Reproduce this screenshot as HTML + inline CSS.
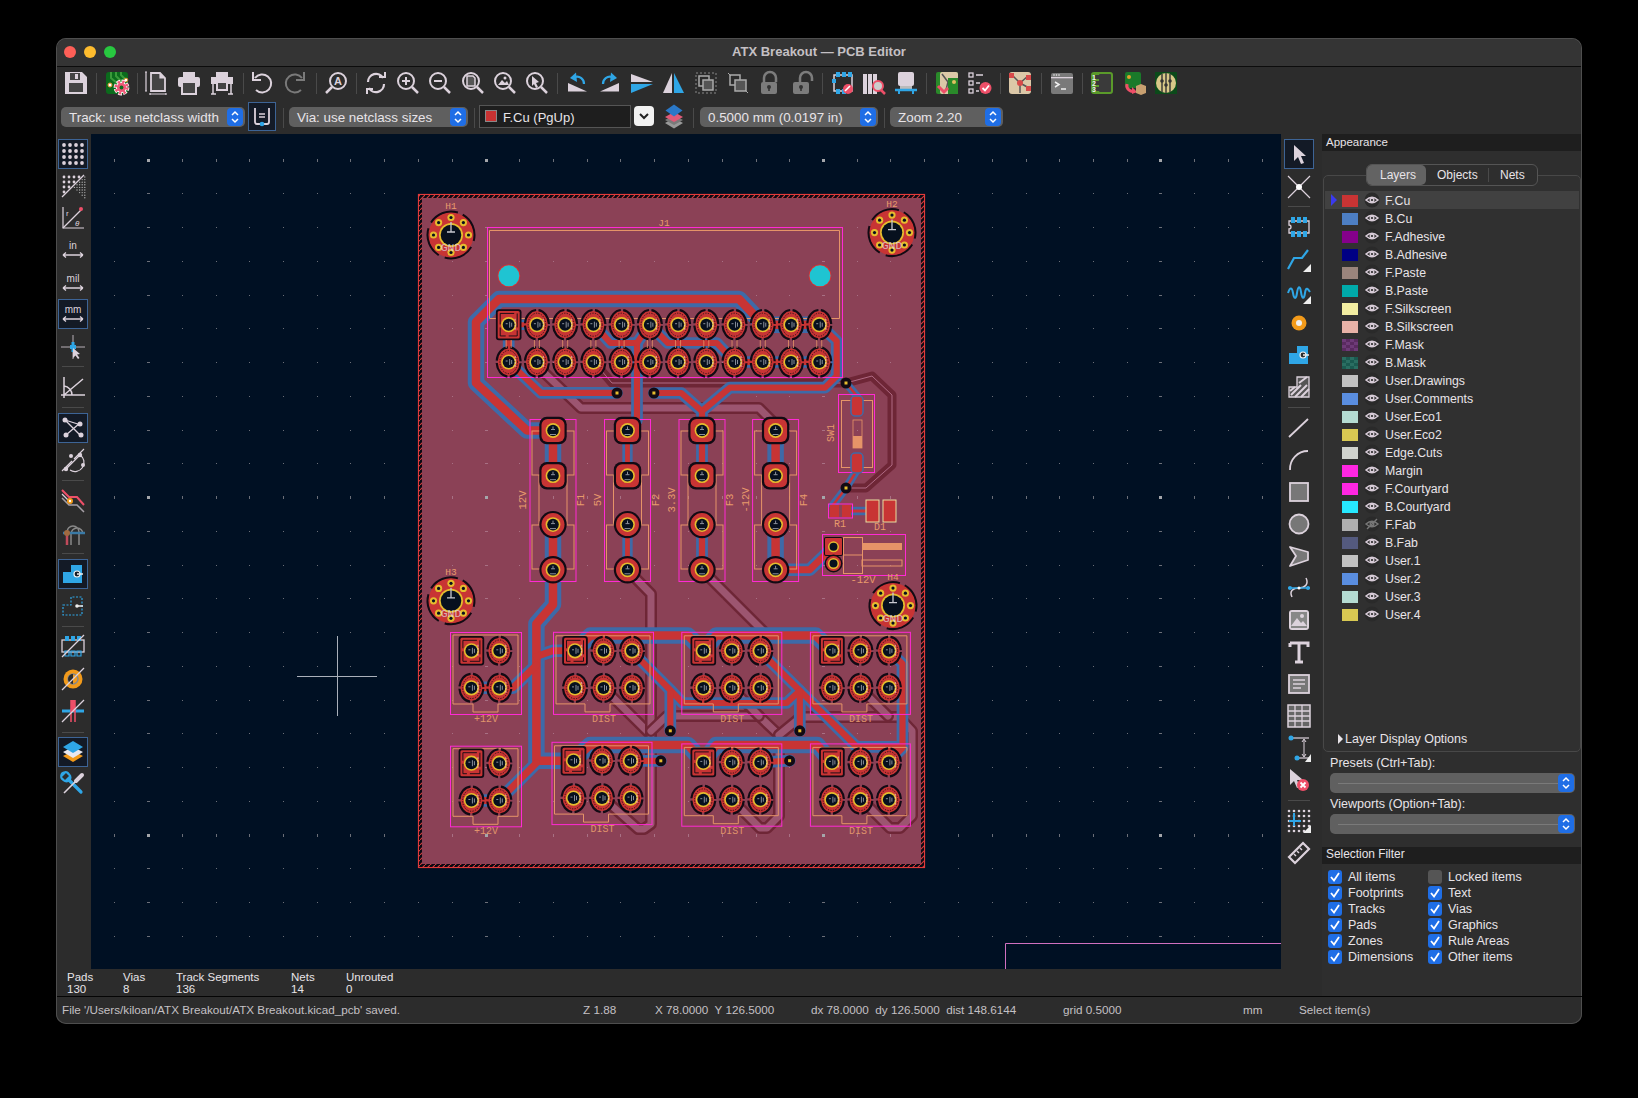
<!DOCTYPE html>
<html><head><meta charset="utf-8"><style>
html,body{margin:0;padding:0;background:#000;width:1638px;height:1098px;overflow:hidden}
body{font-family:"Liberation Sans", sans-serif;position:relative}
#win{position:absolute;left:56px;top:38px;width:1526px;height:986px;border-radius:10px;background:#2c2c2c;overflow:hidden;box-shadow:0 0 0 1px #4e4e4e inset}
</style></head><body>
<div id="win"></div>
<div style="position:absolute;left:57px;top:39px;width:1524px;height:27px;background:#343434;border-radius:9px 9px 0 0"></div>
<div style="position:absolute;left:57px;top:66px;width:1524px;height:1px;background:#0c0c0c"></div>
<div style="position:absolute;left:64px;top:46px;width:12px;height:12px;border-radius:50%;background:#fe5f57"></div>
<div style="position:absolute;left:84px;top:46px;width:12px;height:12px;border-radius:50%;background:#febc2e"></div>
<div style="position:absolute;left:104px;top:46px;width:12px;height:12px;border-radius:50%;background:#28c840"></div>
<div style="position:absolute;left:0;top:44px;width:1638px;text-align:center;font-size:13px;font-weight:bold;color:#c4c0c4;line-height:16px">ATX Breakout — PCB Editor</div>
<svg style="position:absolute;left:65px;top:72px;overflow:visible" width="22" height="22" viewBox="0 0 22 22" ><path d="M0 0H17L22 5V22H0Z" fill="#dcd2dc"/><rect x="5" y="1" width="10" height="7" fill="#444"/><rect x="10" y="2" width="3" height="5" fill="#dcd2dc"/><rect x="4" y="11" width="14" height="9" fill="#444"/></svg><div style="position:absolute;left:96px;top:73px;width:1px;height:21px;background:#4a4a4a"></div><svg style="position:absolute;left:106px;top:72px;overflow:visible" width="22" height="22" viewBox="0 0 22 22" ><rect x="0" y="0" width="22" height="22" rx="3" fill="#0b6b1c"/><path d="M5 0V6L12 12M10 0V4L16 10M15 0V3L20 8" stroke="#3a9a3a" stroke-width="2" fill="none"/><circle cx="4" cy="13" r="2" fill="#fff" stroke="#e0902a"/><circle cx="20" cy="8" r="1.8" fill="#fff" stroke="#e0902a"/><circle cx="15.5" cy="15.5" r="5.6" fill="#fff"/><circle cx="15.5" cy="15.5" r="5.6" fill="none" stroke="#fff" stroke-width="4.6" stroke-dasharray="3.2 1.2" stroke-dashoffset="0.6"/><circle cx="15.5" cy="15.5" r="5.6" fill="none" stroke="#ee5a78" stroke-width="3" stroke-dasharray="2.2 2.2"/><circle cx="15.5" cy="15.5" r="4.6" fill="#ee5a78"/><circle cx="15.5" cy="15.5" r="1.9" fill="#0b6b1c"/></svg><div style="position:absolute;left:137px;top:73px;width:1px;height:21px;background:#4a4a4a"></div><svg style="position:absolute;left:145px;top:72px;overflow:visible" width="22" height="22" viewBox="0 0 22 22" ><path d="M6 1H15L20 6V19H6Z" fill="#444" stroke="#dcd2dc" stroke-width="1.8"/><path d="M15 1V6H20" fill="#dcd2dc" stroke="#dcd2dc" stroke-width="1.2"/><path d="M1 0V19M0 0H2M0 19H2M5 22H21M5 21V23M21 21V23" stroke="#dcd2dc" stroke-width="1.2"/></svg><svg style="position:absolute;left:178px;top:72px;overflow:visible" width="22" height="22" viewBox="0 0 22 22" ><rect x="5" y="0" width="12" height="6" fill="#dcd2dc"/><rect x="0" y="5" width="22" height="10" rx="2" fill="#dcd2dc"/><rect x="4" y="10" width="14" height="12" fill="#444" stroke="#dcd2dc" stroke-width="2"/></svg><svg style="position:absolute;left:211px;top:72px;overflow:visible" width="22" height="22" viewBox="0 0 22 22" ><rect x="5" y="0" width="12" height="6" fill="#dcd2dc"/><rect x="0" y="5" width="22" height="7" fill="#dcd2dc"/><rect x="6" y="10" width="10" height="8" fill="#444" stroke="#dcd2dc" stroke-width="2"/><path d="M2 12V22M20 12V22M0 22H5M17 22H22" stroke="#dcd2dc" stroke-width="1.5"/></svg><div style="position:absolute;left:243px;top:73px;width:1px;height:21px;background:#4a4a4a"></div><svg style="position:absolute;left:251px;top:72px;overflow:visible" width="22" height="22" viewBox="0 0 22 22" ><path d="M4 6A9 9 0 1 1 5 18" stroke="#dcd2dc" stroke-width="2" fill="none"/><path d="M2 0V8H10" stroke="#dcd2dc" stroke-width="2" fill="none"/></svg><svg style="position:absolute;left:284px;top:72px;overflow:visible" width="22" height="22" viewBox="0 0 22 22" ><path d="M18 6A9 9 0 1 0 17 18" stroke="#7a7a7a" stroke-width="2" fill="none"/><path d="M20 0V8H12" stroke="#7a7a7a" stroke-width="2" fill="none"/></svg><div style="position:absolute;left:316px;top:73px;width:1px;height:21px;background:#4a4a4a"></div><svg style="position:absolute;left:325px;top:72px;overflow:visible" width="22" height="22" viewBox="0 0 22 22" ><circle cx="13" cy="9" r="8" stroke="#dcd2dc" stroke-width="2" fill="none"/><path d="M7 15L1 21" stroke="#dcd2dc" stroke-width="2.5"/><text x="13" y="13" font-size="11" font-weight="bold" fill="#dcd2dc" text-anchor="middle" font-family="Liberation Sans">A</text></svg><div style="position:absolute;left:356px;top:73px;width:1px;height:21px;background:#4a4a4a"></div><svg style="position:absolute;left:365px;top:72px;overflow:visible" width="22" height="22" viewBox="0 0 22 22" ><path d="M3 10A8 8 0 0 1 18 6M19 12A8 8 0 0 1 4 16" stroke="#dcd2dc" stroke-width="2.2" fill="none"/><path d="M14 5H20V0M8 17H2V22" stroke="#dcd2dc" stroke-width="2" fill="none"/></svg><svg style="position:absolute;left:397px;top:72px;overflow:visible" width="22" height="22" viewBox="0 0 22 22" ><circle cx="9" cy="9" r="8" stroke="#dcd2dc" stroke-width="2" fill="none"/><path d="M15 15L21 21" stroke="#dcd2dc" stroke-width="2.5"/><path d="M5 9H13M9 5V13" stroke="#dcd2dc" stroke-width="2"/></svg><svg style="position:absolute;left:429px;top:72px;overflow:visible" width="22" height="22" viewBox="0 0 22 22" ><circle cx="9" cy="9" r="8" stroke="#dcd2dc" stroke-width="2" fill="none"/><path d="M15 15L21 21" stroke="#dcd2dc" stroke-width="2.5"/><path d="M5 9H13" stroke="#dcd2dc" stroke-width="2"/></svg><svg style="position:absolute;left:462px;top:72px;overflow:visible" width="22" height="22" viewBox="0 0 22 22" ><circle cx="9" cy="9" r="8" stroke="#dcd2dc" stroke-width="2" fill="none"/><path d="M15 15L21 21" stroke="#dcd2dc" stroke-width="2.5"/><path d="M5 4H11L13 6V14H5Z" fill="#555" stroke="#dcd2dc" stroke-width="1.5"/></svg><svg style="position:absolute;left:494px;top:72px;overflow:visible" width="22" height="22" viewBox="0 0 22 22" ><circle cx="9" cy="9" r="8" stroke="#dcd2dc" stroke-width="2" fill="none"/><path d="M15 15L21 21" stroke="#dcd2dc" stroke-width="2.5"/><path d="M4 13L8 8L11 11L13 9L15 13Z" fill="#dcd2dc"/><circle cx="11" cy="6" r="1.5" fill="#dcd2dc"/></svg><svg style="position:absolute;left:526px;top:72px;overflow:visible" width="22" height="22" viewBox="0 0 22 22" ><circle cx="9" cy="9" r="8" stroke="#dcd2dc" stroke-width="2" fill="none"/><path d="M15 15L21 21" stroke="#dcd2dc" stroke-width="2.5"/><path d="M6 4L13 10L10 11L12 15L10 16L8 12L6 14Z" fill="#dcd2dc"/></svg><div style="position:absolute;left:557px;top:73px;width:1px;height:21px;background:#4a4a4a"></div><svg style="position:absolute;left:566px;top:72px;overflow:visible" width="22" height="22" viewBox="0 0 22 22" ><path d="M2 11L2 19.5L21 19.5Z" fill="#dcd2dc"/><path d="M18 12A7 7 0 0 0 9 5" stroke="#2fa6e6" stroke-width="2.2" fill="none"/><path d="M4 6L10 0.5L11 10Z" fill="#2fa6e6"/></svg><svg style="position:absolute;left:599px;top:72px;overflow:visible" width="22" height="22" viewBox="0 0 22 22" ><g transform="translate(22,0) scale(-1,1)"><path d="M2 11L2 19.5L21 19.5Z" fill="#dcd2dc"/><path d="M18 12A7 7 0 0 0 9 5" stroke="#2fa6e6" stroke-width="2.2" fill="none"/><path d="M4 6L10 0.5L11 10Z" fill="#2fa6e6"/></g></svg><svg style="position:absolute;left:631px;top:72px;overflow:visible" width="22" height="22" viewBox="0 0 22 22" ><path d="M0 2L22 10H0Z" fill="#dcd2dc"/><path d="M0 12H22L0 21Z" fill="#2fa6e6"/></svg><svg style="position:absolute;left:662px;top:72px;overflow:visible" width="22" height="22" viewBox="0 0 22 22" ><path d="M10 1L10 21H1Z" fill="#dcd2dc"/><path d="M12 1L22 21H12Z" fill="#2fa6e6"/></svg><svg style="position:absolute;left:695px;top:72px;overflow:visible" width="22" height="22" viewBox="0 0 22 22" ><rect x="1" y="1" width="20" height="20" fill="none" stroke="#888" stroke-width="1" stroke-dasharray="2 2"/><rect x="4" y="4" width="10" height="10" fill="none" stroke="#aaa" stroke-width="1.5"/><rect x="8" y="8" width="10" height="10" fill="#555" stroke="#aaa" stroke-width="1.5"/></svg><svg style="position:absolute;left:727px;top:72px;overflow:visible" width="22" height="22" viewBox="0 0 22 22" ><rect x="3" y="3" width="10" height="10" fill="none" stroke="#aaa" stroke-width="1.5"/><rect x="8" y="8" width="11" height="11" fill="#555" stroke="#aaa" stroke-width="1.5"/><path d="M1 1L4 4M21 21L18 18" stroke="#aaa"/></svg><svg style="position:absolute;left:759px;top:72px;overflow:visible" width="22" height="22" viewBox="0 0 22 22" ><path d="M5 10V6A6 6 0 0 1 17 6V10" stroke="#7c7c7c" stroke-width="2.5" fill="none"/><rect x="2" y="10" width="16" height="12" rx="2" fill="#7c7c7c"/><circle cx="10" cy="15" r="2" fill="#333"/><rect x="9.2" y="15" width="1.6" height="4" fill="#333"/></svg><svg style="position:absolute;left:791px;top:72px;overflow:visible" width="22" height="22" viewBox="0 0 22 22" ><path d="M9 10V6A6 6 0 0 1 21 6V9" stroke="#7c7c7c" stroke-width="2.5" fill="none"/><rect x="2" y="10" width="16" height="12" rx="2" fill="#7c7c7c"/><circle cx="10" cy="15" r="2" fill="#333"/><rect x="9.2" y="15" width="1.6" height="4" fill="#333"/></svg><div style="position:absolute;left:822px;top:73px;width:1px;height:21px;background:#4a4a4a"></div><svg style="position:absolute;left:831px;top:72px;overflow:visible" width="22" height="22" viewBox="0 0 22 22" ><rect x="3" y="3" width="18" height="16" fill="none" stroke="#dcd2dc" stroke-width="1.5"/><path d="M5 0h4v5h-4zM11 0h4v5h-4zM17 0h4v5h-4zM5 17h4v5h-4zM11 17h4v5h-4zM1 7h4v4h-4z" fill="#2fa6e6"/><circle cx="17" cy="17" r="5" fill="#ee4f68"/><path d="M14 19L19 14" stroke="#fff" stroke-width="1.6"/></svg><svg style="position:absolute;left:863px;top:72px;overflow:visible" width="22" height="22" viewBox="0 0 22 22" ><rect x="0" y="2" width="4" height="20" fill="#dcd2dc"/><rect x="5" y="2" width="4" height="20" fill="#dcd2dc"/><rect x="10" y="2" width="4" height="20" fill="#dcd2dc"/><circle cx="15" cy="14" r="5" fill="#ccc" stroke="#ee4f68" stroke-width="2"/><path d="M18 18L22 22" stroke="#ee4f68" stroke-width="2.5"/></svg><svg style="position:absolute;left:895px;top:72px;overflow:visible" width="22" height="22" viewBox="0 0 22 22" ><rect x="3" y="0" width="16" height="14" rx="2" fill="#dcd2dc"/><rect x="5" y="14" width="12" height="3" fill="#bbb"/><path d="M0 18H22" stroke="#2fa6e6" stroke-width="2.5"/><path d="M4 18V22M18 18V22" stroke="#2fa6e6" stroke-width="2"/></svg><div style="position:absolute;left:926px;top:73px;width:1px;height:21px;background:#4a4a4a"></div><svg style="position:absolute;left:936px;top:72px;overflow:visible" width="22" height="22" viewBox="0 0 22 22" ><rect x="0" y="0" width="22" height="22" rx="2" fill="#2a8a2a"/><rect x="4" y="0" width="18" height="22" rx="2" fill="#dcc8a8"/><path d="M6 2L12 10L10 18" stroke="#555" stroke-width="1.5" fill="none"/><rect x="12" y="6" width="10" height="16" fill="#2a8a2a"/><circle cx="18" cy="10" r="2" fill="#e0c060"/><path d="M2 14L8 20L12 16" stroke="#ee4f68" stroke-width="3" fill="none"/></svg><svg style="position:absolute;left:969px;top:72px;overflow:visible" width="22" height="22" viewBox="0 0 22 22" ><rect x="0" y="1" width="4" height="4" fill="none" stroke="#dcd2dc" stroke-width="1.3"/><rect x="0" y="9" width="4" height="4" fill="none" stroke="#dcd2dc" stroke-width="1.3"/><rect x="0" y="17" width="4" height="4" fill="none" stroke="#dcd2dc" stroke-width="1.3"/><path d="M7 3H14M7 11H11M7 19H10" stroke="#dcd2dc" stroke-width="1.3"/><circle cx="16.5" cy="16" r="6" fill="#ee4f68"/><path d="M13.5 16L16 18.5L20 13.5" stroke="#fff" stroke-width="1.8" fill="none"/></svg><div style="position:absolute;left:1000px;top:73px;width:1px;height:21px;background:#4a4a4a"></div><svg style="position:absolute;left:1009px;top:72px;overflow:visible" width="22" height="22" viewBox="0 0 22 22" ><rect x="0" y="0" width="22" height="22" rx="3" fill="#dcc8a8"/><path d="M11 11L3 3M11 11L19 4M11 11L11 21M11 11L20 16" stroke="#555" stroke-width="1.5"/><rect x="0" y="1" width="5" height="5" fill="#d84a4a"/><rect x="17" y="3" width="5" height="5" fill="#d84a4a"/><rect x="17" y="14" width="5" height="5" fill="#d84a4a"/><circle cx="11" cy="11" r="3" fill="#d84a4a"/></svg><div style="position:absolute;left:1041px;top:73px;width:1px;height:21px;background:#4a4a4a"></div><svg style="position:absolute;left:1051px;top:72px;overflow:visible" width="22" height="22" viewBox="0 0 22 22" ><rect x="0" y="1" width="22" height="21" rx="2" fill="#7a7a7a"/><rect x="0" y="5" width="22" height="1.3" fill="#dcd2dc"/><circle cx="3" cy="3" r="0.8" fill="#eee"/><circle cx="5.5" cy="3" r="0.8" fill="#eee"/><circle cx="8" cy="3" r="0.8" fill="#eee"/><path d="M4 10L8 12.5L4 15M10 17H15" stroke="#f0f0f0" stroke-width="1.5" fill="none"/></svg><div style="position:absolute;left:1082px;top:73px;width:1px;height:21px;background:#4a4a4a"></div><svg style="position:absolute;left:1091px;top:72px;overflow:visible" width="22" height="22" viewBox="0 0 22 22" ><rect x="0" y="0" width="22" height="22" rx="3" fill="#5a9a2a"/><rect x="8" y="2" width="12" height="18" rx="1" fill="#3a3a3a"/><rect x="4" y="3" width="4" height="4" fill="#3a3a3a"/><rect x="4" y="9" width="4" height="4" fill="#3a3a3a"/><rect x="4" y="15" width="4" height="4" fill="#3a3a3a"/><text x="3" y="8" font-size="7" font-weight="bold" fill="#f0f0f0" font-family="Liberation Sans" text-anchor="middle">1</text><text x="3" y="14" font-size="7" font-weight="bold" fill="#f0f0f0" font-family="Liberation Sans" text-anchor="middle">2</text><text x="3" y="20" font-size="7" font-weight="bold" fill="#f0f0f0" font-family="Liberation Sans" text-anchor="middle">3</text></svg><svg style="position:absolute;left:1123px;top:72px;overflow:visible" width="22" height="22" viewBox="0 0 22 22" ><rect x="2" y="0" width="16" height="16" rx="2" fill="#1a7a2a"/><circle cx="6" cy="5" r="2" fill="#e0a030"/><path d="M4 12A6 6 0 0 0 12 19" stroke="#ee4f68" stroke-width="3" fill="none"/><path d="M9 15L14 20L9 22Z" fill="#ee4f68"/><path d="M13 14L18 12L23 14V21L18 23L13 21Z" fill="#c8a070"/></svg><svg style="position:absolute;left:1155px;top:72px;overflow:visible" width="22" height="22" viewBox="0 0 22 22" ><rect x="0" y="0" width="22" height="22" fill="#0b4a1a"/><circle cx="11" cy="11" r="10" fill="#d8c888"/><path d="M7 2V20M11 1V21M15 2V20" stroke="#333" stroke-width="1.4"/><circle cx="7" cy="9" r="1.8" fill="#333"/><circle cx="15" cy="9" r="1.8" fill="#333"/><circle cx="11" cy="13" r="1.8" fill="#333"/></svg>
<div style="position:absolute;left:61px;top:107px;width:184px;height:20px;border-radius:5px;background:#5f5f5f"></div><div style="position:absolute;left:69px;top:110.8px;font-size:13.4px;line-height:13.4px;color:#e8e4e8;font-weight:normal;white-space:nowrap;">Track: use netclass width</div><div style="position:absolute;left:227px;top:108px;width:16px;height:18px;border-radius:4px;background:#1f6ee6"></div><svg style="position:absolute;left:227px;top:108px;overflow:visible" width="16" height="18" viewBox="0 0 16 18" ><path d="M5 7.0L8 4.0L11 7.0M5 11.0L8 14.0L11 11.0" stroke="#fff" stroke-width="1.5" fill="none"/></svg><div style="position:absolute;left:248px;top:102px;width:28px;height:29px;border:1px solid #3d6496;background:#141b27;box-sizing:border-box"></div><svg style="position:absolute;left:253px;top:107px;overflow:visible" width="18" height="20" viewBox="0 0 18 20" ><path d="M2 1V15A2 2 0 0 0 4 17H14A2 2 0 0 0 16 15V1" stroke="#dcd2dc" stroke-width="1.8" fill="none"/><path d="M6 7H12M6 10H12" stroke="#dcd2dc" stroke-width="1.3"/><circle cx="9" cy="17" r="2.3" fill="#2fa6e6"/></svg><div style="position:absolute;left:283px;top:108px;width:1px;height:20px;background:#4a4a4a"></div><div style="position:absolute;left:289px;top:107px;width:179px;height:20px;border-radius:5px;background:#5f5f5f"></div><div style="position:absolute;left:297px;top:110.8px;font-size:13.4px;line-height:13.4px;color:#e8e4e8;font-weight:normal;white-space:nowrap;">Via: use netclass sizes</div><div style="position:absolute;left:450px;top:108px;width:16px;height:18px;border-radius:4px;background:#1f6ee6"></div><svg style="position:absolute;left:450px;top:108px;overflow:visible" width="16" height="18" viewBox="0 0 16 18" ><path d="M5 7.0L8 4.0L11 7.0M5 11.0L8 14.0L11 11.0" stroke="#fff" stroke-width="1.5" fill="none"/></svg><div style="position:absolute;left:474px;top:108px;width:1px;height:20px;background:#4a4a4a"></div><div style="position:absolute;left:479px;top:105px;width:152px;height:23px;border:1px solid #555;background:#1e1e1e;box-sizing:border-box"></div><div style="position:absolute;left:485px;top:110px;width:12px;height:12px;background:#c83232;border:0.5px solid #888;box-sizing:border-box"></div><div style="position:absolute;left:503px;top:111.4px;font-size:13px;line-height:13px;color:#e8e4e8;font-weight:normal;white-space:nowrap;">F.Cu (PgUp)</div><div style="position:absolute;left:634px;top:106px;width:20px;height:20px;border-radius:4px;background:#f2f2f2"></div><svg style="position:absolute;left:634px;top:106px;overflow:visible" width="20" height="20" viewBox="0 0 20 20" ><path d="M6 8L10 12L14 8" stroke="#222" stroke-width="2" fill="none"/></svg><svg style="position:absolute;left:664px;top:104px;overflow:visible" width="20" height="26" viewBox="0 0 20 26" ><path d="M10 14L19 19L10 24.5L1 19Z" fill="#9a9a9a"/><path d="M10 11L19 16L10 21L1 16Z" fill="#7a7a7a"/><path d="M10 8L19 13L10 18L1 13Z" fill="#e05a78"/><path d="M10 0.5L18.5 6.5L10 12.5L1.5 6.5Z" fill="#2a78c8"/></svg><div style="position:absolute;left:693px;top:108px;width:1px;height:20px;background:#4a4a4a"></div><div style="position:absolute;left:700px;top:107px;width:178px;height:20px;border-radius:5px;background:#5f5f5f"></div><div style="position:absolute;left:708px;top:110.8px;font-size:13.4px;line-height:13.4px;color:#e8e4e8;font-weight:normal;white-space:nowrap;">0.5000 mm (0.0197 in)</div><div style="position:absolute;left:860px;top:108px;width:16px;height:18px;border-radius:4px;background:#1f6ee6"></div><svg style="position:absolute;left:860px;top:108px;overflow:visible" width="16" height="18" viewBox="0 0 16 18" ><path d="M5 7.0L8 4.0L11 7.0M5 11.0L8 14.0L11 11.0" stroke="#fff" stroke-width="1.5" fill="none"/></svg><div style="position:absolute;left:884px;top:108px;width:1px;height:20px;background:#4a4a4a"></div><div style="position:absolute;left:890px;top:107px;width:113px;height:20px;border-radius:5px;background:#5f5f5f"></div><div style="position:absolute;left:898px;top:110.8px;font-size:13.4px;line-height:13.4px;color:#e8e4e8;font-weight:normal;white-space:nowrap;">Zoom 2.20</div><div style="position:absolute;left:985px;top:108px;width:16px;height:18px;border-radius:4px;background:#1f6ee6"></div><svg style="position:absolute;left:985px;top:108px;overflow:visible" width="16" height="18" viewBox="0 0 16 18" ><path d="M5 7.0L8 4.0L11 7.0M5 11.0L8 14.0L11 11.0" stroke="#fff" stroke-width="1.5" fill="none"/></svg>
<div style="position:absolute;left:91px;top:134px;width:1190px;height:835px;background:#001023;overflow:hidden"><svg width="1190" height="835" viewBox="91 134 1190 835" style="position:absolute;left:0;top:0"><defs><pattern id="hatch" width="5" height="5" patternUnits="userSpaceOnUse"><rect width="5" height="5" fill="#0a0a14"/><path d="M0 5L5 0" stroke="#d83a3a" stroke-width="1.1"/></pattern></defs><rect x="418" y="194" width="507" height="674" fill="#8b4156"/><rect x="114" y="159" width="1" height="3" fill="#6b6f78"/><rect x="114" y="193" width="1" height="1" fill="#6b6f78"/><rect x="114" y="227" width="1" height="1" fill="#6b6f78"/><rect x="114" y="261" width="1" height="1" fill="#6b6f78"/><rect x="114" y="295" width="1" height="1" fill="#6b6f78"/><rect x="114" y="328" width="1" height="1" fill="#6b6f78"/><rect x="114" y="362" width="1" height="1" fill="#6b6f78"/><rect x="114" y="396" width="1" height="1" fill="#6b6f78"/><rect x="114" y="430" width="1" height="1" fill="#6b6f78"/><rect x="114" y="463" width="1" height="1" fill="#6b6f78"/><rect x="114" y="496" width="1" height="3" fill="#6b6f78"/><rect x="114" y="531" width="1" height="1" fill="#6b6f78"/><rect x="114" y="565" width="1" height="1" fill="#6b6f78"/><rect x="114" y="598" width="1" height="1" fill="#6b6f78"/><rect x="114" y="632" width="1" height="1" fill="#6b6f78"/><rect x="114" y="666" width="1" height="1" fill="#6b6f78"/><rect x="114" y="700" width="1" height="1" fill="#6b6f78"/><rect x="114" y="733" width="1" height="1" fill="#6b6f78"/><rect x="114" y="767" width="1" height="1" fill="#6b6f78"/><rect x="114" y="801" width="1" height="1" fill="#6b6f78"/><rect x="114" y="834" width="1" height="3" fill="#6b6f78"/><rect x="114" y="868" width="1" height="1" fill="#6b6f78"/><rect x="114" y="902" width="1" height="1" fill="#6b6f78"/><rect x="114" y="936" width="1" height="1" fill="#6b6f78"/><rect x="147" y="159" width="3" height="3" fill="#a4a6aa"/><rect x="147" y="193" width="3" height="1" fill="#6b6f78"/><rect x="147" y="227" width="3" height="1" fill="#6b6f78"/><rect x="147" y="261" width="3" height="1" fill="#6b6f78"/><rect x="147" y="295" width="3" height="1" fill="#6b6f78"/><rect x="147" y="328" width="3" height="1" fill="#6b6f78"/><rect x="147" y="362" width="3" height="1" fill="#6b6f78"/><rect x="147" y="396" width="3" height="1" fill="#6b6f78"/><rect x="147" y="430" width="3" height="1" fill="#6b6f78"/><rect x="147" y="463" width="3" height="1" fill="#6b6f78"/><rect x="147" y="496" width="3" height="3" fill="#a4a6aa"/><rect x="147" y="531" width="3" height="1" fill="#6b6f78"/><rect x="147" y="565" width="3" height="1" fill="#6b6f78"/><rect x="147" y="598" width="3" height="1" fill="#6b6f78"/><rect x="147" y="632" width="3" height="1" fill="#6b6f78"/><rect x="147" y="666" width="3" height="1" fill="#6b6f78"/><rect x="147" y="700" width="3" height="1" fill="#6b6f78"/><rect x="147" y="733" width="3" height="1" fill="#6b6f78"/><rect x="147" y="767" width="3" height="1" fill="#6b6f78"/><rect x="147" y="801" width="3" height="1" fill="#6b6f78"/><rect x="147" y="834" width="3" height="3" fill="#a4a6aa"/><rect x="147" y="868" width="3" height="1" fill="#6b6f78"/><rect x="147" y="902" width="3" height="1" fill="#6b6f78"/><rect x="147" y="936" width="3" height="1" fill="#6b6f78"/><rect x="182" y="159" width="1" height="3" fill="#6b6f78"/><rect x="182" y="193" width="1" height="1" fill="#6b6f78"/><rect x="182" y="227" width="1" height="1" fill="#6b6f78"/><rect x="182" y="261" width="1" height="1" fill="#6b6f78"/><rect x="182" y="295" width="1" height="1" fill="#6b6f78"/><rect x="182" y="328" width="1" height="1" fill="#6b6f78"/><rect x="182" y="362" width="1" height="1" fill="#6b6f78"/><rect x="182" y="396" width="1" height="1" fill="#6b6f78"/><rect x="182" y="430" width="1" height="1" fill="#6b6f78"/><rect x="182" y="463" width="1" height="1" fill="#6b6f78"/><rect x="182" y="496" width="1" height="3" fill="#6b6f78"/><rect x="182" y="531" width="1" height="1" fill="#6b6f78"/><rect x="182" y="565" width="1" height="1" fill="#6b6f78"/><rect x="182" y="598" width="1" height="1" fill="#6b6f78"/><rect x="182" y="632" width="1" height="1" fill="#6b6f78"/><rect x="182" y="666" width="1" height="1" fill="#6b6f78"/><rect x="182" y="700" width="1" height="1" fill="#6b6f78"/><rect x="182" y="733" width="1" height="1" fill="#6b6f78"/><rect x="182" y="767" width="1" height="1" fill="#6b6f78"/><rect x="182" y="801" width="1" height="1" fill="#6b6f78"/><rect x="182" y="834" width="1" height="3" fill="#6b6f78"/><rect x="182" y="868" width="1" height="1" fill="#6b6f78"/><rect x="182" y="902" width="1" height="1" fill="#6b6f78"/><rect x="182" y="936" width="1" height="1" fill="#6b6f78"/><rect x="216" y="159" width="1" height="3" fill="#6b6f78"/><rect x="216" y="193" width="1" height="1" fill="#6b6f78"/><rect x="216" y="227" width="1" height="1" fill="#6b6f78"/><rect x="216" y="261" width="1" height="1" fill="#6b6f78"/><rect x="216" y="295" width="1" height="1" fill="#6b6f78"/><rect x="216" y="328" width="1" height="1" fill="#6b6f78"/><rect x="216" y="362" width="1" height="1" fill="#6b6f78"/><rect x="216" y="396" width="1" height="1" fill="#6b6f78"/><rect x="216" y="430" width="1" height="1" fill="#6b6f78"/><rect x="216" y="463" width="1" height="1" fill="#6b6f78"/><rect x="216" y="496" width="1" height="3" fill="#6b6f78"/><rect x="216" y="531" width="1" height="1" fill="#6b6f78"/><rect x="216" y="565" width="1" height="1" fill="#6b6f78"/><rect x="216" y="598" width="1" height="1" fill="#6b6f78"/><rect x="216" y="632" width="1" height="1" fill="#6b6f78"/><rect x="216" y="666" width="1" height="1" fill="#6b6f78"/><rect x="216" y="700" width="1" height="1" fill="#6b6f78"/><rect x="216" y="733" width="1" height="1" fill="#6b6f78"/><rect x="216" y="767" width="1" height="1" fill="#6b6f78"/><rect x="216" y="801" width="1" height="1" fill="#6b6f78"/><rect x="216" y="834" width="1" height="3" fill="#6b6f78"/><rect x="216" y="868" width="1" height="1" fill="#6b6f78"/><rect x="216" y="902" width="1" height="1" fill="#6b6f78"/><rect x="216" y="936" width="1" height="1" fill="#6b6f78"/><rect x="249" y="159" width="1" height="3" fill="#6b6f78"/><rect x="249" y="193" width="1" height="1" fill="#6b6f78"/><rect x="249" y="227" width="1" height="1" fill="#6b6f78"/><rect x="249" y="261" width="1" height="1" fill="#6b6f78"/><rect x="249" y="295" width="1" height="1" fill="#6b6f78"/><rect x="249" y="328" width="1" height="1" fill="#6b6f78"/><rect x="249" y="362" width="1" height="1" fill="#6b6f78"/><rect x="249" y="396" width="1" height="1" fill="#6b6f78"/><rect x="249" y="430" width="1" height="1" fill="#6b6f78"/><rect x="249" y="463" width="1" height="1" fill="#6b6f78"/><rect x="249" y="496" width="1" height="3" fill="#6b6f78"/><rect x="249" y="531" width="1" height="1" fill="#6b6f78"/><rect x="249" y="565" width="1" height="1" fill="#6b6f78"/><rect x="249" y="598" width="1" height="1" fill="#6b6f78"/><rect x="249" y="632" width="1" height="1" fill="#6b6f78"/><rect x="249" y="666" width="1" height="1" fill="#6b6f78"/><rect x="249" y="700" width="1" height="1" fill="#6b6f78"/><rect x="249" y="733" width="1" height="1" fill="#6b6f78"/><rect x="249" y="767" width="1" height="1" fill="#6b6f78"/><rect x="249" y="801" width="1" height="1" fill="#6b6f78"/><rect x="249" y="834" width="1" height="3" fill="#6b6f78"/><rect x="249" y="868" width="1" height="1" fill="#6b6f78"/><rect x="249" y="902" width="1" height="1" fill="#6b6f78"/><rect x="249" y="936" width="1" height="1" fill="#6b6f78"/><rect x="283" y="159" width="1" height="3" fill="#6b6f78"/><rect x="283" y="193" width="1" height="1" fill="#6b6f78"/><rect x="283" y="227" width="1" height="1" fill="#6b6f78"/><rect x="283" y="261" width="1" height="1" fill="#6b6f78"/><rect x="283" y="295" width="1" height="1" fill="#6b6f78"/><rect x="283" y="328" width="1" height="1" fill="#6b6f78"/><rect x="283" y="362" width="1" height="1" fill="#6b6f78"/><rect x="283" y="396" width="1" height="1" fill="#6b6f78"/><rect x="283" y="430" width="1" height="1" fill="#6b6f78"/><rect x="283" y="463" width="1" height="1" fill="#6b6f78"/><rect x="283" y="496" width="1" height="3" fill="#6b6f78"/><rect x="283" y="531" width="1" height="1" fill="#6b6f78"/><rect x="283" y="565" width="1" height="1" fill="#6b6f78"/><rect x="283" y="598" width="1" height="1" fill="#6b6f78"/><rect x="283" y="632" width="1" height="1" fill="#6b6f78"/><rect x="283" y="666" width="1" height="1" fill="#6b6f78"/><rect x="283" y="700" width="1" height="1" fill="#6b6f78"/><rect x="283" y="733" width="1" height="1" fill="#6b6f78"/><rect x="283" y="767" width="1" height="1" fill="#6b6f78"/><rect x="283" y="801" width="1" height="1" fill="#6b6f78"/><rect x="283" y="834" width="1" height="3" fill="#6b6f78"/><rect x="283" y="868" width="1" height="1" fill="#6b6f78"/><rect x="283" y="902" width="1" height="1" fill="#6b6f78"/><rect x="283" y="936" width="1" height="1" fill="#6b6f78"/><rect x="317" y="159" width="1" height="3" fill="#6b6f78"/><rect x="317" y="193" width="1" height="1" fill="#6b6f78"/><rect x="317" y="227" width="1" height="1" fill="#6b6f78"/><rect x="317" y="261" width="1" height="1" fill="#6b6f78"/><rect x="317" y="295" width="1" height="1" fill="#6b6f78"/><rect x="317" y="328" width="1" height="1" fill="#6b6f78"/><rect x="317" y="362" width="1" height="1" fill="#6b6f78"/><rect x="317" y="396" width="1" height="1" fill="#6b6f78"/><rect x="317" y="430" width="1" height="1" fill="#6b6f78"/><rect x="317" y="463" width="1" height="1" fill="#6b6f78"/><rect x="317" y="496" width="1" height="3" fill="#6b6f78"/><rect x="317" y="531" width="1" height="1" fill="#6b6f78"/><rect x="317" y="565" width="1" height="1" fill="#6b6f78"/><rect x="317" y="598" width="1" height="1" fill="#6b6f78"/><rect x="317" y="632" width="1" height="1" fill="#6b6f78"/><rect x="317" y="666" width="1" height="1" fill="#6b6f78"/><rect x="317" y="700" width="1" height="1" fill="#6b6f78"/><rect x="317" y="733" width="1" height="1" fill="#6b6f78"/><rect x="317" y="767" width="1" height="1" fill="#6b6f78"/><rect x="317" y="801" width="1" height="1" fill="#6b6f78"/><rect x="317" y="834" width="1" height="3" fill="#6b6f78"/><rect x="317" y="868" width="1" height="1" fill="#6b6f78"/><rect x="317" y="902" width="1" height="1" fill="#6b6f78"/><rect x="317" y="936" width="1" height="1" fill="#6b6f78"/><rect x="350" y="159" width="1" height="3" fill="#6b6f78"/><rect x="350" y="193" width="1" height="1" fill="#6b6f78"/><rect x="350" y="227" width="1" height="1" fill="#6b6f78"/><rect x="350" y="261" width="1" height="1" fill="#6b6f78"/><rect x="350" y="295" width="1" height="1" fill="#6b6f78"/><rect x="350" y="328" width="1" height="1" fill="#6b6f78"/><rect x="350" y="362" width="1" height="1" fill="#6b6f78"/><rect x="350" y="396" width="1" height="1" fill="#6b6f78"/><rect x="350" y="430" width="1" height="1" fill="#6b6f78"/><rect x="350" y="463" width="1" height="1" fill="#6b6f78"/><rect x="350" y="496" width="1" height="3" fill="#6b6f78"/><rect x="350" y="531" width="1" height="1" fill="#6b6f78"/><rect x="350" y="565" width="1" height="1" fill="#6b6f78"/><rect x="350" y="598" width="1" height="1" fill="#6b6f78"/><rect x="350" y="632" width="1" height="1" fill="#6b6f78"/><rect x="350" y="666" width="1" height="1" fill="#6b6f78"/><rect x="350" y="700" width="1" height="1" fill="#6b6f78"/><rect x="350" y="733" width="1" height="1" fill="#6b6f78"/><rect x="350" y="767" width="1" height="1" fill="#6b6f78"/><rect x="350" y="801" width="1" height="1" fill="#6b6f78"/><rect x="350" y="834" width="1" height="3" fill="#6b6f78"/><rect x="350" y="868" width="1" height="1" fill="#6b6f78"/><rect x="350" y="902" width="1" height="1" fill="#6b6f78"/><rect x="350" y="936" width="1" height="1" fill="#6b6f78"/><rect x="384" y="159" width="1" height="3" fill="#6b6f78"/><rect x="384" y="193" width="1" height="1" fill="#6b6f78"/><rect x="384" y="227" width="1" height="1" fill="#6b6f78"/><rect x="384" y="261" width="1" height="1" fill="#6b6f78"/><rect x="384" y="295" width="1" height="1" fill="#6b6f78"/><rect x="384" y="328" width="1" height="1" fill="#6b6f78"/><rect x="384" y="362" width="1" height="1" fill="#6b6f78"/><rect x="384" y="396" width="1" height="1" fill="#6b6f78"/><rect x="384" y="430" width="1" height="1" fill="#6b6f78"/><rect x="384" y="463" width="1" height="1" fill="#6b6f78"/><rect x="384" y="496" width="1" height="3" fill="#6b6f78"/><rect x="384" y="531" width="1" height="1" fill="#6b6f78"/><rect x="384" y="565" width="1" height="1" fill="#6b6f78"/><rect x="384" y="598" width="1" height="1" fill="#6b6f78"/><rect x="384" y="632" width="1" height="1" fill="#6b6f78"/><rect x="384" y="666" width="1" height="1" fill="#6b6f78"/><rect x="384" y="700" width="1" height="1" fill="#6b6f78"/><rect x="384" y="733" width="1" height="1" fill="#6b6f78"/><rect x="384" y="767" width="1" height="1" fill="#6b6f78"/><rect x="384" y="801" width="1" height="1" fill="#6b6f78"/><rect x="384" y="834" width="1" height="3" fill="#6b6f78"/><rect x="384" y="868" width="1" height="1" fill="#6b6f78"/><rect x="384" y="902" width="1" height="1" fill="#6b6f78"/><rect x="384" y="936" width="1" height="1" fill="#6b6f78"/><rect x="418" y="159" width="1" height="3" fill="#6b6f78"/><rect x="418" y="902" width="1" height="1" fill="#6b6f78"/><rect x="418" y="936" width="1" height="1" fill="#6b6f78"/><rect x="452" y="159" width="1" height="3" fill="#6b6f78"/><rect x="452" y="227" width="1" height="1" fill="#a87084"/><rect x="452" y="261" width="1" height="1" fill="#a87084"/><rect x="452" y="295" width="1" height="1" fill="#a87084"/><rect x="452" y="328" width="1" height="1" fill="#a87084"/><rect x="452" y="362" width="1" height="1" fill="#a87084"/><rect x="452" y="396" width="1" height="1" fill="#a87084"/><rect x="452" y="430" width="1" height="1" fill="#a87084"/><rect x="452" y="463" width="1" height="1" fill="#a87084"/><rect x="452" y="496" width="1" height="3" fill="#a87084"/><rect x="452" y="531" width="1" height="1" fill="#a87084"/><rect x="452" y="565" width="1" height="1" fill="#a87084"/><rect x="452" y="598" width="1" height="1" fill="#a87084"/><rect x="452" y="632" width="1" height="1" fill="#a87084"/><rect x="452" y="666" width="1" height="1" fill="#a87084"/><rect x="452" y="700" width="1" height="1" fill="#a87084"/><rect x="452" y="733" width="1" height="1" fill="#a87084"/><rect x="452" y="767" width="1" height="1" fill="#a87084"/><rect x="452" y="801" width="1" height="1" fill="#a87084"/><rect x="452" y="834" width="1" height="3" fill="#a87084"/><rect x="452" y="902" width="1" height="1" fill="#6b6f78"/><rect x="452" y="936" width="1" height="1" fill="#6b6f78"/><rect x="485" y="159" width="3" height="3" fill="#a4a6aa"/><rect x="485" y="227" width="3" height="1" fill="#a87084"/><rect x="485" y="261" width="3" height="1" fill="#a87084"/><rect x="485" y="295" width="3" height="1" fill="#a87084"/><rect x="485" y="328" width="3" height="1" fill="#a87084"/><rect x="485" y="362" width="3" height="1" fill="#a87084"/><rect x="485" y="396" width="3" height="1" fill="#a87084"/><rect x="485" y="430" width="3" height="1" fill="#a87084"/><rect x="485" y="463" width="3" height="1" fill="#a87084"/><rect x="485" y="496" width="3" height="3" fill="#a4a6aa"/><rect x="485" y="531" width="3" height="1" fill="#a87084"/><rect x="485" y="565" width="3" height="1" fill="#a87084"/><rect x="485" y="598" width="3" height="1" fill="#a87084"/><rect x="485" y="632" width="3" height="1" fill="#a87084"/><rect x="485" y="666" width="3" height="1" fill="#a87084"/><rect x="485" y="700" width="3" height="1" fill="#a87084"/><rect x="485" y="733" width="3" height="1" fill="#a87084"/><rect x="485" y="767" width="3" height="1" fill="#a87084"/><rect x="485" y="801" width="3" height="1" fill="#a87084"/><rect x="485" y="834" width="3" height="3" fill="#a4a6aa"/><rect x="485" y="902" width="3" height="1" fill="#6b6f78"/><rect x="485" y="936" width="3" height="1" fill="#6b6f78"/><rect x="519" y="159" width="1" height="3" fill="#6b6f78"/><rect x="519" y="227" width="1" height="1" fill="#a87084"/><rect x="519" y="261" width="1" height="1" fill="#a87084"/><rect x="519" y="295" width="1" height="1" fill="#a87084"/><rect x="519" y="328" width="1" height="1" fill="#a87084"/><rect x="519" y="362" width="1" height="1" fill="#a87084"/><rect x="519" y="396" width="1" height="1" fill="#a87084"/><rect x="519" y="430" width="1" height="1" fill="#a87084"/><rect x="519" y="463" width="1" height="1" fill="#a87084"/><rect x="519" y="496" width="1" height="3" fill="#a87084"/><rect x="519" y="531" width="1" height="1" fill="#a87084"/><rect x="519" y="565" width="1" height="1" fill="#a87084"/><rect x="519" y="598" width="1" height="1" fill="#a87084"/><rect x="519" y="632" width="1" height="1" fill="#a87084"/><rect x="519" y="666" width="1" height="1" fill="#a87084"/><rect x="519" y="700" width="1" height="1" fill="#a87084"/><rect x="519" y="733" width="1" height="1" fill="#a87084"/><rect x="519" y="767" width="1" height="1" fill="#a87084"/><rect x="519" y="801" width="1" height="1" fill="#a87084"/><rect x="519" y="834" width="1" height="3" fill="#a87084"/><rect x="519" y="902" width="1" height="1" fill="#6b6f78"/><rect x="519" y="936" width="1" height="1" fill="#6b6f78"/><rect x="553" y="159" width="1" height="3" fill="#6b6f78"/><rect x="553" y="227" width="1" height="1" fill="#a87084"/><rect x="553" y="261" width="1" height="1" fill="#a87084"/><rect x="553" y="295" width="1" height="1" fill="#a87084"/><rect x="553" y="328" width="1" height="1" fill="#a87084"/><rect x="553" y="362" width="1" height="1" fill="#a87084"/><rect x="553" y="396" width="1" height="1" fill="#a87084"/><rect x="553" y="430" width="1" height="1" fill="#a87084"/><rect x="553" y="463" width="1" height="1" fill="#a87084"/><rect x="553" y="496" width="1" height="3" fill="#a87084"/><rect x="553" y="531" width="1" height="1" fill="#a87084"/><rect x="553" y="565" width="1" height="1" fill="#a87084"/><rect x="553" y="598" width="1" height="1" fill="#a87084"/><rect x="553" y="632" width="1" height="1" fill="#a87084"/><rect x="553" y="666" width="1" height="1" fill="#a87084"/><rect x="553" y="700" width="1" height="1" fill="#a87084"/><rect x="553" y="733" width="1" height="1" fill="#a87084"/><rect x="553" y="767" width="1" height="1" fill="#a87084"/><rect x="553" y="801" width="1" height="1" fill="#a87084"/><rect x="553" y="834" width="1" height="3" fill="#a87084"/><rect x="553" y="902" width="1" height="1" fill="#6b6f78"/><rect x="553" y="936" width="1" height="1" fill="#6b6f78"/><rect x="587" y="159" width="1" height="3" fill="#6b6f78"/><rect x="587" y="227" width="1" height="1" fill="#a87084"/><rect x="587" y="261" width="1" height="1" fill="#a87084"/><rect x="587" y="295" width="1" height="1" fill="#a87084"/><rect x="587" y="328" width="1" height="1" fill="#a87084"/><rect x="587" y="362" width="1" height="1" fill="#a87084"/><rect x="587" y="396" width="1" height="1" fill="#a87084"/><rect x="587" y="430" width="1" height="1" fill="#a87084"/><rect x="587" y="463" width="1" height="1" fill="#a87084"/><rect x="587" y="496" width="1" height="3" fill="#a87084"/><rect x="587" y="531" width="1" height="1" fill="#a87084"/><rect x="587" y="565" width="1" height="1" fill="#a87084"/><rect x="587" y="598" width="1" height="1" fill="#a87084"/><rect x="587" y="632" width="1" height="1" fill="#a87084"/><rect x="587" y="666" width="1" height="1" fill="#a87084"/><rect x="587" y="700" width="1" height="1" fill="#a87084"/><rect x="587" y="733" width="1" height="1" fill="#a87084"/><rect x="587" y="767" width="1" height="1" fill="#a87084"/><rect x="587" y="801" width="1" height="1" fill="#a87084"/><rect x="587" y="834" width="1" height="3" fill="#a87084"/><rect x="587" y="902" width="1" height="1" fill="#6b6f78"/><rect x="587" y="936" width="1" height="1" fill="#6b6f78"/><rect x="620" y="159" width="1" height="3" fill="#6b6f78"/><rect x="620" y="227" width="1" height="1" fill="#a87084"/><rect x="620" y="261" width="1" height="1" fill="#a87084"/><rect x="620" y="295" width="1" height="1" fill="#a87084"/><rect x="620" y="328" width="1" height="1" fill="#a87084"/><rect x="620" y="362" width="1" height="1" fill="#a87084"/><rect x="620" y="396" width="1" height="1" fill="#a87084"/><rect x="620" y="430" width="1" height="1" fill="#a87084"/><rect x="620" y="463" width="1" height="1" fill="#a87084"/><rect x="620" y="496" width="1" height="3" fill="#a87084"/><rect x="620" y="531" width="1" height="1" fill="#a87084"/><rect x="620" y="565" width="1" height="1" fill="#a87084"/><rect x="620" y="598" width="1" height="1" fill="#a87084"/><rect x="620" y="632" width="1" height="1" fill="#a87084"/><rect x="620" y="666" width="1" height="1" fill="#a87084"/><rect x="620" y="700" width="1" height="1" fill="#a87084"/><rect x="620" y="733" width="1" height="1" fill="#a87084"/><rect x="620" y="767" width="1" height="1" fill="#a87084"/><rect x="620" y="801" width="1" height="1" fill="#a87084"/><rect x="620" y="834" width="1" height="3" fill="#a87084"/><rect x="620" y="902" width="1" height="1" fill="#6b6f78"/><rect x="620" y="936" width="1" height="1" fill="#6b6f78"/><rect x="654" y="159" width="1" height="3" fill="#6b6f78"/><rect x="654" y="227" width="1" height="1" fill="#a87084"/><rect x="654" y="261" width="1" height="1" fill="#a87084"/><rect x="654" y="295" width="1" height="1" fill="#a87084"/><rect x="654" y="328" width="1" height="1" fill="#a87084"/><rect x="654" y="362" width="1" height="1" fill="#a87084"/><rect x="654" y="396" width="1" height="1" fill="#a87084"/><rect x="654" y="430" width="1" height="1" fill="#a87084"/><rect x="654" y="463" width="1" height="1" fill="#a87084"/><rect x="654" y="496" width="1" height="3" fill="#a87084"/><rect x="654" y="531" width="1" height="1" fill="#a87084"/><rect x="654" y="565" width="1" height="1" fill="#a87084"/><rect x="654" y="598" width="1" height="1" fill="#a87084"/><rect x="654" y="632" width="1" height="1" fill="#a87084"/><rect x="654" y="666" width="1" height="1" fill="#a87084"/><rect x="654" y="700" width="1" height="1" fill="#a87084"/><rect x="654" y="733" width="1" height="1" fill="#a87084"/><rect x="654" y="767" width="1" height="1" fill="#a87084"/><rect x="654" y="801" width="1" height="1" fill="#a87084"/><rect x="654" y="834" width="1" height="3" fill="#a87084"/><rect x="654" y="902" width="1" height="1" fill="#6b6f78"/><rect x="654" y="936" width="1" height="1" fill="#6b6f78"/><rect x="688" y="159" width="1" height="3" fill="#6b6f78"/><rect x="688" y="227" width="1" height="1" fill="#a87084"/><rect x="688" y="261" width="1" height="1" fill="#a87084"/><rect x="688" y="295" width="1" height="1" fill="#a87084"/><rect x="688" y="328" width="1" height="1" fill="#a87084"/><rect x="688" y="362" width="1" height="1" fill="#a87084"/><rect x="688" y="396" width="1" height="1" fill="#a87084"/><rect x="688" y="430" width="1" height="1" fill="#a87084"/><rect x="688" y="463" width="1" height="1" fill="#a87084"/><rect x="688" y="496" width="1" height="3" fill="#a87084"/><rect x="688" y="531" width="1" height="1" fill="#a87084"/><rect x="688" y="565" width="1" height="1" fill="#a87084"/><rect x="688" y="598" width="1" height="1" fill="#a87084"/><rect x="688" y="632" width="1" height="1" fill="#a87084"/><rect x="688" y="666" width="1" height="1" fill="#a87084"/><rect x="688" y="700" width="1" height="1" fill="#a87084"/><rect x="688" y="733" width="1" height="1" fill="#a87084"/><rect x="688" y="767" width="1" height="1" fill="#a87084"/><rect x="688" y="801" width="1" height="1" fill="#a87084"/><rect x="688" y="834" width="1" height="3" fill="#a87084"/><rect x="688" y="902" width="1" height="1" fill="#6b6f78"/><rect x="688" y="936" width="1" height="1" fill="#6b6f78"/><rect x="722" y="159" width="1" height="3" fill="#6b6f78"/><rect x="722" y="227" width="1" height="1" fill="#a87084"/><rect x="722" y="261" width="1" height="1" fill="#a87084"/><rect x="722" y="295" width="1" height="1" fill="#a87084"/><rect x="722" y="328" width="1" height="1" fill="#a87084"/><rect x="722" y="362" width="1" height="1" fill="#a87084"/><rect x="722" y="396" width="1" height="1" fill="#a87084"/><rect x="722" y="430" width="1" height="1" fill="#a87084"/><rect x="722" y="463" width="1" height="1" fill="#a87084"/><rect x="722" y="496" width="1" height="3" fill="#a87084"/><rect x="722" y="531" width="1" height="1" fill="#a87084"/><rect x="722" y="565" width="1" height="1" fill="#a87084"/><rect x="722" y="598" width="1" height="1" fill="#a87084"/><rect x="722" y="632" width="1" height="1" fill="#a87084"/><rect x="722" y="666" width="1" height="1" fill="#a87084"/><rect x="722" y="700" width="1" height="1" fill="#a87084"/><rect x="722" y="733" width="1" height="1" fill="#a87084"/><rect x="722" y="767" width="1" height="1" fill="#a87084"/><rect x="722" y="801" width="1" height="1" fill="#a87084"/><rect x="722" y="834" width="1" height="3" fill="#a87084"/><rect x="722" y="902" width="1" height="1" fill="#6b6f78"/><rect x="722" y="936" width="1" height="1" fill="#6b6f78"/><rect x="756" y="159" width="1" height="3" fill="#6b6f78"/><rect x="756" y="227" width="1" height="1" fill="#a87084"/><rect x="756" y="261" width="1" height="1" fill="#a87084"/><rect x="756" y="295" width="1" height="1" fill="#a87084"/><rect x="756" y="328" width="1" height="1" fill="#a87084"/><rect x="756" y="362" width="1" height="1" fill="#a87084"/><rect x="756" y="396" width="1" height="1" fill="#a87084"/><rect x="756" y="430" width="1" height="1" fill="#a87084"/><rect x="756" y="463" width="1" height="1" fill="#a87084"/><rect x="756" y="496" width="1" height="3" fill="#a87084"/><rect x="756" y="531" width="1" height="1" fill="#a87084"/><rect x="756" y="565" width="1" height="1" fill="#a87084"/><rect x="756" y="598" width="1" height="1" fill="#a87084"/><rect x="756" y="632" width="1" height="1" fill="#a87084"/><rect x="756" y="666" width="1" height="1" fill="#a87084"/><rect x="756" y="700" width="1" height="1" fill="#a87084"/><rect x="756" y="733" width="1" height="1" fill="#a87084"/><rect x="756" y="767" width="1" height="1" fill="#a87084"/><rect x="756" y="801" width="1" height="1" fill="#a87084"/><rect x="756" y="834" width="1" height="3" fill="#a87084"/><rect x="756" y="902" width="1" height="1" fill="#6b6f78"/><rect x="756" y="936" width="1" height="1" fill="#6b6f78"/><rect x="789" y="159" width="1" height="3" fill="#6b6f78"/><rect x="789" y="227" width="1" height="1" fill="#a87084"/><rect x="789" y="261" width="1" height="1" fill="#a87084"/><rect x="789" y="295" width="1" height="1" fill="#a87084"/><rect x="789" y="328" width="1" height="1" fill="#a87084"/><rect x="789" y="362" width="1" height="1" fill="#a87084"/><rect x="789" y="396" width="1" height="1" fill="#a87084"/><rect x="789" y="430" width="1" height="1" fill="#a87084"/><rect x="789" y="463" width="1" height="1" fill="#a87084"/><rect x="789" y="496" width="1" height="3" fill="#a87084"/><rect x="789" y="531" width="1" height="1" fill="#a87084"/><rect x="789" y="565" width="1" height="1" fill="#a87084"/><rect x="789" y="598" width="1" height="1" fill="#a87084"/><rect x="789" y="632" width="1" height="1" fill="#a87084"/><rect x="789" y="666" width="1" height="1" fill="#a87084"/><rect x="789" y="700" width="1" height="1" fill="#a87084"/><rect x="789" y="733" width="1" height="1" fill="#a87084"/><rect x="789" y="767" width="1" height="1" fill="#a87084"/><rect x="789" y="801" width="1" height="1" fill="#a87084"/><rect x="789" y="834" width="1" height="3" fill="#a87084"/><rect x="789" y="902" width="1" height="1" fill="#6b6f78"/><rect x="789" y="936" width="1" height="1" fill="#6b6f78"/><rect x="822" y="159" width="3" height="3" fill="#a4a6aa"/><rect x="822" y="227" width="3" height="1" fill="#a87084"/><rect x="822" y="261" width="3" height="1" fill="#a87084"/><rect x="822" y="295" width="3" height="1" fill="#a87084"/><rect x="822" y="328" width="3" height="1" fill="#a87084"/><rect x="822" y="362" width="3" height="1" fill="#a87084"/><rect x="822" y="396" width="3" height="1" fill="#a87084"/><rect x="822" y="430" width="3" height="1" fill="#a87084"/><rect x="822" y="463" width="3" height="1" fill="#a87084"/><rect x="822" y="496" width="3" height="3" fill="#a4a6aa"/><rect x="822" y="531" width="3" height="1" fill="#a87084"/><rect x="822" y="565" width="3" height="1" fill="#a87084"/><rect x="822" y="598" width="3" height="1" fill="#a87084"/><rect x="822" y="632" width="3" height="1" fill="#a87084"/><rect x="822" y="666" width="3" height="1" fill="#a87084"/><rect x="822" y="700" width="3" height="1" fill="#a87084"/><rect x="822" y="733" width="3" height="1" fill="#a87084"/><rect x="822" y="767" width="3" height="1" fill="#a87084"/><rect x="822" y="801" width="3" height="1" fill="#a87084"/><rect x="822" y="834" width="3" height="3" fill="#a4a6aa"/><rect x="822" y="902" width="3" height="1" fill="#6b6f78"/><rect x="822" y="936" width="3" height="1" fill="#6b6f78"/><rect x="857" y="159" width="1" height="3" fill="#6b6f78"/><rect x="857" y="227" width="1" height="1" fill="#a87084"/><rect x="857" y="261" width="1" height="1" fill="#a87084"/><rect x="857" y="295" width="1" height="1" fill="#a87084"/><rect x="857" y="328" width="1" height="1" fill="#a87084"/><rect x="857" y="362" width="1" height="1" fill="#a87084"/><rect x="857" y="396" width="1" height="1" fill="#a87084"/><rect x="857" y="430" width="1" height="1" fill="#a87084"/><rect x="857" y="463" width="1" height="1" fill="#a87084"/><rect x="857" y="496" width="1" height="3" fill="#a87084"/><rect x="857" y="531" width="1" height="1" fill="#a87084"/><rect x="857" y="565" width="1" height="1" fill="#a87084"/><rect x="857" y="598" width="1" height="1" fill="#a87084"/><rect x="857" y="632" width="1" height="1" fill="#a87084"/><rect x="857" y="666" width="1" height="1" fill="#a87084"/><rect x="857" y="700" width="1" height="1" fill="#a87084"/><rect x="857" y="733" width="1" height="1" fill="#a87084"/><rect x="857" y="767" width="1" height="1" fill="#a87084"/><rect x="857" y="801" width="1" height="1" fill="#a87084"/><rect x="857" y="834" width="1" height="3" fill="#a87084"/><rect x="857" y="902" width="1" height="1" fill="#6b6f78"/><rect x="857" y="936" width="1" height="1" fill="#6b6f78"/><rect x="890" y="159" width="1" height="3" fill="#6b6f78"/><rect x="890" y="227" width="1" height="1" fill="#a87084"/><rect x="890" y="261" width="1" height="1" fill="#a87084"/><rect x="890" y="295" width="1" height="1" fill="#a87084"/><rect x="890" y="328" width="1" height="1" fill="#a87084"/><rect x="890" y="362" width="1" height="1" fill="#a87084"/><rect x="890" y="396" width="1" height="1" fill="#a87084"/><rect x="890" y="430" width="1" height="1" fill="#a87084"/><rect x="890" y="463" width="1" height="1" fill="#a87084"/><rect x="890" y="496" width="1" height="3" fill="#a87084"/><rect x="890" y="531" width="1" height="1" fill="#a87084"/><rect x="890" y="565" width="1" height="1" fill="#a87084"/><rect x="890" y="598" width="1" height="1" fill="#a87084"/><rect x="890" y="632" width="1" height="1" fill="#a87084"/><rect x="890" y="666" width="1" height="1" fill="#a87084"/><rect x="890" y="700" width="1" height="1" fill="#a87084"/><rect x="890" y="733" width="1" height="1" fill="#a87084"/><rect x="890" y="767" width="1" height="1" fill="#a87084"/><rect x="890" y="801" width="1" height="1" fill="#a87084"/><rect x="890" y="834" width="1" height="3" fill="#a87084"/><rect x="890" y="902" width="1" height="1" fill="#6b6f78"/><rect x="890" y="936" width="1" height="1" fill="#6b6f78"/><rect x="924" y="159" width="1" height="3" fill="#6b6f78"/><rect x="924" y="902" width="1" height="1" fill="#6b6f78"/><rect x="924" y="936" width="1" height="1" fill="#6b6f78"/><rect x="958" y="159" width="1" height="3" fill="#6b6f78"/><rect x="958" y="193" width="1" height="1" fill="#6b6f78"/><rect x="958" y="227" width="1" height="1" fill="#6b6f78"/><rect x="958" y="261" width="1" height="1" fill="#6b6f78"/><rect x="958" y="295" width="1" height="1" fill="#6b6f78"/><rect x="958" y="328" width="1" height="1" fill="#6b6f78"/><rect x="958" y="362" width="1" height="1" fill="#6b6f78"/><rect x="958" y="396" width="1" height="1" fill="#6b6f78"/><rect x="958" y="430" width="1" height="1" fill="#6b6f78"/><rect x="958" y="463" width="1" height="1" fill="#6b6f78"/><rect x="958" y="496" width="1" height="3" fill="#6b6f78"/><rect x="958" y="531" width="1" height="1" fill="#6b6f78"/><rect x="958" y="565" width="1" height="1" fill="#6b6f78"/><rect x="958" y="598" width="1" height="1" fill="#6b6f78"/><rect x="958" y="632" width="1" height="1" fill="#6b6f78"/><rect x="958" y="666" width="1" height="1" fill="#6b6f78"/><rect x="958" y="700" width="1" height="1" fill="#6b6f78"/><rect x="958" y="733" width="1" height="1" fill="#6b6f78"/><rect x="958" y="767" width="1" height="1" fill="#6b6f78"/><rect x="958" y="801" width="1" height="1" fill="#6b6f78"/><rect x="958" y="834" width="1" height="3" fill="#6b6f78"/><rect x="958" y="868" width="1" height="1" fill="#6b6f78"/><rect x="958" y="902" width="1" height="1" fill="#6b6f78"/><rect x="958" y="936" width="1" height="1" fill="#6b6f78"/><rect x="992" y="159" width="1" height="3" fill="#6b6f78"/><rect x="992" y="193" width="1" height="1" fill="#6b6f78"/><rect x="992" y="227" width="1" height="1" fill="#6b6f78"/><rect x="992" y="261" width="1" height="1" fill="#6b6f78"/><rect x="992" y="295" width="1" height="1" fill="#6b6f78"/><rect x="992" y="328" width="1" height="1" fill="#6b6f78"/><rect x="992" y="362" width="1" height="1" fill="#6b6f78"/><rect x="992" y="396" width="1" height="1" fill="#6b6f78"/><rect x="992" y="430" width="1" height="1" fill="#6b6f78"/><rect x="992" y="463" width="1" height="1" fill="#6b6f78"/><rect x="992" y="496" width="1" height="3" fill="#6b6f78"/><rect x="992" y="531" width="1" height="1" fill="#6b6f78"/><rect x="992" y="565" width="1" height="1" fill="#6b6f78"/><rect x="992" y="598" width="1" height="1" fill="#6b6f78"/><rect x="992" y="632" width="1" height="1" fill="#6b6f78"/><rect x="992" y="666" width="1" height="1" fill="#6b6f78"/><rect x="992" y="700" width="1" height="1" fill="#6b6f78"/><rect x="992" y="733" width="1" height="1" fill="#6b6f78"/><rect x="992" y="767" width="1" height="1" fill="#6b6f78"/><rect x="992" y="801" width="1" height="1" fill="#6b6f78"/><rect x="992" y="834" width="1" height="3" fill="#6b6f78"/><rect x="992" y="868" width="1" height="1" fill="#6b6f78"/><rect x="992" y="902" width="1" height="1" fill="#6b6f78"/><rect x="992" y="936" width="1" height="1" fill="#6b6f78"/><rect x="1026" y="159" width="1" height="3" fill="#6b6f78"/><rect x="1026" y="193" width="1" height="1" fill="#6b6f78"/><rect x="1026" y="227" width="1" height="1" fill="#6b6f78"/><rect x="1026" y="261" width="1" height="1" fill="#6b6f78"/><rect x="1026" y="295" width="1" height="1" fill="#6b6f78"/><rect x="1026" y="328" width="1" height="1" fill="#6b6f78"/><rect x="1026" y="362" width="1" height="1" fill="#6b6f78"/><rect x="1026" y="396" width="1" height="1" fill="#6b6f78"/><rect x="1026" y="430" width="1" height="1" fill="#6b6f78"/><rect x="1026" y="463" width="1" height="1" fill="#6b6f78"/><rect x="1026" y="496" width="1" height="3" fill="#6b6f78"/><rect x="1026" y="531" width="1" height="1" fill="#6b6f78"/><rect x="1026" y="565" width="1" height="1" fill="#6b6f78"/><rect x="1026" y="598" width="1" height="1" fill="#6b6f78"/><rect x="1026" y="632" width="1" height="1" fill="#6b6f78"/><rect x="1026" y="666" width="1" height="1" fill="#6b6f78"/><rect x="1026" y="700" width="1" height="1" fill="#6b6f78"/><rect x="1026" y="733" width="1" height="1" fill="#6b6f78"/><rect x="1026" y="767" width="1" height="1" fill="#6b6f78"/><rect x="1026" y="801" width="1" height="1" fill="#6b6f78"/><rect x="1026" y="834" width="1" height="3" fill="#6b6f78"/><rect x="1026" y="868" width="1" height="1" fill="#6b6f78"/><rect x="1026" y="902" width="1" height="1" fill="#6b6f78"/><rect x="1026" y="936" width="1" height="1" fill="#6b6f78"/><rect x="1059" y="159" width="1" height="3" fill="#6b6f78"/><rect x="1059" y="193" width="1" height="1" fill="#6b6f78"/><rect x="1059" y="227" width="1" height="1" fill="#6b6f78"/><rect x="1059" y="261" width="1" height="1" fill="#6b6f78"/><rect x="1059" y="295" width="1" height="1" fill="#6b6f78"/><rect x="1059" y="328" width="1" height="1" fill="#6b6f78"/><rect x="1059" y="362" width="1" height="1" fill="#6b6f78"/><rect x="1059" y="396" width="1" height="1" fill="#6b6f78"/><rect x="1059" y="430" width="1" height="1" fill="#6b6f78"/><rect x="1059" y="463" width="1" height="1" fill="#6b6f78"/><rect x="1059" y="496" width="1" height="3" fill="#6b6f78"/><rect x="1059" y="531" width="1" height="1" fill="#6b6f78"/><rect x="1059" y="565" width="1" height="1" fill="#6b6f78"/><rect x="1059" y="598" width="1" height="1" fill="#6b6f78"/><rect x="1059" y="632" width="1" height="1" fill="#6b6f78"/><rect x="1059" y="666" width="1" height="1" fill="#6b6f78"/><rect x="1059" y="700" width="1" height="1" fill="#6b6f78"/><rect x="1059" y="733" width="1" height="1" fill="#6b6f78"/><rect x="1059" y="767" width="1" height="1" fill="#6b6f78"/><rect x="1059" y="801" width="1" height="1" fill="#6b6f78"/><rect x="1059" y="834" width="1" height="3" fill="#6b6f78"/><rect x="1059" y="868" width="1" height="1" fill="#6b6f78"/><rect x="1059" y="902" width="1" height="1" fill="#6b6f78"/><rect x="1059" y="936" width="1" height="1" fill="#6b6f78"/><rect x="1093" y="159" width="1" height="3" fill="#6b6f78"/><rect x="1093" y="193" width="1" height="1" fill="#6b6f78"/><rect x="1093" y="227" width="1" height="1" fill="#6b6f78"/><rect x="1093" y="261" width="1" height="1" fill="#6b6f78"/><rect x="1093" y="295" width="1" height="1" fill="#6b6f78"/><rect x="1093" y="328" width="1" height="1" fill="#6b6f78"/><rect x="1093" y="362" width="1" height="1" fill="#6b6f78"/><rect x="1093" y="396" width="1" height="1" fill="#6b6f78"/><rect x="1093" y="430" width="1" height="1" fill="#6b6f78"/><rect x="1093" y="463" width="1" height="1" fill="#6b6f78"/><rect x="1093" y="496" width="1" height="3" fill="#6b6f78"/><rect x="1093" y="531" width="1" height="1" fill="#6b6f78"/><rect x="1093" y="565" width="1" height="1" fill="#6b6f78"/><rect x="1093" y="598" width="1" height="1" fill="#6b6f78"/><rect x="1093" y="632" width="1" height="1" fill="#6b6f78"/><rect x="1093" y="666" width="1" height="1" fill="#6b6f78"/><rect x="1093" y="700" width="1" height="1" fill="#6b6f78"/><rect x="1093" y="733" width="1" height="1" fill="#6b6f78"/><rect x="1093" y="767" width="1" height="1" fill="#6b6f78"/><rect x="1093" y="801" width="1" height="1" fill="#6b6f78"/><rect x="1093" y="834" width="1" height="3" fill="#6b6f78"/><rect x="1093" y="868" width="1" height="1" fill="#6b6f78"/><rect x="1093" y="902" width="1" height="1" fill="#6b6f78"/><rect x="1093" y="936" width="1" height="1" fill="#6b6f78"/><rect x="1127" y="159" width="1" height="3" fill="#6b6f78"/><rect x="1127" y="193" width="1" height="1" fill="#6b6f78"/><rect x="1127" y="227" width="1" height="1" fill="#6b6f78"/><rect x="1127" y="261" width="1" height="1" fill="#6b6f78"/><rect x="1127" y="295" width="1" height="1" fill="#6b6f78"/><rect x="1127" y="328" width="1" height="1" fill="#6b6f78"/><rect x="1127" y="362" width="1" height="1" fill="#6b6f78"/><rect x="1127" y="396" width="1" height="1" fill="#6b6f78"/><rect x="1127" y="430" width="1" height="1" fill="#6b6f78"/><rect x="1127" y="463" width="1" height="1" fill="#6b6f78"/><rect x="1127" y="496" width="1" height="3" fill="#6b6f78"/><rect x="1127" y="531" width="1" height="1" fill="#6b6f78"/><rect x="1127" y="565" width="1" height="1" fill="#6b6f78"/><rect x="1127" y="598" width="1" height="1" fill="#6b6f78"/><rect x="1127" y="632" width="1" height="1" fill="#6b6f78"/><rect x="1127" y="666" width="1" height="1" fill="#6b6f78"/><rect x="1127" y="700" width="1" height="1" fill="#6b6f78"/><rect x="1127" y="733" width="1" height="1" fill="#6b6f78"/><rect x="1127" y="767" width="1" height="1" fill="#6b6f78"/><rect x="1127" y="801" width="1" height="1" fill="#6b6f78"/><rect x="1127" y="834" width="1" height="3" fill="#6b6f78"/><rect x="1127" y="868" width="1" height="1" fill="#6b6f78"/><rect x="1127" y="902" width="1" height="1" fill="#6b6f78"/><rect x="1127" y="936" width="1" height="1" fill="#6b6f78"/><rect x="1159" y="159" width="3" height="3" fill="#a4a6aa"/><rect x="1159" y="193" width="3" height="1" fill="#6b6f78"/><rect x="1159" y="227" width="3" height="1" fill="#6b6f78"/><rect x="1159" y="261" width="3" height="1" fill="#6b6f78"/><rect x="1159" y="295" width="3" height="1" fill="#6b6f78"/><rect x="1159" y="328" width="3" height="1" fill="#6b6f78"/><rect x="1159" y="362" width="3" height="1" fill="#6b6f78"/><rect x="1159" y="396" width="3" height="1" fill="#6b6f78"/><rect x="1159" y="430" width="3" height="1" fill="#6b6f78"/><rect x="1159" y="463" width="3" height="1" fill="#6b6f78"/><rect x="1159" y="496" width="3" height="3" fill="#a4a6aa"/><rect x="1159" y="531" width="3" height="1" fill="#6b6f78"/><rect x="1159" y="565" width="3" height="1" fill="#6b6f78"/><rect x="1159" y="598" width="3" height="1" fill="#6b6f78"/><rect x="1159" y="632" width="3" height="1" fill="#6b6f78"/><rect x="1159" y="666" width="3" height="1" fill="#6b6f78"/><rect x="1159" y="700" width="3" height="1" fill="#6b6f78"/><rect x="1159" y="733" width="3" height="1" fill="#6b6f78"/><rect x="1159" y="767" width="3" height="1" fill="#6b6f78"/><rect x="1159" y="801" width="3" height="1" fill="#6b6f78"/><rect x="1159" y="834" width="3" height="3" fill="#a4a6aa"/><rect x="1159" y="868" width="3" height="1" fill="#6b6f78"/><rect x="1159" y="902" width="3" height="1" fill="#6b6f78"/><rect x="1159" y="936" width="3" height="1" fill="#6b6f78"/><rect x="1194" y="159" width="1" height="3" fill="#6b6f78"/><rect x="1194" y="193" width="1" height="1" fill="#6b6f78"/><rect x="1194" y="227" width="1" height="1" fill="#6b6f78"/><rect x="1194" y="261" width="1" height="1" fill="#6b6f78"/><rect x="1194" y="295" width="1" height="1" fill="#6b6f78"/><rect x="1194" y="328" width="1" height="1" fill="#6b6f78"/><rect x="1194" y="362" width="1" height="1" fill="#6b6f78"/><rect x="1194" y="396" width="1" height="1" fill="#6b6f78"/><rect x="1194" y="430" width="1" height="1" fill="#6b6f78"/><rect x="1194" y="463" width="1" height="1" fill="#6b6f78"/><rect x="1194" y="496" width="1" height="3" fill="#6b6f78"/><rect x="1194" y="531" width="1" height="1" fill="#6b6f78"/><rect x="1194" y="565" width="1" height="1" fill="#6b6f78"/><rect x="1194" y="598" width="1" height="1" fill="#6b6f78"/><rect x="1194" y="632" width="1" height="1" fill="#6b6f78"/><rect x="1194" y="666" width="1" height="1" fill="#6b6f78"/><rect x="1194" y="700" width="1" height="1" fill="#6b6f78"/><rect x="1194" y="733" width="1" height="1" fill="#6b6f78"/><rect x="1194" y="767" width="1" height="1" fill="#6b6f78"/><rect x="1194" y="801" width="1" height="1" fill="#6b6f78"/><rect x="1194" y="834" width="1" height="3" fill="#6b6f78"/><rect x="1194" y="868" width="1" height="1" fill="#6b6f78"/><rect x="1194" y="902" width="1" height="1" fill="#6b6f78"/><rect x="1194" y="936" width="1" height="1" fill="#6b6f78"/><rect x="1228" y="159" width="1" height="3" fill="#6b6f78"/><rect x="1228" y="193" width="1" height="1" fill="#6b6f78"/><rect x="1228" y="227" width="1" height="1" fill="#6b6f78"/><rect x="1228" y="261" width="1" height="1" fill="#6b6f78"/><rect x="1228" y="295" width="1" height="1" fill="#6b6f78"/><rect x="1228" y="328" width="1" height="1" fill="#6b6f78"/><rect x="1228" y="362" width="1" height="1" fill="#6b6f78"/><rect x="1228" y="396" width="1" height="1" fill="#6b6f78"/><rect x="1228" y="430" width="1" height="1" fill="#6b6f78"/><rect x="1228" y="463" width="1" height="1" fill="#6b6f78"/><rect x="1228" y="496" width="1" height="3" fill="#6b6f78"/><rect x="1228" y="531" width="1" height="1" fill="#6b6f78"/><rect x="1228" y="565" width="1" height="1" fill="#6b6f78"/><rect x="1228" y="598" width="1" height="1" fill="#6b6f78"/><rect x="1228" y="632" width="1" height="1" fill="#6b6f78"/><rect x="1228" y="666" width="1" height="1" fill="#6b6f78"/><rect x="1228" y="700" width="1" height="1" fill="#6b6f78"/><rect x="1228" y="733" width="1" height="1" fill="#6b6f78"/><rect x="1228" y="767" width="1" height="1" fill="#6b6f78"/><rect x="1228" y="801" width="1" height="1" fill="#6b6f78"/><rect x="1228" y="834" width="1" height="3" fill="#6b6f78"/><rect x="1228" y="868" width="1" height="1" fill="#6b6f78"/><rect x="1228" y="902" width="1" height="1" fill="#6b6f78"/><rect x="1228" y="936" width="1" height="1" fill="#6b6f78"/><rect x="1262" y="159" width="1" height="3" fill="#6b6f78"/><rect x="1262" y="193" width="1" height="1" fill="#6b6f78"/><rect x="1262" y="227" width="1" height="1" fill="#6b6f78"/><rect x="1262" y="261" width="1" height="1" fill="#6b6f78"/><rect x="1262" y="295" width="1" height="1" fill="#6b6f78"/><rect x="1262" y="328" width="1" height="1" fill="#6b6f78"/><rect x="1262" y="362" width="1" height="1" fill="#6b6f78"/><rect x="1262" y="396" width="1" height="1" fill="#6b6f78"/><rect x="1262" y="430" width="1" height="1" fill="#6b6f78"/><rect x="1262" y="463" width="1" height="1" fill="#6b6f78"/><rect x="1262" y="496" width="1" height="3" fill="#6b6f78"/><rect x="1262" y="531" width="1" height="1" fill="#6b6f78"/><rect x="1262" y="565" width="1" height="1" fill="#6b6f78"/><rect x="1262" y="598" width="1" height="1" fill="#6b6f78"/><rect x="1262" y="632" width="1" height="1" fill="#6b6f78"/><rect x="1262" y="666" width="1" height="1" fill="#6b6f78"/><rect x="1262" y="700" width="1" height="1" fill="#6b6f78"/><rect x="1262" y="733" width="1" height="1" fill="#6b6f78"/><rect x="1262" y="767" width="1" height="1" fill="#6b6f78"/><rect x="1262" y="801" width="1" height="1" fill="#6b6f78"/><rect x="1262" y="834" width="1" height="3" fill="#6b6f78"/><rect x="1262" y="868" width="1" height="1" fill="#6b6f78"/><rect x="1262" y="902" width="1" height="1" fill="#6b6f78"/><rect x="1262" y="936" width="1" height="1" fill="#6b6f78"/><polyline points="594,362 612,383 846,383 872,376 892,395 892,465 866,488 846,488" fill="none" stroke="#6e2636" stroke-width="9" stroke-linejoin="round" stroke-linecap="round" /><polyline points="594,362 612,383 846,383 872,376 892,395 892,465 866,488 846,488" fill="none" stroke="#b06a84" stroke-width="1" stroke-linejoin="round" stroke-linecap="round" /><polyline points="541.5,370 581,408 759,408 776,425" fill="none" stroke="#6e2636" stroke-width="12" stroke-linejoin="round" stroke-linecap="round" /><polyline points="541.5,370 581,408 759,408 776,425" fill="none" stroke="#9c5570" stroke-width="7" stroke-linejoin="round" stroke-linecap="round" /><polyline points="603.4,688 651,735 651,824 644,829 638,829 603,798" fill="none" stroke="#6e2636" stroke-width="12" stroke-linejoin="round" stroke-linecap="round" /><polyline points="603.4,688 651,735 651,824 644,829 638,829 603,798" fill="none" stroke="#9c5570" stroke-width="7" stroke-linejoin="round" stroke-linecap="round" /><polyline points="627.5,570 651,594 651,735" fill="none" stroke="#6e2636" stroke-width="12" stroke-linejoin="round" stroke-linecap="round" /><polyline points="627.5,570 651,594 651,735" fill="none" stroke="#9c5570" stroke-width="7" stroke-linejoin="round" stroke-linecap="round" /><polyline points="651,731 666.7,716 759,716 779,735" fill="none" stroke="#6e2636" stroke-width="12" stroke-linejoin="round" stroke-linecap="round" /><polyline points="651,731 666.7,716 759,716 779,735" fill="none" stroke="#9c5570" stroke-width="7" stroke-linejoin="round" stroke-linecap="round" /><polyline points="731.4,688 759,716" fill="none" stroke="#6e2636" stroke-width="12" stroke-linejoin="round" stroke-linecap="round" /><polyline points="731.4,688 759,716" fill="none" stroke="#9c5570" stroke-width="7" stroke-linejoin="round" stroke-linecap="round" /><polyline points="779,735 779,816 767,828 760,828 732,800" fill="none" stroke="#6e2636" stroke-width="12" stroke-linejoin="round" stroke-linecap="round" /><polyline points="779,735 779,816 767,828 760,828 732,800" fill="none" stroke="#9c5570" stroke-width="7" stroke-linejoin="round" stroke-linecap="round" /><polyline points="779,735 801,717 899,717 912,731 912,816 900,828 890,828 860,798" fill="none" stroke="#6e2636" stroke-width="12" stroke-linejoin="round" stroke-linecap="round" /><polyline points="779,735 801,717 899,717 912,731 912,816 900,828 890,828 860,798" fill="none" stroke="#9c5570" stroke-width="7" stroke-linejoin="round" stroke-linecap="round" /><polyline points="859.5,688 888,716" fill="none" stroke="#6e2636" stroke-width="12" stroke-linejoin="round" stroke-linecap="round" /><polyline points="859.5,688 888,716" fill="none" stroke="#9c5570" stroke-width="7" stroke-linejoin="round" stroke-linecap="round" /><polyline points="702,570 765,633" fill="none" stroke="#6e2636" stroke-width="12" stroke-linejoin="round" stroke-linecap="round" /><polyline points="702,570 765,633" fill="none" stroke="#9c5570" stroke-width="7" stroke-linejoin="round" stroke-linecap="round" /><polyline points="553,430.5 527,430.5 476,383 476,322 499,299 739,299 763.2,324.7 819.5,324.7" fill="none" stroke="#3e6aa8" stroke-width="16.5" stroke-linejoin="round" stroke-linecap="round" /><polyline points="819.5,324.7 836.7,341 836.7,376 825,387.6 730,387.6 702,411 702,430.5" fill="none" stroke="#3e6aa8" stroke-width="11.7" stroke-linejoin="round" stroke-linecap="round" /><polyline points="653.9,393 681.3,393 702,411.3" fill="none" stroke="#3e6aa8" stroke-width="11.7" stroke-linejoin="round" stroke-linecap="round" /><polyline points="508.7,362 541,392.9 617,392.9" fill="none" stroke="#3e6aa8" stroke-width="11.7" stroke-linejoin="round" stroke-linecap="round" /><polyline points="508.7,324.7 508.7,362" fill="none" stroke="#3e6aa8" stroke-width="11.7" stroke-linejoin="round" stroke-linecap="round" /><polyline points="508.7,324.7 537,324.7" fill="none" stroke="#3e6aa8" stroke-width="10.5" stroke-linejoin="round" stroke-linecap="round" /><polyline points="594,324.7 610.5,343 637,343 637,420 627.5,430.5" fill="none" stroke="#3e6aa8" stroke-width="11.7" stroke-linejoin="round" stroke-linecap="round" /><polyline points="637,343 649.6,324.7" fill="none" stroke="#3e6aa8" stroke-width="11.7" stroke-linejoin="round" stroke-linecap="round" /><polyline points="649.6,324.7 668,343 716.8,343 734.5,362 819.5,362" fill="none" stroke="#3e6aa8" stroke-width="11.7" stroke-linejoin="round" stroke-linecap="round" /><polyline points="553,430.5 553,475.7" fill="none" stroke="#3e6aa8" stroke-width="16.5" stroke-linejoin="round" stroke-linecap="round" /><polyline points="627.5,430.5 627.5,475.7" fill="none" stroke="#3e6aa8" stroke-width="10.3" stroke-linejoin="round" stroke-linecap="round" /><polyline points="702,430.5 702,475.7" fill="none" stroke="#3e6aa8" stroke-width="11.8" stroke-linejoin="round" stroke-linecap="round" /><polyline points="775.6,430.5 775.6,475.7" fill="none" stroke="#3e6aa8" stroke-width="16.5" stroke-linejoin="round" stroke-linecap="round" /><polyline points="553,524.6 553,569.8" fill="none" stroke="#3e6aa8" stroke-width="16.5" stroke-linejoin="round" stroke-linecap="round" /><polyline points="627.5,524.6 627.5,569.8" fill="none" stroke="#3e6aa8" stroke-width="10.3" stroke-linejoin="round" stroke-linecap="round" /><polyline points="702,524.6 702,569.8" fill="none" stroke="#3e6aa8" stroke-width="11.8" stroke-linejoin="round" stroke-linecap="round" /><polyline points="775.6,524.6 775.6,569.8" fill="none" stroke="#3e6aa8" stroke-width="16.5" stroke-linejoin="round" stroke-linecap="round" /><polyline points="775.6,569.8 809.7,569.8 833.5,546.8" fill="none" stroke="#3e6aa8" stroke-width="12.5" stroke-linejoin="round" stroke-linecap="round" /><polyline points="553,569.8 553,604.6 536.4,623.7 536.4,760.8 573.5,760.8" fill="none" stroke="#3e6aa8" stroke-width="16.5" stroke-linejoin="round" stroke-linecap="round" /><polyline points="536.4,656.5 552.8,650.8 575.3,650.8" fill="none" stroke="#3e6aa8" stroke-width="12.5" stroke-linejoin="round" stroke-linecap="round" /><polyline points="471.6,687.8 513,687.8 536.4,665" fill="none" stroke="#3e6aa8" stroke-width="12.5" stroke-linejoin="round" stroke-linecap="round" /><polyline points="471.1,800.5 498.9,800.5 536.4,763" fill="none" stroke="#3e6aa8" stroke-width="12.5" stroke-linejoin="round" stroke-linecap="round" /><polyline points="575.3,650.8 590.4,635.6 688,635.6 703.3,650.8" fill="none" stroke="#3e6aa8" stroke-width="16.5" stroke-linejoin="round" stroke-linecap="round" /><polyline points="703.3,650.8 716,635.6 815.8,635.6 831.5,650.8" fill="none" stroke="#3e6aa8" stroke-width="16.5" stroke-linejoin="round" stroke-linecap="round" /><polyline points="573.5,760.8 590,745 688,745 703.3,762.4" fill="none" stroke="#3e6aa8" stroke-width="16.5" stroke-linejoin="round" stroke-linecap="round" /><polyline points="703.3,762.4 716,745 817.3,745 831.5,762.4" fill="none" stroke="#3e6aa8" stroke-width="16.5" stroke-linejoin="round" stroke-linecap="round" /><polyline points="759.7,650.8 856.6,746.8 902.5,746.8" fill="none" stroke="#3e6aa8" stroke-width="11.7" stroke-linejoin="round" stroke-linecap="round" /><polyline points="888.5,650.8 902.5,663.7 902.5,748 888,762.4" fill="none" stroke="#3e6aa8" stroke-width="11.7" stroke-linejoin="round" stroke-linecap="round" /><polyline points="631.3,650.8 670.3,690 682.7,703 786.6,703 799.8,690.7 799.8,730.8" fill="none" stroke="#3e6aa8" stroke-width="11.7" stroke-linejoin="round" stroke-linecap="round" /><polyline points="670.3,693 670.3,730.8" fill="none" stroke="#3e6aa8" stroke-width="11.7" stroke-linejoin="round" stroke-linecap="round" /><polyline points="630.6,760.8 660.8,760.8" fill="none" stroke="#3e6aa8" stroke-width="11.7" stroke-linejoin="round" stroke-linecap="round" /><polyline points="759.7,762.4 789.6,760.7" fill="none" stroke="#3e6aa8" stroke-width="11.7" stroke-linejoin="round" stroke-linecap="round" /><polyline points="846,383 857,396" fill="none" stroke="#3e6aa8" stroke-width="8.0" stroke-linejoin="round" stroke-linecap="round" /><polyline points="857,470 846,488 833,505" fill="none" stroke="#3e6aa8" stroke-width="8.0" stroke-linejoin="round" stroke-linecap="round" /><polyline points="852,511 870,511" fill="none" stroke="#3e6aa8" stroke-width="8.5" stroke-linejoin="round" stroke-linecap="round" /><polyline points="553,430.5 527,430.5 476,383 476,322 499,299 739,299 763.2,324.7 819.5,324.7" fill="none" stroke="#c83434" stroke-width="8.5" stroke-linejoin="round" stroke-linecap="round" /><polyline points="819.5,324.7 836.7,341 836.7,376 825,387.6 730,387.6 702,411 702,430.5" fill="none" stroke="#c83434" stroke-width="6.2" stroke-linejoin="round" stroke-linecap="round" /><polyline points="653.9,393 681.3,393 702,411.3" fill="none" stroke="#c83434" stroke-width="6.2" stroke-linejoin="round" stroke-linecap="round" /><polyline points="508.7,362 541,392.9 617,392.9" fill="none" stroke="#c83434" stroke-width="6.2" stroke-linejoin="round" stroke-linecap="round" /><polyline points="508.7,324.7 508.7,362" fill="none" stroke="#c83434" stroke-width="6.2" stroke-linejoin="round" stroke-linecap="round" /><polyline points="508.7,324.7 537,324.7" fill="none" stroke="#c83434" stroke-width="5" stroke-linejoin="round" stroke-linecap="round" /><polyline points="594,324.7 610.5,343 637,343 637,420 627.5,430.5" fill="none" stroke="#c83434" stroke-width="6.2" stroke-linejoin="round" stroke-linecap="round" /><polyline points="637,343 649.6,324.7" fill="none" stroke="#c83434" stroke-width="6.2" stroke-linejoin="round" stroke-linecap="round" /><polyline points="649.6,324.7 668,343 716.8,343 734.5,362 819.5,362" fill="none" stroke="#c83434" stroke-width="6.2" stroke-linejoin="round" stroke-linecap="round" /><polyline points="553,430.5 553,475.7" fill="none" stroke="#c83434" stroke-width="8.5" stroke-linejoin="round" stroke-linecap="round" /><polyline points="627.5,430.5 627.5,475.7" fill="none" stroke="#c83434" stroke-width="4.8" stroke-linejoin="round" stroke-linecap="round" /><polyline points="702,430.5 702,475.7" fill="none" stroke="#c83434" stroke-width="6.3" stroke-linejoin="round" stroke-linecap="round" /><polyline points="775.6,430.5 775.6,475.7" fill="none" stroke="#c83434" stroke-width="8.5" stroke-linejoin="round" stroke-linecap="round" /><polyline points="553,524.6 553,569.8" fill="none" stroke="#c83434" stroke-width="8.5" stroke-linejoin="round" stroke-linecap="round" /><polyline points="627.5,524.6 627.5,569.8" fill="none" stroke="#c83434" stroke-width="4.8" stroke-linejoin="round" stroke-linecap="round" /><polyline points="702,524.6 702,569.8" fill="none" stroke="#c83434" stroke-width="6.3" stroke-linejoin="round" stroke-linecap="round" /><polyline points="775.6,524.6 775.6,569.8" fill="none" stroke="#c83434" stroke-width="8.5" stroke-linejoin="round" stroke-linecap="round" /><polyline points="775.6,569.8 809.7,569.8 833.5,546.8" fill="none" stroke="#c83434" stroke-width="7" stroke-linejoin="round" stroke-linecap="round" /><polyline points="553,569.8 553,604.6 536.4,623.7 536.4,760.8 573.5,760.8" fill="none" stroke="#c83434" stroke-width="8.5" stroke-linejoin="round" stroke-linecap="round" /><polyline points="536.4,656.5 552.8,650.8 575.3,650.8" fill="none" stroke="#c83434" stroke-width="7" stroke-linejoin="round" stroke-linecap="round" /><polyline points="471.6,687.8 513,687.8 536.4,665" fill="none" stroke="#c83434" stroke-width="7" stroke-linejoin="round" stroke-linecap="round" /><polyline points="471.1,800.5 498.9,800.5 536.4,763" fill="none" stroke="#c83434" stroke-width="7" stroke-linejoin="round" stroke-linecap="round" /><polyline points="575.3,650.8 590.4,635.6 688,635.6 703.3,650.8" fill="none" stroke="#c83434" stroke-width="8.5" stroke-linejoin="round" stroke-linecap="round" /><polyline points="703.3,650.8 716,635.6 815.8,635.6 831.5,650.8" fill="none" stroke="#c83434" stroke-width="8.5" stroke-linejoin="round" stroke-linecap="round" /><polyline points="573.5,760.8 590,745 688,745 703.3,762.4" fill="none" stroke="#c83434" stroke-width="8.5" stroke-linejoin="round" stroke-linecap="round" /><polyline points="703.3,762.4 716,745 817.3,745 831.5,762.4" fill="none" stroke="#c83434" stroke-width="8.5" stroke-linejoin="round" stroke-linecap="round" /><polyline points="759.7,650.8 856.6,746.8 902.5,746.8" fill="none" stroke="#c83434" stroke-width="6.2" stroke-linejoin="round" stroke-linecap="round" /><polyline points="888.5,650.8 902.5,663.7 902.5,748 888,762.4" fill="none" stroke="#c83434" stroke-width="6.2" stroke-linejoin="round" stroke-linecap="round" /><polyline points="631.3,650.8 670.3,690 682.7,703 786.6,703 799.8,690.7 799.8,730.8" fill="none" stroke="#c83434" stroke-width="6.2" stroke-linejoin="round" stroke-linecap="round" /><polyline points="670.3,693 670.3,730.8" fill="none" stroke="#c83434" stroke-width="6.2" stroke-linejoin="round" stroke-linecap="round" /><polyline points="630.6,760.8 660.8,760.8" fill="none" stroke="#c83434" stroke-width="6.2" stroke-linejoin="round" stroke-linecap="round" /><polyline points="759.7,762.4 789.6,760.7" fill="none" stroke="#c83434" stroke-width="6.2" stroke-linejoin="round" stroke-linecap="round" /><polyline points="846,383 857,396" fill="none" stroke="#c83434" stroke-width="2.5" stroke-linejoin="round" stroke-linecap="round" /><polyline points="857,470 846,488 833,505" fill="none" stroke="#c83434" stroke-width="2.5" stroke-linejoin="round" stroke-linecap="round" /><polyline points="852,511 870,511" fill="none" stroke="#c83434" stroke-width="3" stroke-linejoin="round" stroke-linecap="round" /><rect x="487.5" y="227.5" width="355.0" height="150.0" fill="none" stroke="#ff2ad4" stroke-width="1" /><path d="M489.5 318.5V230.5H839.5V318.5H489.5" fill="none" stroke="#e69468" stroke-width="1"/><text x="664" y="226" font-size="9.5" fill="#e89a6c" text-anchor="middle" font-family="Liberation Mono">J1</text><circle cx="508.9" cy="275.8" r="11.3" fill="#e03030"/><circle cx="508.9" cy="275.8" r="10.5" fill="#1fc4d2"/><circle cx="820" cy="275.8" r="11.3" fill="#e03030"/><circle cx="820" cy="275.8" r="10.5" fill="#1fc4d2"/><rect x="495.9" y="309.15" width="25.6" height="31.1" rx="3" fill="#120a14"/><rect x="497.7" y="310.95" width="22" height="27.5" rx="1.5" fill="#c83434"/><rect x="500.2" y="313.45" width="17" height="22.5" fill="none" stroke="#120a14" stroke-width="0.9" stroke-dasharray="14 3"/><circle cx="508.7" cy="324.7" r="7.6" fill="#e6bc2e"/><circle cx="508.7" cy="324.7" r="6.0" fill="#07101e"/><path d="M505.7 323.7H507.7M509.7 321.7V327.7M511.7 322.7V326.7" stroke="#8a909c" stroke-width="1"/><path d="M515.2 318.7V330.7" stroke="#f2d4dc" stroke-width="1.3" opacity="0.55" stroke-dasharray="2 1"/><ellipse cx="508.7" cy="362" rx="11.0" ry="13.75" fill="#c83434"/><ellipse cx="508.7" cy="362" rx="12.0" ry="14.75" fill="none" stroke="#120a14" stroke-width="2.2" stroke-dasharray="18.56 2.5" stroke-dashoffset="19.81"/><ellipse cx="508.7" cy="362" rx="8.8" ry="11.55" fill="none" stroke="#120a14" stroke-width="0.8" stroke-dasharray="1.3 1.3"/><circle cx="508.7" cy="362" r="7.6" fill="#e6bc2e"/><circle cx="508.7" cy="362" r="6.0" fill="#07101e"/><path d="M505.7 361H507.7M509.7 359V365M511.7 360V364" stroke="#8a909c" stroke-width="1"/><path d="M515.2 356V368" stroke="#f2d4dc" stroke-width="1.3" opacity="0.55" stroke-dasharray="2 1"/><path d="M506.2 340V348M511.2 340V348" stroke="#e69468" stroke-width="0.8"/><ellipse cx="536.93" cy="324.7" rx="11.0" ry="13.75" fill="#c83434"/><ellipse cx="536.93" cy="324.7" rx="12.0" ry="14.75" fill="none" stroke="#120a14" stroke-width="2.2" stroke-dasharray="18.56 2.5" stroke-dashoffset="19.81"/><ellipse cx="536.93" cy="324.7" rx="8.8" ry="11.55" fill="none" stroke="#120a14" stroke-width="0.8" stroke-dasharray="1.3 1.3"/><circle cx="536.93" cy="324.7" r="7.6" fill="#e6bc2e"/><circle cx="536.93" cy="324.7" r="6.0" fill="#07101e"/><path d="M533.93 323.7H535.93M537.93 321.7V327.7M539.93 322.7V326.7" stroke="#8a909c" stroke-width="1"/><path d="M543.43 318.7V330.7" stroke="#f2d4dc" stroke-width="1.3" opacity="0.55" stroke-dasharray="2 1"/><ellipse cx="536.93" cy="362" rx="11.0" ry="13.75" fill="#c83434"/><ellipse cx="536.93" cy="362" rx="12.0" ry="14.75" fill="none" stroke="#120a14" stroke-width="2.2" stroke-dasharray="18.56 2.5" stroke-dashoffset="19.81"/><ellipse cx="536.93" cy="362" rx="8.8" ry="11.55" fill="none" stroke="#120a14" stroke-width="0.8" stroke-dasharray="1.3 1.3"/><circle cx="536.93" cy="362" r="7.6" fill="#e6bc2e"/><circle cx="536.93" cy="362" r="6.0" fill="#07101e"/><path d="M533.93 361H535.93M537.93 359V365M539.93 360V364" stroke="#8a909c" stroke-width="1"/><path d="M543.43 356V368" stroke="#f2d4dc" stroke-width="1.3" opacity="0.55" stroke-dasharray="2 1"/><path d="M534.43 340V348M539.43 340V348" stroke="#e69468" stroke-width="0.8"/><ellipse cx="565.16" cy="324.7" rx="11.0" ry="13.75" fill="#c83434"/><ellipse cx="565.16" cy="324.7" rx="12.0" ry="14.75" fill="none" stroke="#120a14" stroke-width="2.2" stroke-dasharray="18.56 2.5" stroke-dashoffset="19.81"/><ellipse cx="565.16" cy="324.7" rx="8.8" ry="11.55" fill="none" stroke="#120a14" stroke-width="0.8" stroke-dasharray="1.3 1.3"/><circle cx="565.16" cy="324.7" r="7.6" fill="#e6bc2e"/><circle cx="565.16" cy="324.7" r="6.0" fill="#07101e"/><path d="M562.16 323.7H564.16M566.16 321.7V327.7M568.16 322.7V326.7" stroke="#8a909c" stroke-width="1"/><path d="M571.66 318.7V330.7" stroke="#f2d4dc" stroke-width="1.3" opacity="0.55" stroke-dasharray="2 1"/><ellipse cx="565.16" cy="362" rx="11.0" ry="13.75" fill="#c83434"/><ellipse cx="565.16" cy="362" rx="12.0" ry="14.75" fill="none" stroke="#120a14" stroke-width="2.2" stroke-dasharray="18.56 2.5" stroke-dashoffset="19.81"/><ellipse cx="565.16" cy="362" rx="8.8" ry="11.55" fill="none" stroke="#120a14" stroke-width="0.8" stroke-dasharray="1.3 1.3"/><circle cx="565.16" cy="362" r="7.6" fill="#e6bc2e"/><circle cx="565.16" cy="362" r="6.0" fill="#07101e"/><path d="M562.16 361H564.16M566.16 359V365M568.16 360V364" stroke="#8a909c" stroke-width="1"/><path d="M571.66 356V368" stroke="#f2d4dc" stroke-width="1.3" opacity="0.55" stroke-dasharray="2 1"/><path d="M562.66 340V348M567.66 340V348" stroke="#e69468" stroke-width="0.8"/><ellipse cx="593.39" cy="324.7" rx="11.0" ry="13.75" fill="#c83434"/><ellipse cx="593.39" cy="324.7" rx="12.0" ry="14.75" fill="none" stroke="#120a14" stroke-width="2.2" stroke-dasharray="18.56 2.5" stroke-dashoffset="19.81"/><ellipse cx="593.39" cy="324.7" rx="8.8" ry="11.55" fill="none" stroke="#120a14" stroke-width="0.8" stroke-dasharray="1.3 1.3"/><circle cx="593.39" cy="324.7" r="7.6" fill="#e6bc2e"/><circle cx="593.39" cy="324.7" r="6.0" fill="#07101e"/><path d="M590.39 323.7H592.39M594.39 321.7V327.7M596.39 322.7V326.7" stroke="#8a909c" stroke-width="1"/><path d="M599.89 318.7V330.7" stroke="#f2d4dc" stroke-width="1.3" opacity="0.55" stroke-dasharray="2 1"/><ellipse cx="593.39" cy="362" rx="11.0" ry="13.75" fill="#c83434"/><ellipse cx="593.39" cy="362" rx="12.0" ry="14.75" fill="none" stroke="#120a14" stroke-width="2.2" stroke-dasharray="18.56 2.5" stroke-dashoffset="19.81"/><ellipse cx="593.39" cy="362" rx="8.8" ry="11.55" fill="none" stroke="#120a14" stroke-width="0.8" stroke-dasharray="1.3 1.3"/><circle cx="593.39" cy="362" r="7.6" fill="#e6bc2e"/><circle cx="593.39" cy="362" r="6.0" fill="#07101e"/><path d="M590.39 361H592.39M594.39 359V365M596.39 360V364" stroke="#8a909c" stroke-width="1"/><path d="M599.89 356V368" stroke="#f2d4dc" stroke-width="1.3" opacity="0.55" stroke-dasharray="2 1"/><path d="M590.89 340V348M595.89 340V348" stroke="#e69468" stroke-width="0.8"/><ellipse cx="621.62" cy="324.7" rx="11.0" ry="13.75" fill="#c83434"/><ellipse cx="621.62" cy="324.7" rx="12.0" ry="14.75" fill="none" stroke="#120a14" stroke-width="2.2" stroke-dasharray="18.56 2.5" stroke-dashoffset="19.81"/><ellipse cx="621.62" cy="324.7" rx="8.8" ry="11.55" fill="none" stroke="#120a14" stroke-width="0.8" stroke-dasharray="1.3 1.3"/><circle cx="621.62" cy="324.7" r="7.6" fill="#e6bc2e"/><circle cx="621.62" cy="324.7" r="6.0" fill="#07101e"/><path d="M618.62 323.7H620.62M622.62 321.7V327.7M624.62 322.7V326.7" stroke="#8a909c" stroke-width="1"/><path d="M628.12 318.7V330.7" stroke="#f2d4dc" stroke-width="1.3" opacity="0.55" stroke-dasharray="2 1"/><ellipse cx="621.62" cy="362" rx="11.0" ry="13.75" fill="#c83434"/><ellipse cx="621.62" cy="362" rx="12.0" ry="14.75" fill="none" stroke="#120a14" stroke-width="2.2" stroke-dasharray="18.56 2.5" stroke-dashoffset="19.81"/><ellipse cx="621.62" cy="362" rx="8.8" ry="11.55" fill="none" stroke="#120a14" stroke-width="0.8" stroke-dasharray="1.3 1.3"/><circle cx="621.62" cy="362" r="7.6" fill="#e6bc2e"/><circle cx="621.62" cy="362" r="6.0" fill="#07101e"/><path d="M618.62 361H620.62M622.62 359V365M624.62 360V364" stroke="#8a909c" stroke-width="1"/><path d="M628.12 356V368" stroke="#f2d4dc" stroke-width="1.3" opacity="0.55" stroke-dasharray="2 1"/><path d="M619.12 340V348M624.12 340V348" stroke="#e69468" stroke-width="0.8"/><ellipse cx="649.85" cy="324.7" rx="11.0" ry="13.75" fill="#c83434"/><ellipse cx="649.85" cy="324.7" rx="12.0" ry="14.75" fill="none" stroke="#120a14" stroke-width="2.2" stroke-dasharray="18.56 2.5" stroke-dashoffset="19.81"/><ellipse cx="649.85" cy="324.7" rx="8.8" ry="11.55" fill="none" stroke="#120a14" stroke-width="0.8" stroke-dasharray="1.3 1.3"/><circle cx="649.85" cy="324.7" r="7.6" fill="#e6bc2e"/><circle cx="649.85" cy="324.7" r="6.0" fill="#07101e"/><path d="M646.85 323.7H648.85M650.85 321.7V327.7M652.85 322.7V326.7" stroke="#8a909c" stroke-width="1"/><path d="M656.35 318.7V330.7" stroke="#f2d4dc" stroke-width="1.3" opacity="0.55" stroke-dasharray="2 1"/><ellipse cx="649.85" cy="362" rx="11.0" ry="13.75" fill="#c83434"/><ellipse cx="649.85" cy="362" rx="12.0" ry="14.75" fill="none" stroke="#120a14" stroke-width="2.2" stroke-dasharray="18.56 2.5" stroke-dashoffset="19.81"/><ellipse cx="649.85" cy="362" rx="8.8" ry="11.55" fill="none" stroke="#120a14" stroke-width="0.8" stroke-dasharray="1.3 1.3"/><circle cx="649.85" cy="362" r="7.6" fill="#e6bc2e"/><circle cx="649.85" cy="362" r="6.0" fill="#07101e"/><path d="M646.85 361H648.85M650.85 359V365M652.85 360V364" stroke="#8a909c" stroke-width="1"/><path d="M656.35 356V368" stroke="#f2d4dc" stroke-width="1.3" opacity="0.55" stroke-dasharray="2 1"/><path d="M647.35 340V348M652.35 340V348" stroke="#e69468" stroke-width="0.8"/><ellipse cx="678.0799999999999" cy="324.7" rx="11.0" ry="13.75" fill="#c83434"/><ellipse cx="678.0799999999999" cy="324.7" rx="12.0" ry="14.75" fill="none" stroke="#120a14" stroke-width="2.2" stroke-dasharray="18.56 2.5" stroke-dashoffset="19.81"/><ellipse cx="678.0799999999999" cy="324.7" rx="8.8" ry="11.55" fill="none" stroke="#120a14" stroke-width="0.8" stroke-dasharray="1.3 1.3"/><circle cx="678.0799999999999" cy="324.7" r="7.6" fill="#e6bc2e"/><circle cx="678.0799999999999" cy="324.7" r="6.0" fill="#07101e"/><path d="M675.0799999999999 323.7H677.0799999999999M679.0799999999999 321.7V327.7M681.0799999999999 322.7V326.7" stroke="#8a909c" stroke-width="1"/><path d="M684.5799999999999 318.7V330.7" stroke="#f2d4dc" stroke-width="1.3" opacity="0.55" stroke-dasharray="2 1"/><ellipse cx="678.0799999999999" cy="362" rx="11.0" ry="13.75" fill="#c83434"/><ellipse cx="678.0799999999999" cy="362" rx="12.0" ry="14.75" fill="none" stroke="#120a14" stroke-width="2.2" stroke-dasharray="18.56 2.5" stroke-dashoffset="19.81"/><ellipse cx="678.0799999999999" cy="362" rx="8.8" ry="11.55" fill="none" stroke="#120a14" stroke-width="0.8" stroke-dasharray="1.3 1.3"/><circle cx="678.0799999999999" cy="362" r="7.6" fill="#e6bc2e"/><circle cx="678.0799999999999" cy="362" r="6.0" fill="#07101e"/><path d="M675.0799999999999 361H677.0799999999999M679.0799999999999 359V365M681.0799999999999 360V364" stroke="#8a909c" stroke-width="1"/><path d="M684.5799999999999 356V368" stroke="#f2d4dc" stroke-width="1.3" opacity="0.55" stroke-dasharray="2 1"/><path d="M675.5799999999999 340V348M680.5799999999999 340V348" stroke="#e69468" stroke-width="0.8"/><ellipse cx="706.31" cy="324.7" rx="11.0" ry="13.75" fill="#c83434"/><ellipse cx="706.31" cy="324.7" rx="12.0" ry="14.75" fill="none" stroke="#120a14" stroke-width="2.2" stroke-dasharray="18.56 2.5" stroke-dashoffset="19.81"/><ellipse cx="706.31" cy="324.7" rx="8.8" ry="11.55" fill="none" stroke="#120a14" stroke-width="0.8" stroke-dasharray="1.3 1.3"/><circle cx="706.31" cy="324.7" r="7.6" fill="#e6bc2e"/><circle cx="706.31" cy="324.7" r="6.0" fill="#07101e"/><path d="M703.31 323.7H705.31M707.31 321.7V327.7M709.31 322.7V326.7" stroke="#8a909c" stroke-width="1"/><path d="M712.81 318.7V330.7" stroke="#f2d4dc" stroke-width="1.3" opacity="0.55" stroke-dasharray="2 1"/><ellipse cx="706.31" cy="362" rx="11.0" ry="13.75" fill="#c83434"/><ellipse cx="706.31" cy="362" rx="12.0" ry="14.75" fill="none" stroke="#120a14" stroke-width="2.2" stroke-dasharray="18.56 2.5" stroke-dashoffset="19.81"/><ellipse cx="706.31" cy="362" rx="8.8" ry="11.55" fill="none" stroke="#120a14" stroke-width="0.8" stroke-dasharray="1.3 1.3"/><circle cx="706.31" cy="362" r="7.6" fill="#e6bc2e"/><circle cx="706.31" cy="362" r="6.0" fill="#07101e"/><path d="M703.31 361H705.31M707.31 359V365M709.31 360V364" stroke="#8a909c" stroke-width="1"/><path d="M712.81 356V368" stroke="#f2d4dc" stroke-width="1.3" opacity="0.55" stroke-dasharray="2 1"/><path d="M703.81 340V348M708.81 340V348" stroke="#e69468" stroke-width="0.8"/><ellipse cx="734.54" cy="324.7" rx="11.0" ry="13.75" fill="#c83434"/><ellipse cx="734.54" cy="324.7" rx="12.0" ry="14.75" fill="none" stroke="#120a14" stroke-width="2.2" stroke-dasharray="18.56 2.5" stroke-dashoffset="19.81"/><ellipse cx="734.54" cy="324.7" rx="8.8" ry="11.55" fill="none" stroke="#120a14" stroke-width="0.8" stroke-dasharray="1.3 1.3"/><circle cx="734.54" cy="324.7" r="7.6" fill="#e6bc2e"/><circle cx="734.54" cy="324.7" r="6.0" fill="#07101e"/><path d="M731.54 323.7H733.54M735.54 321.7V327.7M737.54 322.7V326.7" stroke="#8a909c" stroke-width="1"/><path d="M741.04 318.7V330.7" stroke="#f2d4dc" stroke-width="1.3" opacity="0.55" stroke-dasharray="2 1"/><ellipse cx="734.54" cy="362" rx="11.0" ry="13.75" fill="#c83434"/><ellipse cx="734.54" cy="362" rx="12.0" ry="14.75" fill="none" stroke="#120a14" stroke-width="2.2" stroke-dasharray="18.56 2.5" stroke-dashoffset="19.81"/><ellipse cx="734.54" cy="362" rx="8.8" ry="11.55" fill="none" stroke="#120a14" stroke-width="0.8" stroke-dasharray="1.3 1.3"/><circle cx="734.54" cy="362" r="7.6" fill="#e6bc2e"/><circle cx="734.54" cy="362" r="6.0" fill="#07101e"/><path d="M731.54 361H733.54M735.54 359V365M737.54 360V364" stroke="#8a909c" stroke-width="1"/><path d="M741.04 356V368" stroke="#f2d4dc" stroke-width="1.3" opacity="0.55" stroke-dasharray="2 1"/><path d="M732.04 340V348M737.04 340V348" stroke="#e69468" stroke-width="0.8"/><ellipse cx="762.77" cy="324.7" rx="11.0" ry="13.75" fill="#c83434"/><ellipse cx="762.77" cy="324.7" rx="12.0" ry="14.75" fill="none" stroke="#120a14" stroke-width="2.2" stroke-dasharray="18.56 2.5" stroke-dashoffset="19.81"/><ellipse cx="762.77" cy="324.7" rx="8.8" ry="11.55" fill="none" stroke="#120a14" stroke-width="0.8" stroke-dasharray="1.3 1.3"/><circle cx="762.77" cy="324.7" r="7.6" fill="#e6bc2e"/><circle cx="762.77" cy="324.7" r="6.0" fill="#07101e"/><path d="M759.77 323.7H761.77M763.77 321.7V327.7M765.77 322.7V326.7" stroke="#8a909c" stroke-width="1"/><path d="M769.27 318.7V330.7" stroke="#f2d4dc" stroke-width="1.3" opacity="0.55" stroke-dasharray="2 1"/><ellipse cx="762.77" cy="362" rx="11.0" ry="13.75" fill="#c83434"/><ellipse cx="762.77" cy="362" rx="12.0" ry="14.75" fill="none" stroke="#120a14" stroke-width="2.2" stroke-dasharray="18.56 2.5" stroke-dashoffset="19.81"/><ellipse cx="762.77" cy="362" rx="8.8" ry="11.55" fill="none" stroke="#120a14" stroke-width="0.8" stroke-dasharray="1.3 1.3"/><circle cx="762.77" cy="362" r="7.6" fill="#e6bc2e"/><circle cx="762.77" cy="362" r="6.0" fill="#07101e"/><path d="M759.77 361H761.77M763.77 359V365M765.77 360V364" stroke="#8a909c" stroke-width="1"/><path d="M769.27 356V368" stroke="#f2d4dc" stroke-width="1.3" opacity="0.55" stroke-dasharray="2 1"/><path d="M760.27 340V348M765.27 340V348" stroke="#e69468" stroke-width="0.8"/><ellipse cx="791.0" cy="324.7" rx="11.0" ry="13.75" fill="#c83434"/><ellipse cx="791.0" cy="324.7" rx="12.0" ry="14.75" fill="none" stroke="#120a14" stroke-width="2.2" stroke-dasharray="18.56 2.5" stroke-dashoffset="19.81"/><ellipse cx="791.0" cy="324.7" rx="8.8" ry="11.55" fill="none" stroke="#120a14" stroke-width="0.8" stroke-dasharray="1.3 1.3"/><circle cx="791.0" cy="324.7" r="7.6" fill="#e6bc2e"/><circle cx="791.0" cy="324.7" r="6.0" fill="#07101e"/><path d="M788.0 323.7H790.0M792.0 321.7V327.7M794.0 322.7V326.7" stroke="#8a909c" stroke-width="1"/><path d="M797.5 318.7V330.7" stroke="#f2d4dc" stroke-width="1.3" opacity="0.55" stroke-dasharray="2 1"/><ellipse cx="791.0" cy="362" rx="11.0" ry="13.75" fill="#c83434"/><ellipse cx="791.0" cy="362" rx="12.0" ry="14.75" fill="none" stroke="#120a14" stroke-width="2.2" stroke-dasharray="18.56 2.5" stroke-dashoffset="19.81"/><ellipse cx="791.0" cy="362" rx="8.8" ry="11.55" fill="none" stroke="#120a14" stroke-width="0.8" stroke-dasharray="1.3 1.3"/><circle cx="791.0" cy="362" r="7.6" fill="#e6bc2e"/><circle cx="791.0" cy="362" r="6.0" fill="#07101e"/><path d="M788.0 361H790.0M792.0 359V365M794.0 360V364" stroke="#8a909c" stroke-width="1"/><path d="M797.5 356V368" stroke="#f2d4dc" stroke-width="1.3" opacity="0.55" stroke-dasharray="2 1"/><path d="M788.5 340V348M793.5 340V348" stroke="#e69468" stroke-width="0.8"/><ellipse cx="819.23" cy="324.7" rx="11.0" ry="13.75" fill="#c83434"/><ellipse cx="819.23" cy="324.7" rx="12.0" ry="14.75" fill="none" stroke="#120a14" stroke-width="2.2" stroke-dasharray="18.56 2.5" stroke-dashoffset="19.81"/><ellipse cx="819.23" cy="324.7" rx="8.8" ry="11.55" fill="none" stroke="#120a14" stroke-width="0.8" stroke-dasharray="1.3 1.3"/><circle cx="819.23" cy="324.7" r="7.6" fill="#e6bc2e"/><circle cx="819.23" cy="324.7" r="6.0" fill="#07101e"/><path d="M816.23 323.7H818.23M820.23 321.7V327.7M822.23 322.7V326.7" stroke="#8a909c" stroke-width="1"/><path d="M825.73 318.7V330.7" stroke="#f2d4dc" stroke-width="1.3" opacity="0.55" stroke-dasharray="2 1"/><ellipse cx="819.23" cy="362" rx="11.0" ry="13.75" fill="#c83434"/><ellipse cx="819.23" cy="362" rx="12.0" ry="14.75" fill="none" stroke="#120a14" stroke-width="2.2" stroke-dasharray="18.56 2.5" stroke-dashoffset="19.81"/><ellipse cx="819.23" cy="362" rx="8.8" ry="11.55" fill="none" stroke="#120a14" stroke-width="0.8" stroke-dasharray="1.3 1.3"/><circle cx="819.23" cy="362" r="7.6" fill="#e6bc2e"/><circle cx="819.23" cy="362" r="6.0" fill="#07101e"/><path d="M816.23 361H818.23M820.23 359V365M822.23 360V364" stroke="#8a909c" stroke-width="1"/><path d="M825.73 356V368" stroke="#f2d4dc" stroke-width="1.3" opacity="0.55" stroke-dasharray="2 1"/><path d="M816.73 340V348M821.73 340V348" stroke="#e69468" stroke-width="0.8"/><rect x="530" y="419.5" width="46" height="162.0" fill="none" stroke="#ff2ad4" stroke-width="1" /><rect x="532" y="431" width="42" height="44" fill="none" stroke="#e69468" stroke-width="1" /><rect x="532" y="525" width="42" height="44" fill="none" stroke="#e69468" stroke-width="1" /><path d="M539 475V525M567 475V525" stroke="#e69468" stroke-width="1"/><rect x="539.3" y="416.8" width="27.4" height="27.4" rx="7.5" fill="#120a14"/><rect x="541.5" y="419.0" width="23" height="23" rx="6" fill="#c83434"/><circle cx="553" cy="430.5" r="7.4" fill="#e6bc2e"/><circle cx="553" cy="430.5" r="5.8" fill="#07101e"/><path d="M553 426.5V429.5M551 429.5H555M550 434.5H556" stroke="#8a909c" stroke-width="1"/><rect x="539.3" y="462.0" width="27.4" height="27.4" rx="7.5" fill="#120a14"/><rect x="541.5" y="464.2" width="23" height="23" rx="6" fill="#c83434"/><circle cx="553" cy="475.7" r="7.4" fill="#e6bc2e"/><circle cx="553" cy="475.7" r="5.8" fill="#07101e"/><path d="M553 471.7V474.7M551 474.7H555M550 479.7H556" stroke="#8a909c" stroke-width="1"/><circle cx="553" cy="524.6" r="13.7" fill="#120a14"/><circle cx="553" cy="524.6" r="11.5" fill="#c83434"/><circle cx="553" cy="524.6" r="7.4" fill="#e6bc2e"/><circle cx="553" cy="524.6" r="5.8" fill="#07101e"/><path d="M553 520.6V523.6M551 523.6H555M550 528.6H556" stroke="#8a909c" stroke-width="1"/><circle cx="553" cy="569.8" r="13.7" fill="#120a14"/><circle cx="553" cy="569.8" r="11.5" fill="#c83434"/><circle cx="553" cy="569.8" r="7.4" fill="#e6bc2e"/><circle cx="553" cy="569.8" r="5.8" fill="#07101e"/><path d="M553 565.8V568.8M551 568.8H555M550 573.8H556" stroke="#8a909c" stroke-width="1"/><text x="584" y="500" font-size="10.5" fill="#e89a6c" text-anchor="middle" font-family="Liberation Mono" transform="rotate(-90 584 500)">F1</text><text x="526" y="500" font-size="10.5" fill="#e89a6c" text-anchor="middle" font-family="Liberation Mono" transform="rotate(-90 526 500)">12V</text><rect x="604.5" y="419.5" width="46.0" height="162.0" fill="none" stroke="#ff2ad4" stroke-width="1" /><rect x="606.5" y="431" width="42.0" height="44" fill="none" stroke="#e69468" stroke-width="1" /><rect x="606.5" y="525" width="42.0" height="44" fill="none" stroke="#e69468" stroke-width="1" /><path d="M613.5 475V525M641.5 475V525" stroke="#e69468" stroke-width="1"/><rect x="613.8" y="416.8" width="27.4" height="27.4" rx="7.5" fill="#120a14"/><rect x="616.0" y="419.0" width="23" height="23" rx="6" fill="#c83434"/><circle cx="627.5" cy="430.5" r="7.4" fill="#e6bc2e"/><circle cx="627.5" cy="430.5" r="5.8" fill="#07101e"/><path d="M627.5 426.5V429.5M625.5 429.5H629.5M624.5 434.5H630.5" stroke="#8a909c" stroke-width="1"/><rect x="613.8" y="462.0" width="27.4" height="27.4" rx="7.5" fill="#120a14"/><rect x="616.0" y="464.2" width="23" height="23" rx="6" fill="#c83434"/><circle cx="627.5" cy="475.7" r="7.4" fill="#e6bc2e"/><circle cx="627.5" cy="475.7" r="5.8" fill="#07101e"/><path d="M627.5 471.7V474.7M625.5 474.7H629.5M624.5 479.7H630.5" stroke="#8a909c" stroke-width="1"/><circle cx="627.5" cy="524.6" r="13.7" fill="#120a14"/><circle cx="627.5" cy="524.6" r="11.5" fill="#c83434"/><circle cx="627.5" cy="524.6" r="7.4" fill="#e6bc2e"/><circle cx="627.5" cy="524.6" r="5.8" fill="#07101e"/><path d="M627.5 520.6V523.6M625.5 523.6H629.5M624.5 528.6H630.5" stroke="#8a909c" stroke-width="1"/><circle cx="627.5" cy="569.8" r="13.7" fill="#120a14"/><circle cx="627.5" cy="569.8" r="11.5" fill="#c83434"/><circle cx="627.5" cy="569.8" r="7.4" fill="#e6bc2e"/><circle cx="627.5" cy="569.8" r="5.8" fill="#07101e"/><path d="M627.5 565.8V568.8M625.5 568.8H629.5M624.5 573.8H630.5" stroke="#8a909c" stroke-width="1"/><text x="658.5" y="500" font-size="10.5" fill="#e89a6c" text-anchor="middle" font-family="Liberation Mono" transform="rotate(-90 658.5 500)">F2</text><text x="600.5" y="500" font-size="10.5" fill="#e89a6c" text-anchor="middle" font-family="Liberation Mono" transform="rotate(-90 600.5 500)">5V</text><rect x="679" y="419.5" width="46" height="162.0" fill="none" stroke="#ff2ad4" stroke-width="1" /><rect x="681" y="431" width="42" height="44" fill="none" stroke="#e69468" stroke-width="1" /><rect x="681" y="525" width="42" height="44" fill="none" stroke="#e69468" stroke-width="1" /><path d="M688 475V525M716 475V525" stroke="#e69468" stroke-width="1"/><rect x="688.3" y="416.8" width="27.4" height="27.4" rx="7.5" fill="#120a14"/><rect x="690.5" y="419.0" width="23" height="23" rx="6" fill="#c83434"/><circle cx="702" cy="430.5" r="7.4" fill="#e6bc2e"/><circle cx="702" cy="430.5" r="5.8" fill="#07101e"/><path d="M702 426.5V429.5M700 429.5H704M699 434.5H705" stroke="#8a909c" stroke-width="1"/><rect x="688.3" y="462.0" width="27.4" height="27.4" rx="7.5" fill="#120a14"/><rect x="690.5" y="464.2" width="23" height="23" rx="6" fill="#c83434"/><circle cx="702" cy="475.7" r="7.4" fill="#e6bc2e"/><circle cx="702" cy="475.7" r="5.8" fill="#07101e"/><path d="M702 471.7V474.7M700 474.7H704M699 479.7H705" stroke="#8a909c" stroke-width="1"/><circle cx="702" cy="524.6" r="13.7" fill="#120a14"/><circle cx="702" cy="524.6" r="11.5" fill="#c83434"/><circle cx="702" cy="524.6" r="7.4" fill="#e6bc2e"/><circle cx="702" cy="524.6" r="5.8" fill="#07101e"/><path d="M702 520.6V523.6M700 523.6H704M699 528.6H705" stroke="#8a909c" stroke-width="1"/><circle cx="702" cy="569.8" r="13.7" fill="#120a14"/><circle cx="702" cy="569.8" r="11.5" fill="#c83434"/><circle cx="702" cy="569.8" r="7.4" fill="#e6bc2e"/><circle cx="702" cy="569.8" r="5.8" fill="#07101e"/><path d="M702 565.8V568.8M700 568.8H704M699 573.8H705" stroke="#8a909c" stroke-width="1"/><text x="733" y="500" font-size="10.5" fill="#e89a6c" text-anchor="middle" font-family="Liberation Mono" transform="rotate(-90 733 500)">F3</text><text x="675" y="500" font-size="10.5" fill="#e89a6c" text-anchor="middle" font-family="Liberation Mono" transform="rotate(-90 675 500)">3.3V</text><rect x="752.6" y="419.5" width="46.0" height="162.0" fill="none" stroke="#ff2ad4" stroke-width="1" /><rect x="754.6" y="431" width="42.0" height="44" fill="none" stroke="#e69468" stroke-width="1" /><rect x="754.6" y="525" width="42.0" height="44" fill="none" stroke="#e69468" stroke-width="1" /><path d="M761.6 475V525M789.6 475V525" stroke="#e69468" stroke-width="1"/><rect x="761.9" y="416.8" width="27.4" height="27.4" rx="7.5" fill="#120a14"/><rect x="764.1" y="419.0" width="23" height="23" rx="6" fill="#c83434"/><circle cx="775.6" cy="430.5" r="7.4" fill="#e6bc2e"/><circle cx="775.6" cy="430.5" r="5.8" fill="#07101e"/><path d="M775.6 426.5V429.5M773.6 429.5H777.6M772.6 434.5H778.6" stroke="#8a909c" stroke-width="1"/><rect x="761.9" y="462.0" width="27.4" height="27.4" rx="7.5" fill="#120a14"/><rect x="764.1" y="464.2" width="23" height="23" rx="6" fill="#c83434"/><circle cx="775.6" cy="475.7" r="7.4" fill="#e6bc2e"/><circle cx="775.6" cy="475.7" r="5.8" fill="#07101e"/><path d="M775.6 471.7V474.7M773.6 474.7H777.6M772.6 479.7H778.6" stroke="#8a909c" stroke-width="1"/><circle cx="775.6" cy="524.6" r="13.7" fill="#120a14"/><circle cx="775.6" cy="524.6" r="11.5" fill="#c83434"/><circle cx="775.6" cy="524.6" r="7.4" fill="#e6bc2e"/><circle cx="775.6" cy="524.6" r="5.8" fill="#07101e"/><path d="M775.6 520.6V523.6M773.6 523.6H777.6M772.6 528.6H778.6" stroke="#8a909c" stroke-width="1"/><circle cx="775.6" cy="569.8" r="13.7" fill="#120a14"/><circle cx="775.6" cy="569.8" r="11.5" fill="#c83434"/><circle cx="775.6" cy="569.8" r="7.4" fill="#e6bc2e"/><circle cx="775.6" cy="569.8" r="5.8" fill="#07101e"/><path d="M775.6 565.8V568.8M773.6 568.8H777.6M772.6 573.8H778.6" stroke="#8a909c" stroke-width="1"/><text x="806.6" y="500" font-size="10.5" fill="#e89a6c" text-anchor="middle" font-family="Liberation Mono" transform="rotate(-90 806.6 500)">F4</text><text x="748.6" y="500" font-size="10.5" fill="#e89a6c" text-anchor="middle" font-family="Liberation Mono" transform="rotate(-90 748.6 500)">-12V</text><rect x="838.5" y="394.5" width="36.0" height="78.0" fill="none" stroke="#ff2ad4" stroke-width="1" /><rect x="841.5" y="400.5" width="31.0" height="67.0" fill="none" stroke="#e69468" stroke-width="1" /><rect x="853" y="420" width="9" height="28" fill="none" stroke="#e69468" stroke-width="0.8"/><rect x="853" y="436" width="9" height="12" fill="#e69468"/><rect x="851" y="396" width="12" height="20" rx="4" fill="#c83434" stroke="#3e6aa8" stroke-width="1.5"/><rect x="851" y="453" width="12" height="20" rx="4" fill="#c83434" stroke="#3e6aa8" stroke-width="1.5"/><text x="834" y="433" font-size="10" fill="#e89a6c" text-anchor="middle" font-family="Liberation Mono" transform="rotate(-90 834 433)">SW1</text><circle cx="846" cy="383" r="5.5" fill="#120a14"/><rect x="844.5" y="381.5" width="3" height="3" fill="#e6bc2e"/><circle cx="846" cy="488" r="5.5" fill="#120a14"/><rect x="844.5" y="486.5" width="3" height="3" fill="#e6bc2e"/><rect x="828.5" y="504" width="24.0" height="14" fill="none" stroke="#ff2ad4" stroke-width="1" /><rect x="830" y="505" width="9" height="12" fill="#c83434"/><rect x="842" y="505" width="9" height="12" fill="#c83434"/><rect x="866" y="500" width="13" height="22" fill="#c83434" stroke="#e8e0a0" stroke-width="1"/><rect x="883" y="500" width="13" height="22" fill="#c83434" stroke="#e8e0a0" stroke-width="1"/><text x="840" y="527" font-size="10" fill="#e89a6c" text-anchor="middle" font-family="Liberation Mono">R1</text><text x="880" y="530" font-size="10" fill="#e89a6c" text-anchor="middle" font-family="Liberation Mono">D1</text><rect x="822.5" y="534.5" width="83.0" height="41.0" fill="none" stroke="#ff2ad4" stroke-width="1" /><rect x="843.5" y="537.5" width="19.0" height="36.0" fill="none" stroke="#e69468" stroke-width="1" /><path d="M843 555H862" stroke="#e69468" stroke-width="1"/><rect x="862" y="543" width="40" height="7" fill="#e69468"/><rect x="862" y="560" width="40" height="6" fill="none" stroke="#e69468" stroke-width="1"/><rect x="824" y="537" width="19" height="19" rx="2" fill="#120a14"/><rect x="825" y="538" width="17" height="17" rx="1" fill="#c83434"/><circle cx="833.5" cy="546.8" r="5.5" fill="#e6bc2e"/><circle cx="833.5" cy="546.8" r="4" fill="#07101e"/><circle cx="833.5" cy="563.5" r="9" fill="#120a14"/><circle cx="833.5" cy="563.5" r="7.5" fill="#c83434"/><circle cx="833.5" cy="563.5" r="5.5" fill="#e6bc2e"/><circle cx="833.5" cy="563.5" r="4" fill="#07101e"/><text x="863" y="582.5" font-size="10.5" fill="#e89a6c" text-anchor="middle" font-family="Liberation Mono">-12V</text><circle cx="451" cy="235" r="23.2" fill="none" stroke="#120a14" stroke-width="2.6" stroke-dasharray="30 6.5" transform="rotate(-60 451 235)"/><circle cx="451" cy="235" r="22.5" fill="#c83434"/><circle cx="451" cy="235" r="12" fill="#e6bc2e"/><circle cx="451" cy="235" r="10.3" fill="#07101e"/><circle cx="451.0" cy="217.5" r="3.6" fill="#e6bc2e"/><circle cx="451.0" cy="217.5" r="1.6" fill="#07101e"/><circle cx="463.4" cy="222.6" r="3.6" fill="#e6bc2e"/><circle cx="463.4" cy="222.6" r="1.6" fill="#07101e"/><circle cx="468.5" cy="235.0" r="3.6" fill="#e6bc2e"/><circle cx="468.5" cy="235.0" r="1.6" fill="#07101e"/><circle cx="463.4" cy="247.4" r="3.6" fill="#e6bc2e"/><circle cx="463.4" cy="247.4" r="1.6" fill="#07101e"/><circle cx="451.0" cy="252.5" r="3.6" fill="#e6bc2e"/><circle cx="451.0" cy="252.5" r="1.6" fill="#07101e"/><circle cx="438.6" cy="247.4" r="3.6" fill="#e6bc2e"/><circle cx="438.6" cy="247.4" r="1.6" fill="#07101e"/><circle cx="433.5" cy="235.0" r="3.6" fill="#e6bc2e"/><circle cx="433.5" cy="235.0" r="1.6" fill="#07101e"/><circle cx="438.6" cy="222.6" r="3.6" fill="#e6bc2e"/><circle cx="438.6" cy="222.6" r="1.6" fill="#07101e"/><path d="M451 222V232M447 232H455" stroke="#c8c8d0" stroke-width="1.3"/><text x="451" y="251" font-size="11.5" fill="#e0d8e0" opacity="0.75" text-anchor="middle" font-family="Liberation Mono">GND</text><text x="451" y="209" font-size="9.5" fill="#e89a6c" text-anchor="middle" font-family="Liberation Mono">H1</text><circle cx="892" cy="232.6" r="23.2" fill="none" stroke="#120a14" stroke-width="2.6" stroke-dasharray="30 6.5" transform="rotate(-60 892 232.6)"/><circle cx="892" cy="232.6" r="22.5" fill="#c83434"/><circle cx="892" cy="232.6" r="12" fill="#e6bc2e"/><circle cx="892" cy="232.6" r="10.3" fill="#07101e"/><circle cx="892.0" cy="215.1" r="3.6" fill="#e6bc2e"/><circle cx="892.0" cy="215.1" r="1.6" fill="#07101e"/><circle cx="904.4" cy="220.2" r="3.6" fill="#e6bc2e"/><circle cx="904.4" cy="220.2" r="1.6" fill="#07101e"/><circle cx="909.5" cy="232.6" r="3.6" fill="#e6bc2e"/><circle cx="909.5" cy="232.6" r="1.6" fill="#07101e"/><circle cx="904.4" cy="245.0" r="3.6" fill="#e6bc2e"/><circle cx="904.4" cy="245.0" r="1.6" fill="#07101e"/><circle cx="892.0" cy="250.1" r="3.6" fill="#e6bc2e"/><circle cx="892.0" cy="250.1" r="1.6" fill="#07101e"/><circle cx="879.6" cy="245.0" r="3.6" fill="#e6bc2e"/><circle cx="879.6" cy="245.0" r="1.6" fill="#07101e"/><circle cx="874.5" cy="232.6" r="3.6" fill="#e6bc2e"/><circle cx="874.5" cy="232.6" r="1.6" fill="#07101e"/><circle cx="879.6" cy="220.2" r="3.6" fill="#e6bc2e"/><circle cx="879.6" cy="220.2" r="1.6" fill="#07101e"/><path d="M892 219.6V229.6M888 229.6H896" stroke="#c8c8d0" stroke-width="1.3"/><text x="892" y="248.6" font-size="11.5" fill="#e0d8e0" opacity="0.75" text-anchor="middle" font-family="Liberation Mono">GND</text><text x="892" y="206.6" font-size="9.5" fill="#e89a6c" text-anchor="middle" font-family="Liberation Mono">H2</text><circle cx="451" cy="600.8" r="23.2" fill="none" stroke="#120a14" stroke-width="2.6" stroke-dasharray="30 6.5" transform="rotate(-60 451 600.8)"/><circle cx="451" cy="600.8" r="22.5" fill="#c83434"/><circle cx="451" cy="600.8" r="12" fill="#e6bc2e"/><circle cx="451" cy="600.8" r="10.3" fill="#07101e"/><circle cx="451.0" cy="583.3" r="3.6" fill="#e6bc2e"/><circle cx="451.0" cy="583.3" r="1.6" fill="#07101e"/><circle cx="463.4" cy="588.4" r="3.6" fill="#e6bc2e"/><circle cx="463.4" cy="588.4" r="1.6" fill="#07101e"/><circle cx="468.5" cy="600.8" r="3.6" fill="#e6bc2e"/><circle cx="468.5" cy="600.8" r="1.6" fill="#07101e"/><circle cx="463.4" cy="613.2" r="3.6" fill="#e6bc2e"/><circle cx="463.4" cy="613.2" r="1.6" fill="#07101e"/><circle cx="451.0" cy="618.3" r="3.6" fill="#e6bc2e"/><circle cx="451.0" cy="618.3" r="1.6" fill="#07101e"/><circle cx="438.6" cy="613.2" r="3.6" fill="#e6bc2e"/><circle cx="438.6" cy="613.2" r="1.6" fill="#07101e"/><circle cx="433.5" cy="600.8" r="3.6" fill="#e6bc2e"/><circle cx="433.5" cy="600.8" r="1.6" fill="#07101e"/><circle cx="438.6" cy="588.4" r="3.6" fill="#e6bc2e"/><circle cx="438.6" cy="588.4" r="1.6" fill="#07101e"/><path d="M451 587.8V597.8M447 597.8H455" stroke="#c8c8d0" stroke-width="1.3"/><text x="451" y="616.8" font-size="11.5" fill="#e0d8e0" opacity="0.75" text-anchor="middle" font-family="Liberation Mono">GND</text><text x="451" y="574.8" font-size="9.5" fill="#e89a6c" text-anchor="middle" font-family="Liberation Mono">H3</text><circle cx="893" cy="605.6" r="23.2" fill="none" stroke="#120a14" stroke-width="2.6" stroke-dasharray="30 6.5" transform="rotate(-60 893 605.6)"/><circle cx="893" cy="605.6" r="22.5" fill="#c83434"/><circle cx="893" cy="605.6" r="12" fill="#e6bc2e"/><circle cx="893" cy="605.6" r="10.3" fill="#07101e"/><circle cx="893.0" cy="588.1" r="3.6" fill="#e6bc2e"/><circle cx="893.0" cy="588.1" r="1.6" fill="#07101e"/><circle cx="905.4" cy="593.2" r="3.6" fill="#e6bc2e"/><circle cx="905.4" cy="593.2" r="1.6" fill="#07101e"/><circle cx="910.5" cy="605.6" r="3.6" fill="#e6bc2e"/><circle cx="910.5" cy="605.6" r="1.6" fill="#07101e"/><circle cx="905.4" cy="618.0" r="3.6" fill="#e6bc2e"/><circle cx="905.4" cy="618.0" r="1.6" fill="#07101e"/><circle cx="893.0" cy="623.1" r="3.6" fill="#e6bc2e"/><circle cx="893.0" cy="623.1" r="1.6" fill="#07101e"/><circle cx="880.6" cy="618.0" r="3.6" fill="#e6bc2e"/><circle cx="880.6" cy="618.0" r="1.6" fill="#07101e"/><circle cx="875.5" cy="605.6" r="3.6" fill="#e6bc2e"/><circle cx="875.5" cy="605.6" r="1.6" fill="#07101e"/><circle cx="880.6" cy="593.2" r="3.6" fill="#e6bc2e"/><circle cx="880.6" cy="593.2" r="1.6" fill="#07101e"/><path d="M893 592.6V602.6M889 602.6H897" stroke="#c8c8d0" stroke-width="1.3"/><text x="893" y="621.6" font-size="11.5" fill="#e0d8e0" opacity="0.75" text-anchor="middle" font-family="Liberation Mono">GND</text><text x="893" y="579.6" font-size="9.5" fill="#e89a6c" text-anchor="middle" font-family="Liberation Mono">H4</text><rect x="450.5" y="632.5" width="71.0" height="82.0" fill="none" stroke="#ff2ad4" stroke-width="1" /><path d="M453 635H518V704H498V712H473V704H453Z" fill="none" stroke="#e69468" stroke-width="1"/><text x="486" y="722" font-size="10" fill="#e0946c" text-anchor="middle" font-family="Liberation Mono">+12V</text><rect x="450.5" y="746.2" width="71.0" height="80.59999999999991" fill="none" stroke="#ff2ad4" stroke-width="1" /><path d="M453 748.7H518V816.3H498V824.3H473V816.3H453Z" fill="none" stroke="#e69468" stroke-width="1"/><text x="486" y="834.3" font-size="10" fill="#e0946c" text-anchor="middle" font-family="Liberation Mono">+12V</text><rect x="458.59999999999997" y="636.0" width="25.6" height="29.6" rx="3" fill="#120a14"/><rect x="460.4" y="637.8" width="22" height="26" rx="1.5" fill="#c83434"/><rect x="462.9" y="640.3" width="17" height="21" fill="none" stroke="#120a14" stroke-width="0.9" stroke-dasharray="14 3"/><circle cx="471.4" cy="650.8" r="7.6" fill="#e6bc2e"/><circle cx="471.4" cy="650.8" r="6.0" fill="#07101e"/><path d="M468.4 649.8H470.4M472.4 647.8V653.8M474.4 648.8V652.8" stroke="#8a909c" stroke-width="1"/><path d="M477.9 644.8V656.8" stroke="#f2d4dc" stroke-width="1.3" opacity="0.55" stroke-dasharray="2 1"/><ellipse cx="499.3" cy="650.8" rx="11.0" ry="13.0" fill="#c83434"/><ellipse cx="499.3" cy="650.8" rx="12.0" ry="14.0" fill="none" stroke="#120a14" stroke-width="2.2" stroke-dasharray="17.95 2.5" stroke-dashoffset="19.20"/><ellipse cx="499.3" cy="650.8" rx="8.8" ry="10.8" fill="none" stroke="#120a14" stroke-width="0.8" stroke-dasharray="1.3 1.3"/><circle cx="499.3" cy="650.8" r="7.6" fill="#e6bc2e"/><circle cx="499.3" cy="650.8" r="6.0" fill="#07101e"/><path d="M496.3 649.8H498.3M500.3 647.8V653.8M502.3 648.8V652.8" stroke="#8a909c" stroke-width="1"/><path d="M505.8 644.8V656.8" stroke="#f2d4dc" stroke-width="1.3" opacity="0.55" stroke-dasharray="2 1"/><ellipse cx="471.4" cy="687.8" rx="11.0" ry="13.0" fill="#c83434"/><ellipse cx="471.4" cy="687.8" rx="12.0" ry="14.0" fill="none" stroke="#120a14" stroke-width="2.2" stroke-dasharray="17.95 2.5" stroke-dashoffset="19.20"/><ellipse cx="471.4" cy="687.8" rx="8.8" ry="10.8" fill="none" stroke="#120a14" stroke-width="0.8" stroke-dasharray="1.3 1.3"/><circle cx="471.4" cy="687.8" r="7.6" fill="#e6bc2e"/><circle cx="471.4" cy="687.8" r="6.0" fill="#07101e"/><path d="M468.4 686.8H470.4M472.4 684.8V690.8M474.4 685.8V689.8" stroke="#8a909c" stroke-width="1"/><path d="M477.9 681.8V693.8" stroke="#f2d4dc" stroke-width="1.3" opacity="0.55" stroke-dasharray="2 1"/><ellipse cx="499.3" cy="687.8" rx="11.0" ry="13.0" fill="#c83434"/><ellipse cx="499.3" cy="687.8" rx="12.0" ry="14.0" fill="none" stroke="#120a14" stroke-width="2.2" stroke-dasharray="17.95 2.5" stroke-dashoffset="19.20"/><ellipse cx="499.3" cy="687.8" rx="8.8" ry="10.8" fill="none" stroke="#120a14" stroke-width="0.8" stroke-dasharray="1.3 1.3"/><circle cx="499.3" cy="687.8" r="7.6" fill="#e6bc2e"/><circle cx="499.3" cy="687.8" r="6.0" fill="#07101e"/><path d="M496.3 686.8H498.3M500.3 684.8V690.8M502.3 685.8V689.8" stroke="#8a909c" stroke-width="1"/><path d="M505.8 681.8V693.8" stroke="#f2d4dc" stroke-width="1.3" opacity="0.55" stroke-dasharray="2 1"/><rect x="458.59999999999997" y="748.4000000000001" width="25.6" height="29.6" rx="3" fill="#120a14"/><rect x="460.4" y="750.2" width="22" height="26" rx="1.5" fill="#c83434"/><rect x="462.9" y="752.7" width="17" height="21" fill="none" stroke="#120a14" stroke-width="0.9" stroke-dasharray="14 3"/><circle cx="471.4" cy="763.2" r="7.6" fill="#e6bc2e"/><circle cx="471.4" cy="763.2" r="6.0" fill="#07101e"/><path d="M468.4 762.2H470.4M472.4 760.2V766.2M474.4 761.2V765.2" stroke="#8a909c" stroke-width="1"/><path d="M477.9 757.2V769.2" stroke="#f2d4dc" stroke-width="1.3" opacity="0.55" stroke-dasharray="2 1"/><ellipse cx="499.3" cy="763.2" rx="11.0" ry="13.0" fill="#c83434"/><ellipse cx="499.3" cy="763.2" rx="12.0" ry="14.0" fill="none" stroke="#120a14" stroke-width="2.2" stroke-dasharray="17.95 2.5" stroke-dashoffset="19.20"/><ellipse cx="499.3" cy="763.2" rx="8.8" ry="10.8" fill="none" stroke="#120a14" stroke-width="0.8" stroke-dasharray="1.3 1.3"/><circle cx="499.3" cy="763.2" r="7.6" fill="#e6bc2e"/><circle cx="499.3" cy="763.2" r="6.0" fill="#07101e"/><path d="M496.3 762.2H498.3M500.3 760.2V766.2M502.3 761.2V765.2" stroke="#8a909c" stroke-width="1"/><path d="M505.8 757.2V769.2" stroke="#f2d4dc" stroke-width="1.3" opacity="0.55" stroke-dasharray="2 1"/><ellipse cx="471.4" cy="800.5" rx="11.0" ry="13.0" fill="#c83434"/><ellipse cx="471.4" cy="800.5" rx="12.0" ry="14.0" fill="none" stroke="#120a14" stroke-width="2.2" stroke-dasharray="17.95 2.5" stroke-dashoffset="19.20"/><ellipse cx="471.4" cy="800.5" rx="8.8" ry="10.8" fill="none" stroke="#120a14" stroke-width="0.8" stroke-dasharray="1.3 1.3"/><circle cx="471.4" cy="800.5" r="7.6" fill="#e6bc2e"/><circle cx="471.4" cy="800.5" r="6.0" fill="#07101e"/><path d="M468.4 799.5H470.4M472.4 797.5V803.5M474.4 798.5V802.5" stroke="#8a909c" stroke-width="1"/><path d="M477.9 794.5V806.5" stroke="#f2d4dc" stroke-width="1.3" opacity="0.55" stroke-dasharray="2 1"/><ellipse cx="499.3" cy="800.5" rx="11.0" ry="13.0" fill="#c83434"/><ellipse cx="499.3" cy="800.5" rx="12.0" ry="14.0" fill="none" stroke="#120a14" stroke-width="2.2" stroke-dasharray="17.95 2.5" stroke-dashoffset="19.20"/><ellipse cx="499.3" cy="800.5" rx="8.8" ry="10.8" fill="none" stroke="#120a14" stroke-width="0.8" stroke-dasharray="1.3 1.3"/><circle cx="499.3" cy="800.5" r="7.6" fill="#e6bc2e"/><circle cx="499.3" cy="800.5" r="6.0" fill="#07101e"/><path d="M496.3 799.5H498.3M500.3 797.5V803.5M502.3 798.5V802.5" stroke="#8a909c" stroke-width="1"/><path d="M505.8 794.5V806.5" stroke="#f2d4dc" stroke-width="1.3" opacity="0.55" stroke-dasharray="2 1"/><rect x="553.5" y="632.3" width="100.0" height="82.10000000000002" fill="none" stroke="#ff2ad4" stroke-width="1" /><path d="M556 635.8H650V703.9H610V711.9H585V703.9H556Z" fill="none" stroke="#e69468" stroke-width="1"/><text x="604" y="721.9" font-size="10" fill="#e0946c" text-anchor="middle" font-family="Liberation Mono">DIST</text><rect x="562.2" y="636.0" width="25.6" height="29.6" rx="3" fill="#120a14"/><rect x="564.0" y="637.8" width="22" height="26" rx="1.5" fill="#c83434"/><rect x="566.5" y="640.3" width="17" height="21" fill="none" stroke="#120a14" stroke-width="0.9" stroke-dasharray="14 3"/><circle cx="575.0" cy="650.8" r="7.6" fill="#e6bc2e"/><circle cx="575.0" cy="650.8" r="6.0" fill="#07101e"/><path d="M572.0 649.8H574.0M576.0 647.8V653.8M578.0 648.8V652.8" stroke="#8a909c" stroke-width="1"/><path d="M581.5 644.8V656.8" stroke="#f2d4dc" stroke-width="1.3" opacity="0.55" stroke-dasharray="2 1"/><ellipse cx="575.0" cy="687.9" rx="11.0" ry="13.0" fill="#c83434"/><ellipse cx="575.0" cy="687.9" rx="12.0" ry="14.0" fill="none" stroke="#120a14" stroke-width="2.2" stroke-dasharray="17.95 2.5" stroke-dashoffset="19.20"/><ellipse cx="575.0" cy="687.9" rx="8.8" ry="10.8" fill="none" stroke="#120a14" stroke-width="0.8" stroke-dasharray="1.3 1.3"/><circle cx="575.0" cy="687.9" r="7.6" fill="#e6bc2e"/><circle cx="575.0" cy="687.9" r="6.0" fill="#07101e"/><path d="M572.0 686.9H574.0M576.0 684.9V690.9M578.0 685.9V689.9" stroke="#8a909c" stroke-width="1"/><path d="M581.5 681.9V693.9" stroke="#f2d4dc" stroke-width="1.3" opacity="0.55" stroke-dasharray="2 1"/><ellipse cx="603.5" cy="650.8" rx="11.0" ry="13.0" fill="#c83434"/><ellipse cx="603.5" cy="650.8" rx="12.0" ry="14.0" fill="none" stroke="#120a14" stroke-width="2.2" stroke-dasharray="17.95 2.5" stroke-dashoffset="19.20"/><ellipse cx="603.5" cy="650.8" rx="8.8" ry="10.8" fill="none" stroke="#120a14" stroke-width="0.8" stroke-dasharray="1.3 1.3"/><circle cx="603.5" cy="650.8" r="7.6" fill="#e6bc2e"/><circle cx="603.5" cy="650.8" r="6.0" fill="#07101e"/><path d="M600.5 649.8H602.5M604.5 647.8V653.8M606.5 648.8V652.8" stroke="#8a909c" stroke-width="1"/><path d="M610.0 644.8V656.8" stroke="#f2d4dc" stroke-width="1.3" opacity="0.55" stroke-dasharray="2 1"/><ellipse cx="603.5" cy="687.9" rx="11.0" ry="13.0" fill="#c83434"/><ellipse cx="603.5" cy="687.9" rx="12.0" ry="14.0" fill="none" stroke="#120a14" stroke-width="2.2" stroke-dasharray="17.95 2.5" stroke-dashoffset="19.20"/><ellipse cx="603.5" cy="687.9" rx="8.8" ry="10.8" fill="none" stroke="#120a14" stroke-width="0.8" stroke-dasharray="1.3 1.3"/><circle cx="603.5" cy="687.9" r="7.6" fill="#e6bc2e"/><circle cx="603.5" cy="687.9" r="6.0" fill="#07101e"/><path d="M600.5 686.9H602.5M604.5 684.9V690.9M606.5 685.9V689.9" stroke="#8a909c" stroke-width="1"/><path d="M610.0 681.9V693.9" stroke="#f2d4dc" stroke-width="1.3" opacity="0.55" stroke-dasharray="2 1"/><ellipse cx="632.0" cy="650.8" rx="11.0" ry="13.0" fill="#c83434"/><ellipse cx="632.0" cy="650.8" rx="12.0" ry="14.0" fill="none" stroke="#120a14" stroke-width="2.2" stroke-dasharray="17.95 2.5" stroke-dashoffset="19.20"/><ellipse cx="632.0" cy="650.8" rx="8.8" ry="10.8" fill="none" stroke="#120a14" stroke-width="0.8" stroke-dasharray="1.3 1.3"/><circle cx="632.0" cy="650.8" r="7.6" fill="#e6bc2e"/><circle cx="632.0" cy="650.8" r="6.0" fill="#07101e"/><path d="M629.0 649.8H631.0M633.0 647.8V653.8M635.0 648.8V652.8" stroke="#8a909c" stroke-width="1"/><path d="M638.5 644.8V656.8" stroke="#f2d4dc" stroke-width="1.3" opacity="0.55" stroke-dasharray="2 1"/><ellipse cx="632.0" cy="687.9" rx="11.0" ry="13.0" fill="#c83434"/><ellipse cx="632.0" cy="687.9" rx="12.0" ry="14.0" fill="none" stroke="#120a14" stroke-width="2.2" stroke-dasharray="17.95 2.5" stroke-dashoffset="19.20"/><ellipse cx="632.0" cy="687.9" rx="8.8" ry="10.8" fill="none" stroke="#120a14" stroke-width="0.8" stroke-dasharray="1.3 1.3"/><circle cx="632.0" cy="687.9" r="7.6" fill="#e6bc2e"/><circle cx="632.0" cy="687.9" r="6.0" fill="#07101e"/><path d="M629.0 686.9H631.0M633.0 684.9V690.9M635.0 685.9V689.9" stroke="#8a909c" stroke-width="1"/><path d="M638.5 681.9V693.9" stroke="#f2d4dc" stroke-width="1.3" opacity="0.55" stroke-dasharray="2 1"/><rect x="681.8" y="632.3" width="100.0" height="82.10000000000002" fill="none" stroke="#ff2ad4" stroke-width="1" /><path d="M684.3 635.8H778.3V703.9H738.3V711.9H713.3V703.9H684.3Z" fill="none" stroke="#e69468" stroke-width="1"/><text x="732.3" y="721.9" font-size="10" fill="#e0946c" text-anchor="middle" font-family="Liberation Mono">DIST</text><rect x="690.5" y="636.0" width="25.6" height="29.6" rx="3" fill="#120a14"/><rect x="692.3" y="637.8" width="22" height="26" rx="1.5" fill="#c83434"/><rect x="694.8" y="640.3" width="17" height="21" fill="none" stroke="#120a14" stroke-width="0.9" stroke-dasharray="14 3"/><circle cx="703.3" cy="650.8" r="7.6" fill="#e6bc2e"/><circle cx="703.3" cy="650.8" r="6.0" fill="#07101e"/><path d="M700.3 649.8H702.3M704.3 647.8V653.8M706.3 648.8V652.8" stroke="#8a909c" stroke-width="1"/><path d="M709.8 644.8V656.8" stroke="#f2d4dc" stroke-width="1.3" opacity="0.55" stroke-dasharray="2 1"/><ellipse cx="703.3" cy="687.9" rx="11.0" ry="13.0" fill="#c83434"/><ellipse cx="703.3" cy="687.9" rx="12.0" ry="14.0" fill="none" stroke="#120a14" stroke-width="2.2" stroke-dasharray="17.95 2.5" stroke-dashoffset="19.20"/><ellipse cx="703.3" cy="687.9" rx="8.8" ry="10.8" fill="none" stroke="#120a14" stroke-width="0.8" stroke-dasharray="1.3 1.3"/><circle cx="703.3" cy="687.9" r="7.6" fill="#e6bc2e"/><circle cx="703.3" cy="687.9" r="6.0" fill="#07101e"/><path d="M700.3 686.9H702.3M704.3 684.9V690.9M706.3 685.9V689.9" stroke="#8a909c" stroke-width="1"/><path d="M709.8 681.9V693.9" stroke="#f2d4dc" stroke-width="1.3" opacity="0.55" stroke-dasharray="2 1"/><ellipse cx="731.8" cy="650.8" rx="11.0" ry="13.0" fill="#c83434"/><ellipse cx="731.8" cy="650.8" rx="12.0" ry="14.0" fill="none" stroke="#120a14" stroke-width="2.2" stroke-dasharray="17.95 2.5" stroke-dashoffset="19.20"/><ellipse cx="731.8" cy="650.8" rx="8.8" ry="10.8" fill="none" stroke="#120a14" stroke-width="0.8" stroke-dasharray="1.3 1.3"/><circle cx="731.8" cy="650.8" r="7.6" fill="#e6bc2e"/><circle cx="731.8" cy="650.8" r="6.0" fill="#07101e"/><path d="M728.8 649.8H730.8M732.8 647.8V653.8M734.8 648.8V652.8" stroke="#8a909c" stroke-width="1"/><path d="M738.3 644.8V656.8" stroke="#f2d4dc" stroke-width="1.3" opacity="0.55" stroke-dasharray="2 1"/><ellipse cx="731.8" cy="687.9" rx="11.0" ry="13.0" fill="#c83434"/><ellipse cx="731.8" cy="687.9" rx="12.0" ry="14.0" fill="none" stroke="#120a14" stroke-width="2.2" stroke-dasharray="17.95 2.5" stroke-dashoffset="19.20"/><ellipse cx="731.8" cy="687.9" rx="8.8" ry="10.8" fill="none" stroke="#120a14" stroke-width="0.8" stroke-dasharray="1.3 1.3"/><circle cx="731.8" cy="687.9" r="7.6" fill="#e6bc2e"/><circle cx="731.8" cy="687.9" r="6.0" fill="#07101e"/><path d="M728.8 686.9H730.8M732.8 684.9V690.9M734.8 685.9V689.9" stroke="#8a909c" stroke-width="1"/><path d="M738.3 681.9V693.9" stroke="#f2d4dc" stroke-width="1.3" opacity="0.55" stroke-dasharray="2 1"/><ellipse cx="760.3" cy="650.8" rx="11.0" ry="13.0" fill="#c83434"/><ellipse cx="760.3" cy="650.8" rx="12.0" ry="14.0" fill="none" stroke="#120a14" stroke-width="2.2" stroke-dasharray="17.95 2.5" stroke-dashoffset="19.20"/><ellipse cx="760.3" cy="650.8" rx="8.8" ry="10.8" fill="none" stroke="#120a14" stroke-width="0.8" stroke-dasharray="1.3 1.3"/><circle cx="760.3" cy="650.8" r="7.6" fill="#e6bc2e"/><circle cx="760.3" cy="650.8" r="6.0" fill="#07101e"/><path d="M757.3 649.8H759.3M761.3 647.8V653.8M763.3 648.8V652.8" stroke="#8a909c" stroke-width="1"/><path d="M766.8 644.8V656.8" stroke="#f2d4dc" stroke-width="1.3" opacity="0.55" stroke-dasharray="2 1"/><ellipse cx="760.3" cy="687.9" rx="11.0" ry="13.0" fill="#c83434"/><ellipse cx="760.3" cy="687.9" rx="12.0" ry="14.0" fill="none" stroke="#120a14" stroke-width="2.2" stroke-dasharray="17.95 2.5" stroke-dashoffset="19.20"/><ellipse cx="760.3" cy="687.9" rx="8.8" ry="10.8" fill="none" stroke="#120a14" stroke-width="0.8" stroke-dasharray="1.3 1.3"/><circle cx="760.3" cy="687.9" r="7.6" fill="#e6bc2e"/><circle cx="760.3" cy="687.9" r="6.0" fill="#07101e"/><path d="M757.3 686.9H759.3M761.3 684.9V690.9M763.3 685.9V689.9" stroke="#8a909c" stroke-width="1"/><path d="M766.8 681.9V693.9" stroke="#f2d4dc" stroke-width="1.3" opacity="0.55" stroke-dasharray="2 1"/><rect x="810.4" y="632.3" width="100.0" height="82.10000000000002" fill="none" stroke="#ff2ad4" stroke-width="1" /><path d="M812.9 635.8H906.9V703.9H866.9V711.9H841.9V703.9H812.9Z" fill="none" stroke="#e69468" stroke-width="1"/><text x="860.9" y="721.9" font-size="10" fill="#e0946c" text-anchor="middle" font-family="Liberation Mono">DIST</text><rect x="819.1" y="636.0" width="25.6" height="29.6" rx="3" fill="#120a14"/><rect x="820.9" y="637.8" width="22" height="26" rx="1.5" fill="#c83434"/><rect x="823.4" y="640.3" width="17" height="21" fill="none" stroke="#120a14" stroke-width="0.9" stroke-dasharray="14 3"/><circle cx="831.9" cy="650.8" r="7.6" fill="#e6bc2e"/><circle cx="831.9" cy="650.8" r="6.0" fill="#07101e"/><path d="M828.9 649.8H830.9M832.9 647.8V653.8M834.9 648.8V652.8" stroke="#8a909c" stroke-width="1"/><path d="M838.4 644.8V656.8" stroke="#f2d4dc" stroke-width="1.3" opacity="0.55" stroke-dasharray="2 1"/><ellipse cx="831.9" cy="687.9" rx="11.0" ry="13.0" fill="#c83434"/><ellipse cx="831.9" cy="687.9" rx="12.0" ry="14.0" fill="none" stroke="#120a14" stroke-width="2.2" stroke-dasharray="17.95 2.5" stroke-dashoffset="19.20"/><ellipse cx="831.9" cy="687.9" rx="8.8" ry="10.8" fill="none" stroke="#120a14" stroke-width="0.8" stroke-dasharray="1.3 1.3"/><circle cx="831.9" cy="687.9" r="7.6" fill="#e6bc2e"/><circle cx="831.9" cy="687.9" r="6.0" fill="#07101e"/><path d="M828.9 686.9H830.9M832.9 684.9V690.9M834.9 685.9V689.9" stroke="#8a909c" stroke-width="1"/><path d="M838.4 681.9V693.9" stroke="#f2d4dc" stroke-width="1.3" opacity="0.55" stroke-dasharray="2 1"/><ellipse cx="860.4" cy="650.8" rx="11.0" ry="13.0" fill="#c83434"/><ellipse cx="860.4" cy="650.8" rx="12.0" ry="14.0" fill="none" stroke="#120a14" stroke-width="2.2" stroke-dasharray="17.95 2.5" stroke-dashoffset="19.20"/><ellipse cx="860.4" cy="650.8" rx="8.8" ry="10.8" fill="none" stroke="#120a14" stroke-width="0.8" stroke-dasharray="1.3 1.3"/><circle cx="860.4" cy="650.8" r="7.6" fill="#e6bc2e"/><circle cx="860.4" cy="650.8" r="6.0" fill="#07101e"/><path d="M857.4 649.8H859.4M861.4 647.8V653.8M863.4 648.8V652.8" stroke="#8a909c" stroke-width="1"/><path d="M866.9 644.8V656.8" stroke="#f2d4dc" stroke-width="1.3" opacity="0.55" stroke-dasharray="2 1"/><ellipse cx="860.4" cy="687.9" rx="11.0" ry="13.0" fill="#c83434"/><ellipse cx="860.4" cy="687.9" rx="12.0" ry="14.0" fill="none" stroke="#120a14" stroke-width="2.2" stroke-dasharray="17.95 2.5" stroke-dashoffset="19.20"/><ellipse cx="860.4" cy="687.9" rx="8.8" ry="10.8" fill="none" stroke="#120a14" stroke-width="0.8" stroke-dasharray="1.3 1.3"/><circle cx="860.4" cy="687.9" r="7.6" fill="#e6bc2e"/><circle cx="860.4" cy="687.9" r="6.0" fill="#07101e"/><path d="M857.4 686.9H859.4M861.4 684.9V690.9M863.4 685.9V689.9" stroke="#8a909c" stroke-width="1"/><path d="M866.9 681.9V693.9" stroke="#f2d4dc" stroke-width="1.3" opacity="0.55" stroke-dasharray="2 1"/><ellipse cx="888.9" cy="650.8" rx="11.0" ry="13.0" fill="#c83434"/><ellipse cx="888.9" cy="650.8" rx="12.0" ry="14.0" fill="none" stroke="#120a14" stroke-width="2.2" stroke-dasharray="17.95 2.5" stroke-dashoffset="19.20"/><ellipse cx="888.9" cy="650.8" rx="8.8" ry="10.8" fill="none" stroke="#120a14" stroke-width="0.8" stroke-dasharray="1.3 1.3"/><circle cx="888.9" cy="650.8" r="7.6" fill="#e6bc2e"/><circle cx="888.9" cy="650.8" r="6.0" fill="#07101e"/><path d="M885.9 649.8H887.9M889.9 647.8V653.8M891.9 648.8V652.8" stroke="#8a909c" stroke-width="1"/><path d="M895.4 644.8V656.8" stroke="#f2d4dc" stroke-width="1.3" opacity="0.55" stroke-dasharray="2 1"/><ellipse cx="888.9" cy="687.9" rx="11.0" ry="13.0" fill="#c83434"/><ellipse cx="888.9" cy="687.9" rx="12.0" ry="14.0" fill="none" stroke="#120a14" stroke-width="2.2" stroke-dasharray="17.95 2.5" stroke-dashoffset="19.20"/><ellipse cx="888.9" cy="687.9" rx="8.8" ry="10.8" fill="none" stroke="#120a14" stroke-width="0.8" stroke-dasharray="1.3 1.3"/><circle cx="888.9" cy="687.9" r="7.6" fill="#e6bc2e"/><circle cx="888.9" cy="687.9" r="6.0" fill="#07101e"/><path d="M885.9 686.9H887.9M889.9 684.9V690.9M891.9 685.9V689.9" stroke="#8a909c" stroke-width="1"/><path d="M895.4 681.9V693.9" stroke="#f2d4dc" stroke-width="1.3" opacity="0.55" stroke-dasharray="2 1"/><rect x="552.0" y="742.3" width="100.0" height="82.30000000000007" fill="none" stroke="#ff2ad4" stroke-width="1" /><path d="M554.5 745.8H648.5V814.1H608.5V822.1H583.5V814.1H554.5Z" fill="none" stroke="#e69468" stroke-width="1"/><text x="602.5" y="832.1" font-size="10" fill="#e0946c" text-anchor="middle" font-family="Liberation Mono">DIST</text><rect x="560.7" y="746.0" width="25.6" height="29.6" rx="3" fill="#120a14"/><rect x="562.5" y="747.8" width="22" height="26" rx="1.5" fill="#c83434"/><rect x="565.0" y="750.3" width="17" height="21" fill="none" stroke="#120a14" stroke-width="0.9" stroke-dasharray="14 3"/><circle cx="573.5" cy="760.8" r="7.6" fill="#e6bc2e"/><circle cx="573.5" cy="760.8" r="6.0" fill="#07101e"/><path d="M570.5 759.8H572.5M574.5 757.8V763.8M576.5 758.8V762.8" stroke="#8a909c" stroke-width="1"/><path d="M580.0 754.8V766.8" stroke="#f2d4dc" stroke-width="1.3" opacity="0.55" stroke-dasharray="2 1"/><ellipse cx="573.5" cy="798.1" rx="11.0" ry="13.0" fill="#c83434"/><ellipse cx="573.5" cy="798.1" rx="12.0" ry="14.0" fill="none" stroke="#120a14" stroke-width="2.2" stroke-dasharray="17.95 2.5" stroke-dashoffset="19.20"/><ellipse cx="573.5" cy="798.1" rx="8.8" ry="10.8" fill="none" stroke="#120a14" stroke-width="0.8" stroke-dasharray="1.3 1.3"/><circle cx="573.5" cy="798.1" r="7.6" fill="#e6bc2e"/><circle cx="573.5" cy="798.1" r="6.0" fill="#07101e"/><path d="M570.5 797.1H572.5M574.5 795.1V801.1M576.5 796.1V800.1" stroke="#8a909c" stroke-width="1"/><path d="M580.0 792.1V804.1" stroke="#f2d4dc" stroke-width="1.3" opacity="0.55" stroke-dasharray="2 1"/><ellipse cx="602.0" cy="760.8" rx="11.0" ry="13.0" fill="#c83434"/><ellipse cx="602.0" cy="760.8" rx="12.0" ry="14.0" fill="none" stroke="#120a14" stroke-width="2.2" stroke-dasharray="17.95 2.5" stroke-dashoffset="19.20"/><ellipse cx="602.0" cy="760.8" rx="8.8" ry="10.8" fill="none" stroke="#120a14" stroke-width="0.8" stroke-dasharray="1.3 1.3"/><circle cx="602.0" cy="760.8" r="7.6" fill="#e6bc2e"/><circle cx="602.0" cy="760.8" r="6.0" fill="#07101e"/><path d="M599.0 759.8H601.0M603.0 757.8V763.8M605.0 758.8V762.8" stroke="#8a909c" stroke-width="1"/><path d="M608.5 754.8V766.8" stroke="#f2d4dc" stroke-width="1.3" opacity="0.55" stroke-dasharray="2 1"/><ellipse cx="602.0" cy="798.1" rx="11.0" ry="13.0" fill="#c83434"/><ellipse cx="602.0" cy="798.1" rx="12.0" ry="14.0" fill="none" stroke="#120a14" stroke-width="2.2" stroke-dasharray="17.95 2.5" stroke-dashoffset="19.20"/><ellipse cx="602.0" cy="798.1" rx="8.8" ry="10.8" fill="none" stroke="#120a14" stroke-width="0.8" stroke-dasharray="1.3 1.3"/><circle cx="602.0" cy="798.1" r="7.6" fill="#e6bc2e"/><circle cx="602.0" cy="798.1" r="6.0" fill="#07101e"/><path d="M599.0 797.1H601.0M603.0 795.1V801.1M605.0 796.1V800.1" stroke="#8a909c" stroke-width="1"/><path d="M608.5 792.1V804.1" stroke="#f2d4dc" stroke-width="1.3" opacity="0.55" stroke-dasharray="2 1"/><ellipse cx="630.5" cy="760.8" rx="11.0" ry="13.0" fill="#c83434"/><ellipse cx="630.5" cy="760.8" rx="12.0" ry="14.0" fill="none" stroke="#120a14" stroke-width="2.2" stroke-dasharray="17.95 2.5" stroke-dashoffset="19.20"/><ellipse cx="630.5" cy="760.8" rx="8.8" ry="10.8" fill="none" stroke="#120a14" stroke-width="0.8" stroke-dasharray="1.3 1.3"/><circle cx="630.5" cy="760.8" r="7.6" fill="#e6bc2e"/><circle cx="630.5" cy="760.8" r="6.0" fill="#07101e"/><path d="M627.5 759.8H629.5M631.5 757.8V763.8M633.5 758.8V762.8" stroke="#8a909c" stroke-width="1"/><path d="M637.0 754.8V766.8" stroke="#f2d4dc" stroke-width="1.3" opacity="0.55" stroke-dasharray="2 1"/><ellipse cx="630.5" cy="798.1" rx="11.0" ry="13.0" fill="#c83434"/><ellipse cx="630.5" cy="798.1" rx="12.0" ry="14.0" fill="none" stroke="#120a14" stroke-width="2.2" stroke-dasharray="17.95 2.5" stroke-dashoffset="19.20"/><ellipse cx="630.5" cy="798.1" rx="8.8" ry="10.8" fill="none" stroke="#120a14" stroke-width="0.8" stroke-dasharray="1.3 1.3"/><circle cx="630.5" cy="798.1" r="7.6" fill="#e6bc2e"/><circle cx="630.5" cy="798.1" r="6.0" fill="#07101e"/><path d="M627.5 797.1H629.5M631.5 795.1V801.1M633.5 796.1V800.1" stroke="#8a909c" stroke-width="1"/><path d="M637.0 792.1V804.1" stroke="#f2d4dc" stroke-width="1.3" opacity="0.55" stroke-dasharray="2 1"/><rect x="681.8" y="743.9" width="100.0" height="82.30000000000007" fill="none" stroke="#ff2ad4" stroke-width="1" /><path d="M684.3 747.4H778.3V815.7H738.3V823.7H713.3V815.7H684.3Z" fill="none" stroke="#e69468" stroke-width="1"/><text x="732.3" y="833.7" font-size="10" fill="#e0946c" text-anchor="middle" font-family="Liberation Mono">DIST</text><rect x="690.5" y="747.6" width="25.6" height="29.6" rx="3" fill="#120a14"/><rect x="692.3" y="749.4" width="22" height="26" rx="1.5" fill="#c83434"/><rect x="694.8" y="751.9" width="17" height="21" fill="none" stroke="#120a14" stroke-width="0.9" stroke-dasharray="14 3"/><circle cx="703.3" cy="762.4" r="7.6" fill="#e6bc2e"/><circle cx="703.3" cy="762.4" r="6.0" fill="#07101e"/><path d="M700.3 761.4H702.3M704.3 759.4V765.4M706.3 760.4V764.4" stroke="#8a909c" stroke-width="1"/><path d="M709.8 756.4V768.4" stroke="#f2d4dc" stroke-width="1.3" opacity="0.55" stroke-dasharray="2 1"/><ellipse cx="703.3" cy="799.7" rx="11.0" ry="13.0" fill="#c83434"/><ellipse cx="703.3" cy="799.7" rx="12.0" ry="14.0" fill="none" stroke="#120a14" stroke-width="2.2" stroke-dasharray="17.95 2.5" stroke-dashoffset="19.20"/><ellipse cx="703.3" cy="799.7" rx="8.8" ry="10.8" fill="none" stroke="#120a14" stroke-width="0.8" stroke-dasharray="1.3 1.3"/><circle cx="703.3" cy="799.7" r="7.6" fill="#e6bc2e"/><circle cx="703.3" cy="799.7" r="6.0" fill="#07101e"/><path d="M700.3 798.7H702.3M704.3 796.7V802.7M706.3 797.7V801.7" stroke="#8a909c" stroke-width="1"/><path d="M709.8 793.7V805.7" stroke="#f2d4dc" stroke-width="1.3" opacity="0.55" stroke-dasharray="2 1"/><ellipse cx="731.8" cy="762.4" rx="11.0" ry="13.0" fill="#c83434"/><ellipse cx="731.8" cy="762.4" rx="12.0" ry="14.0" fill="none" stroke="#120a14" stroke-width="2.2" stroke-dasharray="17.95 2.5" stroke-dashoffset="19.20"/><ellipse cx="731.8" cy="762.4" rx="8.8" ry="10.8" fill="none" stroke="#120a14" stroke-width="0.8" stroke-dasharray="1.3 1.3"/><circle cx="731.8" cy="762.4" r="7.6" fill="#e6bc2e"/><circle cx="731.8" cy="762.4" r="6.0" fill="#07101e"/><path d="M728.8 761.4H730.8M732.8 759.4V765.4M734.8 760.4V764.4" stroke="#8a909c" stroke-width="1"/><path d="M738.3 756.4V768.4" stroke="#f2d4dc" stroke-width="1.3" opacity="0.55" stroke-dasharray="2 1"/><ellipse cx="731.8" cy="799.7" rx="11.0" ry="13.0" fill="#c83434"/><ellipse cx="731.8" cy="799.7" rx="12.0" ry="14.0" fill="none" stroke="#120a14" stroke-width="2.2" stroke-dasharray="17.95 2.5" stroke-dashoffset="19.20"/><ellipse cx="731.8" cy="799.7" rx="8.8" ry="10.8" fill="none" stroke="#120a14" stroke-width="0.8" stroke-dasharray="1.3 1.3"/><circle cx="731.8" cy="799.7" r="7.6" fill="#e6bc2e"/><circle cx="731.8" cy="799.7" r="6.0" fill="#07101e"/><path d="M728.8 798.7H730.8M732.8 796.7V802.7M734.8 797.7V801.7" stroke="#8a909c" stroke-width="1"/><path d="M738.3 793.7V805.7" stroke="#f2d4dc" stroke-width="1.3" opacity="0.55" stroke-dasharray="2 1"/><ellipse cx="760.3" cy="762.4" rx="11.0" ry="13.0" fill="#c83434"/><ellipse cx="760.3" cy="762.4" rx="12.0" ry="14.0" fill="none" stroke="#120a14" stroke-width="2.2" stroke-dasharray="17.95 2.5" stroke-dashoffset="19.20"/><ellipse cx="760.3" cy="762.4" rx="8.8" ry="10.8" fill="none" stroke="#120a14" stroke-width="0.8" stroke-dasharray="1.3 1.3"/><circle cx="760.3" cy="762.4" r="7.6" fill="#e6bc2e"/><circle cx="760.3" cy="762.4" r="6.0" fill="#07101e"/><path d="M757.3 761.4H759.3M761.3 759.4V765.4M763.3 760.4V764.4" stroke="#8a909c" stroke-width="1"/><path d="M766.8 756.4V768.4" stroke="#f2d4dc" stroke-width="1.3" opacity="0.55" stroke-dasharray="2 1"/><ellipse cx="760.3" cy="799.7" rx="11.0" ry="13.0" fill="#c83434"/><ellipse cx="760.3" cy="799.7" rx="12.0" ry="14.0" fill="none" stroke="#120a14" stroke-width="2.2" stroke-dasharray="17.95 2.5" stroke-dashoffset="19.20"/><ellipse cx="760.3" cy="799.7" rx="8.8" ry="10.8" fill="none" stroke="#120a14" stroke-width="0.8" stroke-dasharray="1.3 1.3"/><circle cx="760.3" cy="799.7" r="7.6" fill="#e6bc2e"/><circle cx="760.3" cy="799.7" r="6.0" fill="#07101e"/><path d="M757.3 798.7H759.3M761.3 796.7V802.7M763.3 797.7V801.7" stroke="#8a909c" stroke-width="1"/><path d="M766.8 793.7V805.7" stroke="#f2d4dc" stroke-width="1.3" opacity="0.55" stroke-dasharray="2 1"/><rect x="810.4" y="743.9" width="100.0" height="82.30000000000007" fill="none" stroke="#ff2ad4" stroke-width="1" /><path d="M812.9 747.4H906.9V815.7H866.9V823.7H841.9V815.7H812.9Z" fill="none" stroke="#e69468" stroke-width="1"/><text x="860.9" y="833.7" font-size="10" fill="#e0946c" text-anchor="middle" font-family="Liberation Mono">DIST</text><rect x="819.1" y="747.6" width="25.6" height="29.6" rx="3" fill="#120a14"/><rect x="820.9" y="749.4" width="22" height="26" rx="1.5" fill="#c83434"/><rect x="823.4" y="751.9" width="17" height="21" fill="none" stroke="#120a14" stroke-width="0.9" stroke-dasharray="14 3"/><circle cx="831.9" cy="762.4" r="7.6" fill="#e6bc2e"/><circle cx="831.9" cy="762.4" r="6.0" fill="#07101e"/><path d="M828.9 761.4H830.9M832.9 759.4V765.4M834.9 760.4V764.4" stroke="#8a909c" stroke-width="1"/><path d="M838.4 756.4V768.4" stroke="#f2d4dc" stroke-width="1.3" opacity="0.55" stroke-dasharray="2 1"/><ellipse cx="831.9" cy="799.7" rx="11.0" ry="13.0" fill="#c83434"/><ellipse cx="831.9" cy="799.7" rx="12.0" ry="14.0" fill="none" stroke="#120a14" stroke-width="2.2" stroke-dasharray="17.95 2.5" stroke-dashoffset="19.20"/><ellipse cx="831.9" cy="799.7" rx="8.8" ry="10.8" fill="none" stroke="#120a14" stroke-width="0.8" stroke-dasharray="1.3 1.3"/><circle cx="831.9" cy="799.7" r="7.6" fill="#e6bc2e"/><circle cx="831.9" cy="799.7" r="6.0" fill="#07101e"/><path d="M828.9 798.7H830.9M832.9 796.7V802.7M834.9 797.7V801.7" stroke="#8a909c" stroke-width="1"/><path d="M838.4 793.7V805.7" stroke="#f2d4dc" stroke-width="1.3" opacity="0.55" stroke-dasharray="2 1"/><ellipse cx="860.4" cy="762.4" rx="11.0" ry="13.0" fill="#c83434"/><ellipse cx="860.4" cy="762.4" rx="12.0" ry="14.0" fill="none" stroke="#120a14" stroke-width="2.2" stroke-dasharray="17.95 2.5" stroke-dashoffset="19.20"/><ellipse cx="860.4" cy="762.4" rx="8.8" ry="10.8" fill="none" stroke="#120a14" stroke-width="0.8" stroke-dasharray="1.3 1.3"/><circle cx="860.4" cy="762.4" r="7.6" fill="#e6bc2e"/><circle cx="860.4" cy="762.4" r="6.0" fill="#07101e"/><path d="M857.4 761.4H859.4M861.4 759.4V765.4M863.4 760.4V764.4" stroke="#8a909c" stroke-width="1"/><path d="M866.9 756.4V768.4" stroke="#f2d4dc" stroke-width="1.3" opacity="0.55" stroke-dasharray="2 1"/><ellipse cx="860.4" cy="799.7" rx="11.0" ry="13.0" fill="#c83434"/><ellipse cx="860.4" cy="799.7" rx="12.0" ry="14.0" fill="none" stroke="#120a14" stroke-width="2.2" stroke-dasharray="17.95 2.5" stroke-dashoffset="19.20"/><ellipse cx="860.4" cy="799.7" rx="8.8" ry="10.8" fill="none" stroke="#120a14" stroke-width="0.8" stroke-dasharray="1.3 1.3"/><circle cx="860.4" cy="799.7" r="7.6" fill="#e6bc2e"/><circle cx="860.4" cy="799.7" r="6.0" fill="#07101e"/><path d="M857.4 798.7H859.4M861.4 796.7V802.7M863.4 797.7V801.7" stroke="#8a909c" stroke-width="1"/><path d="M866.9 793.7V805.7" stroke="#f2d4dc" stroke-width="1.3" opacity="0.55" stroke-dasharray="2 1"/><ellipse cx="888.9" cy="762.4" rx="11.0" ry="13.0" fill="#c83434"/><ellipse cx="888.9" cy="762.4" rx="12.0" ry="14.0" fill="none" stroke="#120a14" stroke-width="2.2" stroke-dasharray="17.95 2.5" stroke-dashoffset="19.20"/><ellipse cx="888.9" cy="762.4" rx="8.8" ry="10.8" fill="none" stroke="#120a14" stroke-width="0.8" stroke-dasharray="1.3 1.3"/><circle cx="888.9" cy="762.4" r="7.6" fill="#e6bc2e"/><circle cx="888.9" cy="762.4" r="6.0" fill="#07101e"/><path d="M885.9 761.4H887.9M889.9 759.4V765.4M891.9 760.4V764.4" stroke="#8a909c" stroke-width="1"/><path d="M895.4 756.4V768.4" stroke="#f2d4dc" stroke-width="1.3" opacity="0.55" stroke-dasharray="2 1"/><ellipse cx="888.9" cy="799.7" rx="11.0" ry="13.0" fill="#c83434"/><ellipse cx="888.9" cy="799.7" rx="12.0" ry="14.0" fill="none" stroke="#120a14" stroke-width="2.2" stroke-dasharray="17.95 2.5" stroke-dashoffset="19.20"/><ellipse cx="888.9" cy="799.7" rx="8.8" ry="10.8" fill="none" stroke="#120a14" stroke-width="0.8" stroke-dasharray="1.3 1.3"/><circle cx="888.9" cy="799.7" r="7.6" fill="#e6bc2e"/><circle cx="888.9" cy="799.7" r="6.0" fill="#07101e"/><path d="M885.9 798.7H887.9M889.9 796.7V802.7M891.9 797.7V801.7" stroke="#8a909c" stroke-width="1"/><path d="M895.4 793.7V805.7" stroke="#f2d4dc" stroke-width="1.3" opacity="0.55" stroke-dasharray="2 1"/><circle cx="617" cy="393" r="5.5" fill="#120a14"/><rect x="615.5" y="391.5" width="3" height="3" fill="#e6bc2e"/><circle cx="653.9" cy="393" r="5.5" fill="#120a14"/><rect x="652.4" y="391.5" width="3" height="3" fill="#e6bc2e"/><circle cx="670.3" cy="730.8" r="5.5" fill="#120a14"/><rect x="668.8" y="729.3" width="3" height="3" fill="#e6bc2e"/><circle cx="799.8" cy="730.8" r="5.5" fill="#120a14"/><rect x="798.3" y="729.3" width="3" height="3" fill="#e6bc2e"/><circle cx="660.8" cy="760.8" r="5.5" fill="#120a14"/><rect x="659.3" y="759.3" width="3" height="3" fill="#e6bc2e"/><circle cx="789.6" cy="760.7" r="5.5" fill="#120a14"/><rect x="788.1" y="759.2" width="3" height="3" fill="#e6bc2e"/><rect x="418.5" y="194.5" width="506" height="673" fill="none" stroke="#e03a3a" stroke-width="1.2"/><rect x="420.5" y="196.5" width="502" height="669" fill="none" stroke="url(#hatch)" stroke-width="3"/><path d="M297 676.5H377M337.5 636V716" stroke="#aab0ba" stroke-width="1"/><path d="M1005.5 969V943.5H1281" stroke="#d070c0" stroke-width="1" fill="none"/></svg></div>
<div style="position:absolute;left:58px;top:139px;width:30px;height:30px;border:1px solid #3d6496;background:#131a26;box-sizing:border-box"></div><div style="position:absolute;left:58px;top:299px;width:30px;height:30px;border:1px solid #3d6496;background:#131a26;box-sizing:border-box"></div><div style="position:absolute;left:58px;top:413px;width:30px;height:30px;border:1px solid #3d6496;background:#131a26;box-sizing:border-box"></div><div style="position:absolute;left:58px;top:559px;width:30px;height:30px;border:1px solid #3d6496;background:#131a26;box-sizing:border-box"></div><div style="position:absolute;left:58px;top:737px;width:30px;height:30px;border:1px solid #3d6496;background:#131a26;box-sizing:border-box"></div><svg style="position:absolute;left:61px;top:142px;overflow:visible" width="24" height="24" viewBox="0 0 24 24" ><circle cx="3" cy="3" r="1.9" fill="#dcd2dc"/><circle cx="3" cy="9" r="1.9" fill="#dcd2dc"/><circle cx="3" cy="15" r="1.9" fill="#dcd2dc"/><circle cx="3" cy="21" r="1.9" fill="#dcd2dc"/><circle cx="9" cy="3" r="1.9" fill="#dcd2dc"/><circle cx="9" cy="9" r="1.9" fill="#dcd2dc"/><circle cx="9" cy="15" r="1.9" fill="#dcd2dc"/><circle cx="9" cy="21" r="1.9" fill="#dcd2dc"/><circle cx="15" cy="3" r="1.9" fill="#dcd2dc"/><circle cx="15" cy="9" r="1.9" fill="#dcd2dc"/><circle cx="15" cy="15" r="1.9" fill="#dcd2dc"/><circle cx="15" cy="21" r="1.9" fill="#dcd2dc"/><circle cx="21" cy="3" r="1.9" fill="#dcd2dc"/><circle cx="21" cy="9" r="1.9" fill="#dcd2dc"/><circle cx="21" cy="15" r="1.9" fill="#dcd2dc"/><circle cx="21" cy="21" r="1.9" fill="#dcd2dc"/></svg><svg style="position:absolute;left:61px;top:174px;overflow:visible" width="24" height="24" viewBox="0 0 24 24" ><circle cx="3" cy="3" r="1.4" fill="#dcd2dc"/><circle cx="8" cy="3" r="1.4" fill="#dcd2dc"/><circle cx="13" cy="3" r="1.4" fill="#dcd2dc"/><circle cx="18" cy="3" r="1.4" fill="#dcd2dc"/><circle cx="3" cy="8" r="1.4" fill="#dcd2dc"/><circle cx="8" cy="8" r="1.4" fill="#dcd2dc"/><circle cx="13" cy="8" r="1.4" fill="#dcd2dc"/><circle cx="3" cy="13" r="1.4" fill="#dcd2dc"/><circle cx="8" cy="13" r="1.4" fill="#dcd2dc"/><circle cx="3" cy="18" r="1.4" fill="#dcd2dc"/><circle cx="13.4" cy="13.4" r="0.7" fill="#aaa"/><circle cx="16.0" cy="10.8" r="0.7" fill="#aaa"/><circle cx="16.0" cy="13.4" r="0.7" fill="#aaa"/><circle cx="16.0" cy="16.0" r="0.7" fill="#aaa"/><circle cx="18.6" cy="8.2" r="0.7" fill="#aaa"/><circle cx="18.6" cy="10.8" r="0.7" fill="#aaa"/><circle cx="18.6" cy="13.4" r="0.7" fill="#aaa"/><circle cx="18.6" cy="16.0" r="0.7" fill="#aaa"/><circle cx="18.6" cy="18.6" r="0.7" fill="#aaa"/><circle cx="21.2" cy="5.6" r="0.7" fill="#aaa"/><circle cx="21.2" cy="8.2" r="0.7" fill="#aaa"/><circle cx="21.2" cy="10.8" r="0.7" fill="#aaa"/><circle cx="21.2" cy="13.4" r="0.7" fill="#aaa"/><circle cx="21.2" cy="16.0" r="0.7" fill="#aaa"/><circle cx="21.2" cy="18.6" r="0.7" fill="#aaa"/><circle cx="21.2" cy="21.2" r="0.7" fill="#aaa"/><circle cx="23.8" cy="3.0" r="0.7" fill="#aaa"/><circle cx="23.8" cy="5.6" r="0.7" fill="#aaa"/><circle cx="23.8" cy="8.2" r="0.7" fill="#aaa"/><circle cx="23.8" cy="10.8" r="0.7" fill="#aaa"/><circle cx="23.8" cy="13.4" r="0.7" fill="#aaa"/><circle cx="23.8" cy="16.0" r="0.7" fill="#aaa"/><circle cx="23.8" cy="18.6" r="0.7" fill="#aaa"/><circle cx="23.8" cy="21.2" r="0.7" fill="#aaa"/><circle cx="23.8" cy="23.8" r="0.7" fill="#aaa"/><path d="M1 23L23 1" stroke="#dcd2dc" stroke-width="1.2"/></svg><svg style="position:absolute;left:61px;top:206px;overflow:visible" width="24" height="24" viewBox="0 0 24 24" ><path d="M2 1V22H23" stroke="#dcd2dc" stroke-width="1.2" fill="none"/><path d="M2 22L20 4" stroke="#dcd2dc" stroke-width="1.2"/><circle cx="20" cy="3" r="2" fill="#ee4f68"/><text x="5" y="10" font-size="8" fill="#dcd2dc" font-family="Liberation Sans">r</text><text x="14" y="20" font-size="8" font-style="italic" fill="#dcd2dc" font-family="Liberation Sans">θ</text></svg><svg style="position:absolute;left:61px;top:238px;overflow:visible" width="24" height="24" viewBox="0 0 24 24" ><text x="12" y="11" font-size="10" fill="#dcd2dc" text-anchor="middle" font-family="Liberation Sans">in</text><path d="M2 17H22M2 17L5 14.5M2 17L5 19.5M22 17L19 14.5M22 17L19 19.5" stroke="#dcd2dc" stroke-width="1.3" fill="none"/></svg><svg style="position:absolute;left:61px;top:271px;overflow:visible" width="24" height="24" viewBox="0 0 24 24" ><text x="12" y="11" font-size="10" fill="#dcd2dc" text-anchor="middle" font-family="Liberation Sans">mil</text><path d="M2 17H22M2 17L5 14.5M2 17L5 19.5M22 17L19 14.5M22 17L19 19.5" stroke="#dcd2dc" stroke-width="1.3" fill="none"/></svg><svg style="position:absolute;left:61px;top:302px;overflow:visible" width="24" height="24" viewBox="0 0 24 24" ><text x="12" y="11" font-size="10" fill="#dcd2dc" text-anchor="middle" font-family="Liberation Sans">mm</text><path d="M2 17H22M2 17L5 14.5M2 17L5 19.5M22 17L19 14.5M22 17L19 19.5" stroke="#dcd2dc" stroke-width="1.3" fill="none"/></svg><svg style="position:absolute;left:61px;top:335px;overflow:visible" width="24" height="24" viewBox="0 0 24 24" ><path d="M0 12H24M12 0V24" stroke="#dcd2dc" stroke-width="0.8"/><rect x="9" y="10" width="6" height="4" fill="#2fa6e6"/><rect x="10.5" y="7" width="3" height="10" fill="#2fa6e6"/><path d="M12 13L12 23L14.5 20.5L17 24L18.5 23L16 19.5L19 19Z" fill="#dcd2dc"/></svg><div style="position:absolute;left:62px;top:366px;width:22px;height:1px;background:#4a4a4a"></div><svg style="position:absolute;left:61px;top:375px;overflow:visible" width="24" height="24" viewBox="0 0 24 24" ><path d="M3 2V23M0 20H24M3 20L22 4M3 11A9 9 0 0 1 11 20" stroke="#dcd2dc" stroke-width="1.5" fill="none"/></svg><div style="position:absolute;left:62px;top:407px;width:22px;height:1px;background:#4a4a4a"></div><svg style="position:absolute;left:61px;top:416px;overflow:visible" width="24" height="24" viewBox="0 0 24 24" ><path d="M4 4L20 20M19 7L5 19M4 4L20 9" stroke="#dcd2dc" stroke-width="1.3"/><circle cx="4" cy="4" r="2.5" fill="#dcd2dc"/><circle cx="19" cy="8" r="2.5" fill="#dcd2dc"/><circle cx="5" cy="19" r="2.5" fill="#dcd2dc"/><circle cx="20" cy="19" r="2.5" fill="#dcd2dc"/></svg><svg style="position:absolute;left:61px;top:448px;overflow:visible" width="24" height="24" viewBox="0 0 24 24" ><path d="M1 23L11 13M13 11L23 1M5 21L19 7A5 5 0 0 1 9 22" stroke="#dcd2dc" stroke-width="1.2" fill="none"/><circle cx="5" cy="21" r="2.2" fill="#dcd2dc"/><circle cx="19" cy="7" r="2.2" fill="#dcd2dc"/><circle cx="22" cy="17" r="2" fill="#dcd2dc"/><circle cx="10" cy="8" r="2" fill="#dcd2dc"/></svg><div style="position:absolute;left:62px;top:480px;width:22px;height:1px;background:#4a4a4a"></div><svg style="position:absolute;left:61px;top:489px;overflow:visible" width="24" height="24" viewBox="0 0 24 24" ><path d="M1 1L8 8H16L23 16" stroke="#ee4f68" stroke-width="2" fill="none"/><path d="M1 9L8 16H16L23 23" stroke="#dcd2dc" stroke-width="1.5" fill="none" opacity="0.7"/><path d="M1 5L7 11" stroke="#dcd2dc" stroke-width="1.2"/><circle cx="9" cy="12" r="3" fill="#f29a1a"/><circle cx="9" cy="12" r="1.2" fill="#fff"/></svg><svg style="position:absolute;left:61px;top:522px;overflow:visible" width="24" height="24" viewBox="0 0 24 24" ><path d="M6 23V10A6 6 0 0 1 18 10V23M10 23V12A4 4 0 0 1 22 12" stroke="#888" stroke-width="1.5" fill="none"/><path d="M2 11H24" stroke="#3a7aa6" stroke-width="2.5"/><path d="M6 12V23" stroke="#c04a5a" stroke-width="2.5"/><circle cx="6" cy="11" r="3" fill="#a06a40"/></svg><div style="position:absolute;left:62px;top:553px;width:22px;height:1px;background:#4a4a4a"></div><svg style="position:absolute;left:61px;top:562px;overflow:visible" width="24" height="24" viewBox="0 0 24 24" ><path d="M2 10H10V3H21V21H2Z" fill="#2fa6e6"/><circle cx="16" cy="12" r="3" fill="#131a26" stroke="#eee" stroke-width="1.2"/><path d="M16 12H22" stroke="#eee" stroke-width="1.5"/></svg><svg style="position:absolute;left:61px;top:594px;overflow:visible" width="24" height="24" viewBox="0 0 24 24" ><path d="M2 11H10V3H21V21H2Z" fill="none" stroke="#2fa6e6" stroke-width="1.2" stroke-dasharray="2 1.5"/><circle cx="16" cy="12" r="1.8" fill="#eee"/><path d="M16 12H22" stroke="#eee" stroke-width="1.5"/></svg><div style="position:absolute;left:62px;top:626px;width:22px;height:1px;background:#4a4a4a"></div><svg style="position:absolute;left:61px;top:634px;overflow:visible" width="24" height="24" viewBox="0 0 24 24" ><rect x="1" y="6" width="22" height="12" fill="none" stroke="#dcd2dc" stroke-width="1.3"/><path d="M4 2h4v5h-4zM10 2h4v5h-4zM16 2h4v5h-4z" fill="#2fa6e6"/><path d="M4 17h4v5h-4zM10 17h4v5h-4zM16 17h4v5h-4z" fill="none" stroke="#2fa6e6" stroke-width="1.2"/><path d="M1 23L23 1" stroke="#dcd2dc" stroke-width="1.2"/></svg><svg style="position:absolute;left:61px;top:667px;overflow:visible" width="24" height="24" viewBox="0 0 24 24" ><circle cx="12" cy="12" r="8" fill="none" stroke="#888" stroke-width="1.5"/><path d="M12 2A10 10 0 1 0 12 22A10 10 0 1 1 12 2Z" fill="#f29a1a"/><circle cx="12" cy="12" r="9.5" fill="#f29a1a"/><circle cx="12" cy="12" r="5" fill="none" stroke="#888" stroke-width="1.5"/><path d="M12 7A5 5 0 1 0 12 17" fill="#2b2b2b"/><path d="M1 23L23 1" stroke="#dcd2dc" stroke-width="1.2"/></svg><svg style="position:absolute;left:61px;top:699px;overflow:visible" width="24" height="24" viewBox="0 0 24 24" ><path d="M1 12H23" stroke="#2fa6e6" stroke-width="3"/><path d="M10 1V23M14 1V23" stroke="#ee4f68" stroke-width="1.5"/><path d="M10 1h4v12h-4z" fill="#ee4f68"/><path d="M1 23L23 1" stroke="#dcd2dc" stroke-width="1.2"/></svg><div style="position:absolute;left:62px;top:732px;width:22px;height:1px;background:#4a4a4a"></div><svg style="position:absolute;left:61px;top:740px;overflow:visible" width="24" height="24" viewBox="0 0 24 24" ><path d="M12 11L22 16L12 22L2 16Z" fill="#f29a1a"/><path d="M12 7L22 12L12 18L2 12Z" fill="#e8e8f0"/><path d="M12 1L22 7L12 13L2 7Z" fill="#2fa6e6"/></svg><svg style="position:absolute;left:61px;top:772px;overflow:visible" width="24" height="24" viewBox="0 0 24 24" ><path d="M6 6L20 20" stroke="#2fa6e6" stroke-width="3.2" stroke-linecap="round"/><path d="M9 3A5 5 0 1 0 3 9L5.5 6.5L5 5L6.5 4.5Z" fill="#2fa6e6"/><circle cx="5.5" cy="5.5" r="5" fill="#2fa6e6"/><path d="M5 1L8 4L4 8L1 5" fill="#2c2c2c"/><path d="M21 3L15 9" stroke="#dcd2dc" stroke-width="4" stroke-linecap="round"/><path d="M15 9L3 21" stroke="#dcd2dc" stroke-width="1.6"/></svg>
<div style="position:absolute;left:1284px;top:139px;width:30px;height:30px;border:1px solid #3d6496;background:#131a26;box-sizing:border-box"></div><svg style="position:absolute;left:1287px;top:142px;overflow:visible" width="24" height="24" viewBox="0 0 24 24" ><path d="M7 3L7 19L11 15L14 22L17 21L14 14L19 14Z" fill="#dcd2dc"/></svg><svg style="position:absolute;left:1287px;top:175px;overflow:visible" width="24" height="24" viewBox="0 0 24 24" ><path d="M1 1L23 23M23 1L1 23" stroke="#dcd2dc" stroke-width="1.2"/><circle cx="12" cy="12" r="3" fill="#fff"/></svg><div style="position:absolute;left:1288px;top:206px;width:22px;height:1px;background:#4a4a4a"></div><svg style="position:absolute;left:1287px;top:215px;overflow:visible" width="24" height="24" viewBox="0 0 24 24" ><path d="M2 6H22V18H2V14A2 2 0 0 0 2 10Z" fill="none" stroke="#dcd2dc" stroke-width="1.3"/><path d="M4 2h4v6h-4zM10 2h4v6h-4zM16 2h4v6h-4zM4 16h4v6h-4zM10 16h4v6h-4zM16 16h4v6h-4z" fill="#2fa6e6"/></svg><svg style="position:absolute;left:1287px;top:248px;overflow:visible" width="24" height="24" viewBox="0 0 24 24" ><path d="M1 21L7 10H15L21 2" stroke="#2fa6e6" stroke-width="2.2" fill="none"/><path d="M24 16V24H16Z" fill="#eee"/></svg><svg style="position:absolute;left:1287px;top:280px;overflow:visible" width="24" height="24" viewBox="0 0 24 24" ><path d="M1 13C3 7 5 7 6 13S9 20 10 13S13 5 14 12S17 20 18 13S21 9 23 12" stroke="#2fa6e6" stroke-width="2" fill="none"/><path d="M24 16V24H16Z" fill="#eee"/></svg><svg style="position:absolute;left:1287px;top:311px;overflow:visible" width="24" height="24" viewBox="0 0 24 24" ><circle cx="12" cy="12" r="7.5" fill="#f29a1a"/><circle cx="12" cy="12" r="3" fill="#eee"/></svg><svg style="position:absolute;left:1287px;top:343px;overflow:visible" width="24" height="24" viewBox="0 0 24 24" ><path d="M2 10H10V3H21V21H2Z" fill="#2fa6e6"/><circle cx="16" cy="12" r="3" fill="#2b2b2b" stroke="#eee" stroke-width="1.2"/><path d="M16 12H22" stroke="#eee" stroke-width="1.5"/></svg><svg style="position:absolute;left:1287px;top:375px;overflow:visible" width="24" height="24" viewBox="0 0 24 24" ><path d="M2 12H10V2H22V22H2Z" fill="#555" stroke="#dcd2dc" stroke-width="1.3"/><path d="M4 20L14 10M8 22L20 10M14 22L22 14M12 8L20 2M3 16L8 12" stroke="#dcd2dc" stroke-width="2"/></svg><div style="position:absolute;left:1288px;top:407px;width:22px;height:1px;background:#4a4a4a"></div><svg style="position:absolute;left:1287px;top:416px;overflow:visible" width="24" height="24" viewBox="0 0 24 24" ><path d="M2 21L21 3" stroke="#dcd2dc" stroke-width="1.8"/></svg><svg style="position:absolute;left:1287px;top:448px;overflow:visible" width="24" height="24" viewBox="0 0 24 24" ><path d="M3 22A18 18 0 0 1 21 3" stroke="#dcd2dc" stroke-width="1.8" fill="none"/></svg><svg style="position:absolute;left:1287px;top:480px;overflow:visible" width="24" height="24" viewBox="0 0 24 24" ><rect x="3" y="3" width="18" height="18" fill="#777" stroke="#dcd2dc" stroke-width="1.8"/></svg><svg style="position:absolute;left:1287px;top:512px;overflow:visible" width="24" height="24" viewBox="0 0 24 24" ><circle cx="12" cy="12" r="9.5" fill="#777" stroke="#dcd2dc" stroke-width="1.8"/></svg><svg style="position:absolute;left:1287px;top:544px;overflow:visible" width="24" height="24" viewBox="0 0 24 24" ><path d="M3 3L21 8V16L3 22L9 12Z" fill="#777" stroke="#dcd2dc" stroke-width="1.8" stroke-linejoin="round"/></svg><svg style="position:absolute;left:1287px;top:576px;overflow:visible" width="24" height="24" viewBox="0 0 24 24" ><path d="M5 21C2 15 6 12 12 12S22 8 19 2" stroke="#dcd2dc" stroke-width="1.5" fill="none"/><path d="M1 12H23" stroke="#2fa6e6" stroke-width="1.5"/><circle cx="3" cy="12" r="2" fill="#2fa6e6"/><circle cx="21" cy="12" r="2" fill="#2fa6e6"/><circle cx="12" cy="12" r="1.5" fill="#fff"/></svg><svg style="position:absolute;left:1287px;top:608px;overflow:visible" width="24" height="24" viewBox="0 0 24 24" ><rect x="2" y="2" width="20" height="20" rx="3" fill="#dcd2dc"/><rect x="4" y="4" width="16" height="16" fill="#888"/><path d="M4 18L10 10L14 15L16 13L20 18Z" fill="#dcd2dc"/><circle cx="15" cy="8" r="2" fill="#dcd2dc"/></svg><svg style="position:absolute;left:1287px;top:640px;overflow:visible" width="24" height="24" viewBox="0 0 24 24" ><path d="M3 3H21V7M3 3V7M12 3V22M8 22H16" stroke="#dcd2dc" stroke-width="3" fill="none"/></svg><svg style="position:absolute;left:1287px;top:672px;overflow:visible" width="24" height="24" viewBox="0 0 24 24" ><rect x="2" y="3" width="20" height="18" fill="#777" stroke="#dcd2dc" stroke-width="1.8"/><path d="M6 8H18M6 12H18M6 16H14" stroke="#dcd2dc" stroke-width="1.3"/></svg><svg style="position:absolute;left:1287px;top:704px;overflow:visible" width="24" height="24" viewBox="0 0 24 24" ><rect x="1" y="1" width="22" height="22" fill="#666" stroke="#dcd2dc" stroke-width="1.5"/><path d="M1 7H23M1 12H23M1 17H23M8 1V23M15 1V23" stroke="#dcd2dc" stroke-width="1.3"/></svg><svg style="position:absolute;left:1287px;top:736px;overflow:visible" width="24" height="24" viewBox="0 0 24 24" ><path d="M4 2H22" stroke="#dcd2dc" stroke-width="1.2"/><circle cx="4" cy="2" r="2.5" fill="#2fa6e6"/><path d="M17 4V20M15 6L17 3L19 6M15 18L17 21L19 18" stroke="#dcd2dc" stroke-width="1" fill="none"/><path d="M9 22H24" stroke="#dcd2dc" stroke-width="1.2"/><circle cx="10" cy="22" r="2.5" fill="#2fa6e6"/><path d="M24 18V26H18Z" fill="#eee"/></svg><svg style="position:absolute;left:1287px;top:768px;overflow:visible" width="24" height="24" viewBox="0 0 24 24" ><path d="M3 1L3 17L7 13L10 20L13 19L10 12L16 12Z" fill="#dcd2dc"/><circle cx="16" cy="17" r="6" fill="#ee4f68"/><path d="M13.5 14.5L18.5 19.5M18.5 14.5L13.5 19.5" stroke="#fff" stroke-width="1.8"/></svg><div style="position:absolute;left:1288px;top:800px;width:22px;height:1px;background:#4a4a4a"></div><svg style="position:absolute;left:1287px;top:809px;overflow:visible" width="24" height="24" viewBox="0 0 24 24" ><circle cx="2" cy="2" r="1.3" fill="#dcd2dc"/><circle cx="2" cy="7" r="1.3" fill="#dcd2dc"/><circle cx="2" cy="12" r="1.3" fill="#dcd2dc"/><circle cx="2" cy="17" r="1.3" fill="#dcd2dc"/><circle cx="2" cy="22" r="1.3" fill="#dcd2dc"/><circle cx="7" cy="2" r="1.3" fill="#dcd2dc"/><circle cx="7" cy="7" r="1.3" fill="#dcd2dc"/><circle cx="7" cy="12" r="1.3" fill="#dcd2dc"/><circle cx="7" cy="17" r="1.3" fill="#dcd2dc"/><circle cx="7" cy="22" r="1.3" fill="#dcd2dc"/><circle cx="12" cy="2" r="1.3" fill="#dcd2dc"/><circle cx="12" cy="7" r="1.3" fill="#dcd2dc"/><circle cx="12" cy="12" r="1.3" fill="#dcd2dc"/><circle cx="12" cy="17" r="1.3" fill="#dcd2dc"/><circle cx="12" cy="22" r="1.3" fill="#dcd2dc"/><circle cx="17" cy="2" r="1.3" fill="#dcd2dc"/><circle cx="17" cy="7" r="1.3" fill="#dcd2dc"/><circle cx="17" cy="12" r="1.3" fill="#dcd2dc"/><circle cx="17" cy="17" r="1.3" fill="#dcd2dc"/><circle cx="17" cy="22" r="1.3" fill="#dcd2dc"/><circle cx="22" cy="2" r="1.3" fill="#dcd2dc"/><circle cx="22" cy="7" r="1.3" fill="#dcd2dc"/><circle cx="22" cy="12" r="1.3" fill="#dcd2dc"/><circle cx="22" cy="17" r="1.3" fill="#dcd2dc"/><circle cx="22" cy="22" r="1.3" fill="#dcd2dc"/><path d="M7 4V17M2 12H14" stroke="#2fa6e6" stroke-width="2"/><path d="M24 16V24H16Z" fill="#eee"/></svg><svg style="position:absolute;left:1287px;top:841px;overflow:visible" width="24" height="24" viewBox="0 0 24 24" ><path d="M2 18L16 4L22 10L8 24Z" fill="none" stroke="#dcd2dc" stroke-width="2.2" transform="translate(0,-2)"/><path d="M7 13L9 15M10 10L12 12M13 7L15 9" stroke="#dcd2dc" stroke-width="1.5"/></svg>
<div style="position:absolute;left:1322px;top:134px;width:259px;height:862px;background:#2e2e2e"></div>
<div style="position:absolute;left:1322px;top:134px;width:259px;height:17px;background:#1e1e1e"></div><div style="position:absolute;left:1326px;top:137.2px;font-size:11.5px;line-height:11.5px;color:#e8e4e8;font-weight:normal;white-space:nowrap;">Appearance</div><div style="position:absolute;left:1323px;top:175px;width:258px;height:577px;border:1px solid #484848;border-radius:5px;background:#303030;box-sizing:border-box"></div><div style="position:absolute;left:1366px;top:164px;width:172px;height:22px;border:1px solid #555;border-radius:6px;background:#2e2e2e;box-sizing:border-box"></div><div style="position:absolute;left:1367px;top:165px;width:59px;height:20px;border-radius:5px;background:#636363"></div><div style="position:absolute;left:1488px;top:168px;width:1px;height:14px;background:#4a4a4a"></div><div style="position:absolute;left:1380px;top:168.8px;font-size:12px;line-height:12px;color:#e8e4e8;font-weight:normal;white-space:nowrap;">Layers</div><div style="position:absolute;left:1437px;top:168.8px;font-size:12px;line-height:12px;color:#e8e4e8;font-weight:normal;white-space:nowrap;">Objects</div><div style="position:absolute;left:1500px;top:168.8px;font-size:12px;line-height:12px;color:#e8e4e8;font-weight:normal;white-space:nowrap;">Nets</div><div style="position:absolute;left:1325px;top:191px;width:254px;height:18px;background:#414141"></div><svg style="position:absolute;left:1331px;top:194px;overflow:visible" width="6" height="12" viewBox="0 0 6 12" ><path d="M0 0L6 6L0 12Z" fill="#3a3af0"/></svg><div style="position:absolute;left:1342px;top:195px;width:16px;height:12px;background:#c83434"></div><svg style="position:absolute;left:1363px;top:193px;overflow:visible" width="18" height="14" viewBox="0 0 18 14" ><circle cx="9" cy="7" r="7.5" fill="#2a2a2a"/><path d="M3 7Q9 1.5 15 7Q9 12.5 3 7Z" fill="none" stroke="#d8ccd8" stroke-width="1.5"/><circle cx="9" cy="7" r="1.8" fill="none" stroke="#d8ccd8" stroke-width="1.4"/></svg><div style="position:absolute;left:1385px;top:195.0px;font-size:12.3px;line-height:12.3px;color:#e8e4e8;font-weight:normal;white-space:nowrap;">F.Cu</div><div style="position:absolute;left:1342px;top:213px;width:16px;height:12px;background:#4d7fc4"></div><svg style="position:absolute;left:1363px;top:211px;overflow:visible" width="18" height="14" viewBox="0 0 18 14" ><circle cx="9" cy="7" r="7.5" fill="#2a2a2a"/><path d="M3 7Q9 1.5 15 7Q9 12.5 3 7Z" fill="none" stroke="#d8ccd8" stroke-width="1.5"/><circle cx="9" cy="7" r="1.8" fill="none" stroke="#d8ccd8" stroke-width="1.4"/></svg><div style="position:absolute;left:1385px;top:213.0px;font-size:12.3px;line-height:12.3px;color:#e8e4e8;font-weight:normal;white-space:nowrap;">B.Cu</div><div style="position:absolute;left:1342px;top:231px;width:16px;height:12px;background:#84008a"></div><svg style="position:absolute;left:1363px;top:229px;overflow:visible" width="18" height="14" viewBox="0 0 18 14" ><circle cx="9" cy="7" r="7.5" fill="#2a2a2a"/><path d="M3 7Q9 1.5 15 7Q9 12.5 3 7Z" fill="none" stroke="#d8ccd8" stroke-width="1.5"/><circle cx="9" cy="7" r="1.8" fill="none" stroke="#d8ccd8" stroke-width="1.4"/></svg><div style="position:absolute;left:1385px;top:231.0px;font-size:12.3px;line-height:12.3px;color:#e8e4e8;font-weight:normal;white-space:nowrap;">F.Adhesive</div><div style="position:absolute;left:1342px;top:249px;width:16px;height:12px;background:#000084"></div><svg style="position:absolute;left:1363px;top:247px;overflow:visible" width="18" height="14" viewBox="0 0 18 14" ><circle cx="9" cy="7" r="7.5" fill="#2a2a2a"/><path d="M3 7Q9 1.5 15 7Q9 12.5 3 7Z" fill="none" stroke="#d8ccd8" stroke-width="1.5"/><circle cx="9" cy="7" r="1.8" fill="none" stroke="#d8ccd8" stroke-width="1.4"/></svg><div style="position:absolute;left:1385px;top:249.0px;font-size:12.3px;line-height:12.3px;color:#e8e4e8;font-weight:normal;white-space:nowrap;">B.Adhesive</div><div style="position:absolute;left:1342px;top:267px;width:16px;height:12px;background:#9a847c"></div><svg style="position:absolute;left:1363px;top:265px;overflow:visible" width="18" height="14" viewBox="0 0 18 14" ><circle cx="9" cy="7" r="7.5" fill="#2a2a2a"/><path d="M3 7Q9 1.5 15 7Q9 12.5 3 7Z" fill="none" stroke="#d8ccd8" stroke-width="1.5"/><circle cx="9" cy="7" r="1.8" fill="none" stroke="#d8ccd8" stroke-width="1.4"/></svg><div style="position:absolute;left:1385px;top:267.0px;font-size:12.3px;line-height:12.3px;color:#e8e4e8;font-weight:normal;white-space:nowrap;">F.Paste</div><div style="position:absolute;left:1342px;top:285px;width:16px;height:12px;background:#00aaaa"></div><svg style="position:absolute;left:1363px;top:283px;overflow:visible" width="18" height="14" viewBox="0 0 18 14" ><circle cx="9" cy="7" r="7.5" fill="#2a2a2a"/><path d="M3 7Q9 1.5 15 7Q9 12.5 3 7Z" fill="none" stroke="#d8ccd8" stroke-width="1.5"/><circle cx="9" cy="7" r="1.8" fill="none" stroke="#d8ccd8" stroke-width="1.4"/></svg><div style="position:absolute;left:1385px;top:285.0px;font-size:12.3px;line-height:12.3px;color:#e8e4e8;font-weight:normal;white-space:nowrap;">B.Paste</div><div style="position:absolute;left:1342px;top:303px;width:16px;height:12px;background:#f2eda1"></div><svg style="position:absolute;left:1363px;top:301px;overflow:visible" width="18" height="14" viewBox="0 0 18 14" ><circle cx="9" cy="7" r="7.5" fill="#2a2a2a"/><path d="M3 7Q9 1.5 15 7Q9 12.5 3 7Z" fill="none" stroke="#d8ccd8" stroke-width="1.5"/><circle cx="9" cy="7" r="1.8" fill="none" stroke="#d8ccd8" stroke-width="1.4"/></svg><div style="position:absolute;left:1385px;top:303.0px;font-size:12.3px;line-height:12.3px;color:#e8e4e8;font-weight:normal;white-space:nowrap;">F.Silkscreen</div><div style="position:absolute;left:1342px;top:321px;width:16px;height:12px;background:#e8b2a7"></div><svg style="position:absolute;left:1363px;top:319px;overflow:visible" width="18" height="14" viewBox="0 0 18 14" ><circle cx="9" cy="7" r="7.5" fill="#2a2a2a"/><path d="M3 7Q9 1.5 15 7Q9 12.5 3 7Z" fill="none" stroke="#d8ccd8" stroke-width="1.5"/><circle cx="9" cy="7" r="1.8" fill="none" stroke="#d8ccd8" stroke-width="1.4"/></svg><div style="position:absolute;left:1385px;top:321.0px;font-size:12.3px;line-height:12.3px;color:#e8e4e8;font-weight:normal;white-space:nowrap;">B.Silkscreen</div><svg style="position:absolute;left:1342px;top:339px;overflow:visible" width="16" height="12" viewBox="0 0 16 12" ><rect width="16" height="12" fill="#5a2a60"/><rect x="0" y="0" width="4" height="3" fill="#6e3a78"/><rect x="8" y="0" width="4" height="3" fill="#6e3a78"/><rect x="4" y="3" width="4" height="3" fill="#6e3a78"/><rect x="12" y="3" width="4" height="3" fill="#6e3a78"/><rect x="0" y="6" width="4" height="3" fill="#6e3a78"/><rect x="8" y="6" width="4" height="3" fill="#6e3a78"/><rect x="4" y="9" width="4" height="3" fill="#6e3a78"/><rect x="12" y="9" width="4" height="3" fill="#6e3a78"/></svg><svg style="position:absolute;left:1363px;top:337px;overflow:visible" width="18" height="14" viewBox="0 0 18 14" ><circle cx="9" cy="7" r="7.5" fill="#2a2a2a"/><path d="M3 7Q9 1.5 15 7Q9 12.5 3 7Z" fill="none" stroke="#d8ccd8" stroke-width="1.5"/><circle cx="9" cy="7" r="1.8" fill="none" stroke="#d8ccd8" stroke-width="1.4"/></svg><div style="position:absolute;left:1385px;top:339.0px;font-size:12.3px;line-height:12.3px;color:#e8e4e8;font-weight:normal;white-space:nowrap;">F.Mask</div><svg style="position:absolute;left:1342px;top:357px;overflow:visible" width="16" height="12" viewBox="0 0 16 12" ><rect width="16" height="12" fill="#1a5a50"/><rect x="0" y="0" width="4" height="3" fill="#2a6e62"/><rect x="8" y="0" width="4" height="3" fill="#2a6e62"/><rect x="4" y="3" width="4" height="3" fill="#2a6e62"/><rect x="12" y="3" width="4" height="3" fill="#2a6e62"/><rect x="0" y="6" width="4" height="3" fill="#2a6e62"/><rect x="8" y="6" width="4" height="3" fill="#2a6e62"/><rect x="4" y="9" width="4" height="3" fill="#2a6e62"/><rect x="12" y="9" width="4" height="3" fill="#2a6e62"/></svg><svg style="position:absolute;left:1363px;top:355px;overflow:visible" width="18" height="14" viewBox="0 0 18 14" ><circle cx="9" cy="7" r="7.5" fill="#2a2a2a"/><path d="M3 7Q9 1.5 15 7Q9 12.5 3 7Z" fill="none" stroke="#d8ccd8" stroke-width="1.5"/><circle cx="9" cy="7" r="1.8" fill="none" stroke="#d8ccd8" stroke-width="1.4"/></svg><div style="position:absolute;left:1385px;top:357.0px;font-size:12.3px;line-height:12.3px;color:#e8e4e8;font-weight:normal;white-space:nowrap;">B.Mask</div><div style="position:absolute;left:1342px;top:375px;width:16px;height:12px;background:#c2c2c2"></div><svg style="position:absolute;left:1363px;top:373px;overflow:visible" width="18" height="14" viewBox="0 0 18 14" ><circle cx="9" cy="7" r="7.5" fill="#2a2a2a"/><path d="M3 7Q9 1.5 15 7Q9 12.5 3 7Z" fill="none" stroke="#d8ccd8" stroke-width="1.5"/><circle cx="9" cy="7" r="1.8" fill="none" stroke="#d8ccd8" stroke-width="1.4"/></svg><div style="position:absolute;left:1385px;top:375.0px;font-size:12.3px;line-height:12.3px;color:#e8e4e8;font-weight:normal;white-space:nowrap;">User.Drawings</div><div style="position:absolute;left:1342px;top:393px;width:16px;height:12px;background:#5a8ee0"></div><svg style="position:absolute;left:1363px;top:391px;overflow:visible" width="18" height="14" viewBox="0 0 18 14" ><circle cx="9" cy="7" r="7.5" fill="#2a2a2a"/><path d="M3 7Q9 1.5 15 7Q9 12.5 3 7Z" fill="none" stroke="#d8ccd8" stroke-width="1.5"/><circle cx="9" cy="7" r="1.8" fill="none" stroke="#d8ccd8" stroke-width="1.4"/></svg><div style="position:absolute;left:1385px;top:393.0px;font-size:12.3px;line-height:12.3px;color:#e8e4e8;font-weight:normal;white-space:nowrap;">User.Comments</div><div style="position:absolute;left:1342px;top:411px;width:16px;height:12px;background:#b4dbd2"></div><svg style="position:absolute;left:1363px;top:409px;overflow:visible" width="18" height="14" viewBox="0 0 18 14" ><circle cx="9" cy="7" r="7.5" fill="#2a2a2a"/><path d="M3 7Q9 1.5 15 7Q9 12.5 3 7Z" fill="none" stroke="#d8ccd8" stroke-width="1.5"/><circle cx="9" cy="7" r="1.8" fill="none" stroke="#d8ccd8" stroke-width="1.4"/></svg><div style="position:absolute;left:1385px;top:411.0px;font-size:12.3px;line-height:12.3px;color:#e8e4e8;font-weight:normal;white-space:nowrap;">User.Eco1</div><div style="position:absolute;left:1342px;top:429px;width:16px;height:12px;background:#d8c852"></div><svg style="position:absolute;left:1363px;top:427px;overflow:visible" width="18" height="14" viewBox="0 0 18 14" ><circle cx="9" cy="7" r="7.5" fill="#2a2a2a"/><path d="M3 7Q9 1.5 15 7Q9 12.5 3 7Z" fill="none" stroke="#d8ccd8" stroke-width="1.5"/><circle cx="9" cy="7" r="1.8" fill="none" stroke="#d8ccd8" stroke-width="1.4"/></svg><div style="position:absolute;left:1385px;top:429.0px;font-size:12.3px;line-height:12.3px;color:#e8e4e8;font-weight:normal;white-space:nowrap;">User.Eco2</div><div style="position:absolute;left:1342px;top:447px;width:16px;height:12px;background:#d0d2cd"></div><svg style="position:absolute;left:1363px;top:445px;overflow:visible" width="18" height="14" viewBox="0 0 18 14" ><circle cx="9" cy="7" r="7.5" fill="#2a2a2a"/><path d="M3 7Q9 1.5 15 7Q9 12.5 3 7Z" fill="none" stroke="#d8ccd8" stroke-width="1.5"/><circle cx="9" cy="7" r="1.8" fill="none" stroke="#d8ccd8" stroke-width="1.4"/></svg><div style="position:absolute;left:1385px;top:447.0px;font-size:12.3px;line-height:12.3px;color:#e8e4e8;font-weight:normal;white-space:nowrap;">Edge.Cuts</div><div style="position:absolute;left:1342px;top:465px;width:16px;height:12px;background:#ff26e2"></div><svg style="position:absolute;left:1363px;top:463px;overflow:visible" width="18" height="14" viewBox="0 0 18 14" ><circle cx="9" cy="7" r="7.5" fill="#2a2a2a"/><path d="M3 7Q9 1.5 15 7Q9 12.5 3 7Z" fill="none" stroke="#d8ccd8" stroke-width="1.5"/><circle cx="9" cy="7" r="1.8" fill="none" stroke="#d8ccd8" stroke-width="1.4"/></svg><div style="position:absolute;left:1385px;top:465.0px;font-size:12.3px;line-height:12.3px;color:#e8e4e8;font-weight:normal;white-space:nowrap;">Margin</div><div style="position:absolute;left:1342px;top:483px;width:16px;height:12px;background:#ff26e2"></div><svg style="position:absolute;left:1363px;top:481px;overflow:visible" width="18" height="14" viewBox="0 0 18 14" ><circle cx="9" cy="7" r="7.5" fill="#2a2a2a"/><path d="M3 7Q9 1.5 15 7Q9 12.5 3 7Z" fill="none" stroke="#d8ccd8" stroke-width="1.5"/><circle cx="9" cy="7" r="1.8" fill="none" stroke="#d8ccd8" stroke-width="1.4"/></svg><div style="position:absolute;left:1385px;top:483.0px;font-size:12.3px;line-height:12.3px;color:#e8e4e8;font-weight:normal;white-space:nowrap;">F.Courtyard</div><div style="position:absolute;left:1342px;top:501px;width:16px;height:12px;background:#26e9ff"></div><svg style="position:absolute;left:1363px;top:499px;overflow:visible" width="18" height="14" viewBox="0 0 18 14" ><circle cx="9" cy="7" r="7.5" fill="#2a2a2a"/><path d="M3 7Q9 1.5 15 7Q9 12.5 3 7Z" fill="none" stroke="#d8ccd8" stroke-width="1.5"/><circle cx="9" cy="7" r="1.8" fill="none" stroke="#d8ccd8" stroke-width="1.4"/></svg><div style="position:absolute;left:1385px;top:501.0px;font-size:12.3px;line-height:12.3px;color:#e8e4e8;font-weight:normal;white-space:nowrap;">B.Courtyard</div><div style="position:absolute;left:1342px;top:519px;width:16px;height:12px;background:#afafaf"></div><svg style="position:absolute;left:1363px;top:517px;overflow:visible" width="18" height="14" viewBox="0 0 18 14" ><circle cx="9" cy="7" r="7.5" fill="#2a2a2a"/><path d="M3 7Q9 1.5 15 7Q9 12.5 3 7Z" fill="none" stroke="#777" stroke-width="1.5"/><circle cx="9" cy="7" r="1.8" fill="none" stroke="#777" stroke-width="1.4"/><path d="M4 12L14 2" stroke="#777" stroke-width="1.5"/></svg><div style="position:absolute;left:1385px;top:519.0px;font-size:12.3px;line-height:12.3px;color:#e8e4e8;font-weight:normal;white-space:nowrap;">F.Fab</div><div style="position:absolute;left:1342px;top:537px;width:16px;height:12px;background:#545a7e"></div><svg style="position:absolute;left:1363px;top:535px;overflow:visible" width="18" height="14" viewBox="0 0 18 14" ><circle cx="9" cy="7" r="7.5" fill="#2a2a2a"/><path d="M3 7Q9 1.5 15 7Q9 12.5 3 7Z" fill="none" stroke="#d8ccd8" stroke-width="1.5"/><circle cx="9" cy="7" r="1.8" fill="none" stroke="#d8ccd8" stroke-width="1.4"/></svg><div style="position:absolute;left:1385px;top:537.0px;font-size:12.3px;line-height:12.3px;color:#e8e4e8;font-weight:normal;white-space:nowrap;">B.Fab</div><div style="position:absolute;left:1342px;top:555px;width:16px;height:12px;background:#c2c2c2"></div><svg style="position:absolute;left:1363px;top:553px;overflow:visible" width="18" height="14" viewBox="0 0 18 14" ><circle cx="9" cy="7" r="7.5" fill="#2a2a2a"/><path d="M3 7Q9 1.5 15 7Q9 12.5 3 7Z" fill="none" stroke="#d8ccd8" stroke-width="1.5"/><circle cx="9" cy="7" r="1.8" fill="none" stroke="#d8ccd8" stroke-width="1.4"/></svg><div style="position:absolute;left:1385px;top:555.0px;font-size:12.3px;line-height:12.3px;color:#e8e4e8;font-weight:normal;white-space:nowrap;">User.1</div><div style="position:absolute;left:1342px;top:573px;width:16px;height:12px;background:#5a8ee0"></div><svg style="position:absolute;left:1363px;top:571px;overflow:visible" width="18" height="14" viewBox="0 0 18 14" ><circle cx="9" cy="7" r="7.5" fill="#2a2a2a"/><path d="M3 7Q9 1.5 15 7Q9 12.5 3 7Z" fill="none" stroke="#d8ccd8" stroke-width="1.5"/><circle cx="9" cy="7" r="1.8" fill="none" stroke="#d8ccd8" stroke-width="1.4"/></svg><div style="position:absolute;left:1385px;top:573.0px;font-size:12.3px;line-height:12.3px;color:#e8e4e8;font-weight:normal;white-space:nowrap;">User.2</div><div style="position:absolute;left:1342px;top:591px;width:16px;height:12px;background:#b4dbd2"></div><svg style="position:absolute;left:1363px;top:589px;overflow:visible" width="18" height="14" viewBox="0 0 18 14" ><circle cx="9" cy="7" r="7.5" fill="#2a2a2a"/><path d="M3 7Q9 1.5 15 7Q9 12.5 3 7Z" fill="none" stroke="#d8ccd8" stroke-width="1.5"/><circle cx="9" cy="7" r="1.8" fill="none" stroke="#d8ccd8" stroke-width="1.4"/></svg><div style="position:absolute;left:1385px;top:591.0px;font-size:12.3px;line-height:12.3px;color:#e8e4e8;font-weight:normal;white-space:nowrap;">User.3</div><div style="position:absolute;left:1342px;top:609px;width:16px;height:12px;background:#d8c852"></div><svg style="position:absolute;left:1363px;top:607px;overflow:visible" width="18" height="14" viewBox="0 0 18 14" ><circle cx="9" cy="7" r="7.5" fill="#2a2a2a"/><path d="M3 7Q9 1.5 15 7Q9 12.5 3 7Z" fill="none" stroke="#d8ccd8" stroke-width="1.5"/><circle cx="9" cy="7" r="1.8" fill="none" stroke="#d8ccd8" stroke-width="1.4"/></svg><div style="position:absolute;left:1385px;top:609.0px;font-size:12.3px;line-height:12.3px;color:#e8e4e8;font-weight:normal;white-space:nowrap;">User.4</div><svg style="position:absolute;left:1338px;top:734px;overflow:visible" width="6" height="10" viewBox="0 0 6 10" ><path d="M0 0L5 5L0 10Z" fill="#e8e4e8"/></svg><div style="position:absolute;left:1345px;top:733.3px;font-size:12.5px;line-height:12.5px;color:#e8e4e8;font-weight:normal;white-space:nowrap;">Layer Display Options</div><div style="position:absolute;left:1330px;top:757.2px;font-size:12.6px;line-height:12.6px;color:#e8e4e8;font-weight:normal;white-space:nowrap;">Presets (Ctrl+Tab):</div><div style="position:absolute;left:1330px;top:773px;width:245px;height:20px;border-radius:5px;background:#606060"></div><div style="position:absolute;left:1338px;top:783px;width:220px;height:1px;background:#7a7a7a"></div><div style="position:absolute;left:1558px;top:774px;width:16px;height:18px;border-radius:4px;background:#1f6ee6"></div><svg style="position:absolute;left:1558px;top:774px;overflow:visible" width="16" height="18" viewBox="0 0 16 18" ><path d="M5 7L8 4L11 7M5 11L8 14L11 11" stroke="#fff" stroke-width="1.5" fill="none"/></svg><div style="position:absolute;left:1330px;top:798.2px;font-size:12.6px;line-height:12.6px;color:#e8e4e8;font-weight:normal;white-space:nowrap;">Viewports (Option+Tab):</div><div style="position:absolute;left:1330px;top:814px;width:245px;height:20px;border-radius:5px;background:#606060"></div><div style="position:absolute;left:1338px;top:824px;width:220px;height:1px;background:#7a7a7a"></div><div style="position:absolute;left:1558px;top:815px;width:16px;height:18px;border-radius:4px;background:#1f6ee6"></div><svg style="position:absolute;left:1558px;top:815px;overflow:visible" width="16" height="18" viewBox="0 0 16 18" ><path d="M5 7L8 4L11 7M5 11L8 14L11 11" stroke="#fff" stroke-width="1.5" fill="none"/></svg><div style="position:absolute;left:1322px;top:847px;width:259px;height:17px;background:#1e1e1e"></div><div style="position:absolute;left:1326px;top:848.9px;font-size:11.9px;line-height:11.9px;color:#e8e4e8;font-weight:normal;white-space:nowrap;">Selection Filter</div><div style="position:absolute;left:1328px;top:870px;width:14px;height:14px;border-radius:3px;background:#1f6ee6"></div><svg style="position:absolute;left:1328px;top:870px;overflow:visible" width="14" height="14" viewBox="0 0 14 14" ><path d="M3 7L6 10.5L11 3" stroke="#fff" stroke-width="1.8" fill="none"/></svg><div style="position:absolute;left:1348px;top:871.3px;font-size:12.5px;line-height:12.5px;color:#e8e4e8;font-weight:normal;white-space:nowrap;">All items</div><div style="position:absolute;left:1428px;top:870px;width:14px;height:14px;border-radius:3px;background:#555"></div><div style="position:absolute;left:1448px;top:871.3px;font-size:12.5px;line-height:12.5px;color:#e8e4e8;font-weight:normal;white-space:nowrap;">Locked items</div><div style="position:absolute;left:1328px;top:886px;width:14px;height:14px;border-radius:3px;background:#1f6ee6"></div><svg style="position:absolute;left:1328px;top:886px;overflow:visible" width="14" height="14" viewBox="0 0 14 14" ><path d="M3 7L6 10.5L11 3" stroke="#fff" stroke-width="1.8" fill="none"/></svg><div style="position:absolute;left:1348px;top:887.3px;font-size:12.5px;line-height:12.5px;color:#e8e4e8;font-weight:normal;white-space:nowrap;">Footprints</div><div style="position:absolute;left:1428px;top:886px;width:14px;height:14px;border-radius:3px;background:#1f6ee6"></div><svg style="position:absolute;left:1428px;top:886px;overflow:visible" width="14" height="14" viewBox="0 0 14 14" ><path d="M3 7L6 10.5L11 3" stroke="#fff" stroke-width="1.8" fill="none"/></svg><div style="position:absolute;left:1448px;top:887.3px;font-size:12.5px;line-height:12.5px;color:#e8e4e8;font-weight:normal;white-space:nowrap;">Text</div><div style="position:absolute;left:1328px;top:902px;width:14px;height:14px;border-radius:3px;background:#1f6ee6"></div><svg style="position:absolute;left:1328px;top:902px;overflow:visible" width="14" height="14" viewBox="0 0 14 14" ><path d="M3 7L6 10.5L11 3" stroke="#fff" stroke-width="1.8" fill="none"/></svg><div style="position:absolute;left:1348px;top:903.3px;font-size:12.5px;line-height:12.5px;color:#e8e4e8;font-weight:normal;white-space:nowrap;">Tracks</div><div style="position:absolute;left:1428px;top:902px;width:14px;height:14px;border-radius:3px;background:#1f6ee6"></div><svg style="position:absolute;left:1428px;top:902px;overflow:visible" width="14" height="14" viewBox="0 0 14 14" ><path d="M3 7L6 10.5L11 3" stroke="#fff" stroke-width="1.8" fill="none"/></svg><div style="position:absolute;left:1448px;top:903.3px;font-size:12.5px;line-height:12.5px;color:#e8e4e8;font-weight:normal;white-space:nowrap;">Vias</div><div style="position:absolute;left:1328px;top:918px;width:14px;height:14px;border-radius:3px;background:#1f6ee6"></div><svg style="position:absolute;left:1328px;top:918px;overflow:visible" width="14" height="14" viewBox="0 0 14 14" ><path d="M3 7L6 10.5L11 3" stroke="#fff" stroke-width="1.8" fill="none"/></svg><div style="position:absolute;left:1348px;top:919.3px;font-size:12.5px;line-height:12.5px;color:#e8e4e8;font-weight:normal;white-space:nowrap;">Pads</div><div style="position:absolute;left:1428px;top:918px;width:14px;height:14px;border-radius:3px;background:#1f6ee6"></div><svg style="position:absolute;left:1428px;top:918px;overflow:visible" width="14" height="14" viewBox="0 0 14 14" ><path d="M3 7L6 10.5L11 3" stroke="#fff" stroke-width="1.8" fill="none"/></svg><div style="position:absolute;left:1448px;top:919.3px;font-size:12.5px;line-height:12.5px;color:#e8e4e8;font-weight:normal;white-space:nowrap;">Graphics</div><div style="position:absolute;left:1328px;top:934px;width:14px;height:14px;border-radius:3px;background:#1f6ee6"></div><svg style="position:absolute;left:1328px;top:934px;overflow:visible" width="14" height="14" viewBox="0 0 14 14" ><path d="M3 7L6 10.5L11 3" stroke="#fff" stroke-width="1.8" fill="none"/></svg><div style="position:absolute;left:1348px;top:935.3px;font-size:12.5px;line-height:12.5px;color:#e8e4e8;font-weight:normal;white-space:nowrap;">Zones</div><div style="position:absolute;left:1428px;top:934px;width:14px;height:14px;border-radius:3px;background:#1f6ee6"></div><svg style="position:absolute;left:1428px;top:934px;overflow:visible" width="14" height="14" viewBox="0 0 14 14" ><path d="M3 7L6 10.5L11 3" stroke="#fff" stroke-width="1.8" fill="none"/></svg><div style="position:absolute;left:1448px;top:935.3px;font-size:12.5px;line-height:12.5px;color:#e8e4e8;font-weight:normal;white-space:nowrap;">Rule Areas</div><div style="position:absolute;left:1328px;top:950px;width:14px;height:14px;border-radius:3px;background:#1f6ee6"></div><svg style="position:absolute;left:1328px;top:950px;overflow:visible" width="14" height="14" viewBox="0 0 14 14" ><path d="M3 7L6 10.5L11 3" stroke="#fff" stroke-width="1.8" fill="none"/></svg><div style="position:absolute;left:1348px;top:951.3px;font-size:12.5px;line-height:12.5px;color:#e8e4e8;font-weight:normal;white-space:nowrap;">Dimensions</div><div style="position:absolute;left:1428px;top:950px;width:14px;height:14px;border-radius:3px;background:#1f6ee6"></div><svg style="position:absolute;left:1428px;top:950px;overflow:visible" width="14" height="14" viewBox="0 0 14 14" ><path d="M3 7L6 10.5L11 3" stroke="#fff" stroke-width="1.8" fill="none"/></svg><div style="position:absolute;left:1448px;top:951.3px;font-size:12.5px;line-height:12.5px;color:#e8e4e8;font-weight:normal;white-space:nowrap;">Other items</div>
<div style="position:absolute;left:67px;top:971.7px;font-size:11.5px;line-height:11.5px;color:#e8e4e8;font-weight:normal;white-space:nowrap;">Pads</div><div style="position:absolute;left:67px;top:984.2px;font-size:11.5px;line-height:11.5px;color:#e8e4e8;font-weight:normal;white-space:nowrap;">130</div><div style="position:absolute;left:123px;top:971.7px;font-size:11.5px;line-height:11.5px;color:#e8e4e8;font-weight:normal;white-space:nowrap;">Vias</div><div style="position:absolute;left:123px;top:984.2px;font-size:11.5px;line-height:11.5px;color:#e8e4e8;font-weight:normal;white-space:nowrap;">8</div><div style="position:absolute;left:176px;top:971.7px;font-size:11.5px;line-height:11.5px;color:#e8e4e8;font-weight:normal;white-space:nowrap;">Track Segments</div><div style="position:absolute;left:176px;top:984.2px;font-size:11.5px;line-height:11.5px;color:#e8e4e8;font-weight:normal;white-space:nowrap;">136</div><div style="position:absolute;left:291px;top:971.7px;font-size:11.5px;line-height:11.5px;color:#e8e4e8;font-weight:normal;white-space:nowrap;">Nets</div><div style="position:absolute;left:291px;top:984.2px;font-size:11.5px;line-height:11.5px;color:#e8e4e8;font-weight:normal;white-space:nowrap;">14</div><div style="position:absolute;left:346px;top:971.7px;font-size:11.5px;line-height:11.5px;color:#e8e4e8;font-weight:normal;white-space:nowrap;">Unrouted</div><div style="position:absolute;left:346px;top:984.2px;font-size:11.5px;line-height:11.5px;color:#e8e4e8;font-weight:normal;white-space:nowrap;">0</div><div style="position:absolute;left:57px;top:996px;width:1525px;height:1px;background:#050505"></div><div style="position:absolute;left:62px;top:1003.9px;font-size:11.7px;line-height:11.7px;color:#c4c0c4;font-weight:normal;white-space:nowrap;">File '/Users/kiloan/ATX Breakout/ATX Breakout.kicad_pcb' saved.</div><div style="position:absolute;left:583px;top:1003.9px;font-size:11.7px;line-height:11.7px;color:#c4c0c4;font-weight:normal;white-space:nowrap;">Z 1.88</div><div style="position:absolute;left:655px;top:1003.9px;font-size:11.7px;line-height:11.7px;color:#c4c0c4;font-weight:normal;white-space:nowrap;">X 78.0000&nbsp; Y 126.5000</div><div style="position:absolute;left:811px;top:1003.9px;font-size:11.7px;line-height:11.7px;color:#c4c0c4;font-weight:normal;white-space:nowrap;">dx 78.0000&nbsp; dy 126.5000&nbsp; dist 148.6144</div><div style="position:absolute;left:1063px;top:1003.9px;font-size:11.7px;line-height:11.7px;color:#c4c0c4;font-weight:normal;white-space:nowrap;">grid 0.5000</div><div style="position:absolute;left:1243px;top:1003.9px;font-size:11.7px;line-height:11.7px;color:#c4c0c4;font-weight:normal;white-space:nowrap;">mm</div><div style="position:absolute;left:1299px;top:1003.9px;font-size:11.7px;line-height:11.7px;color:#c4c0c4;font-weight:normal;white-space:nowrap;">Select item(s)</div>
</body></html>
